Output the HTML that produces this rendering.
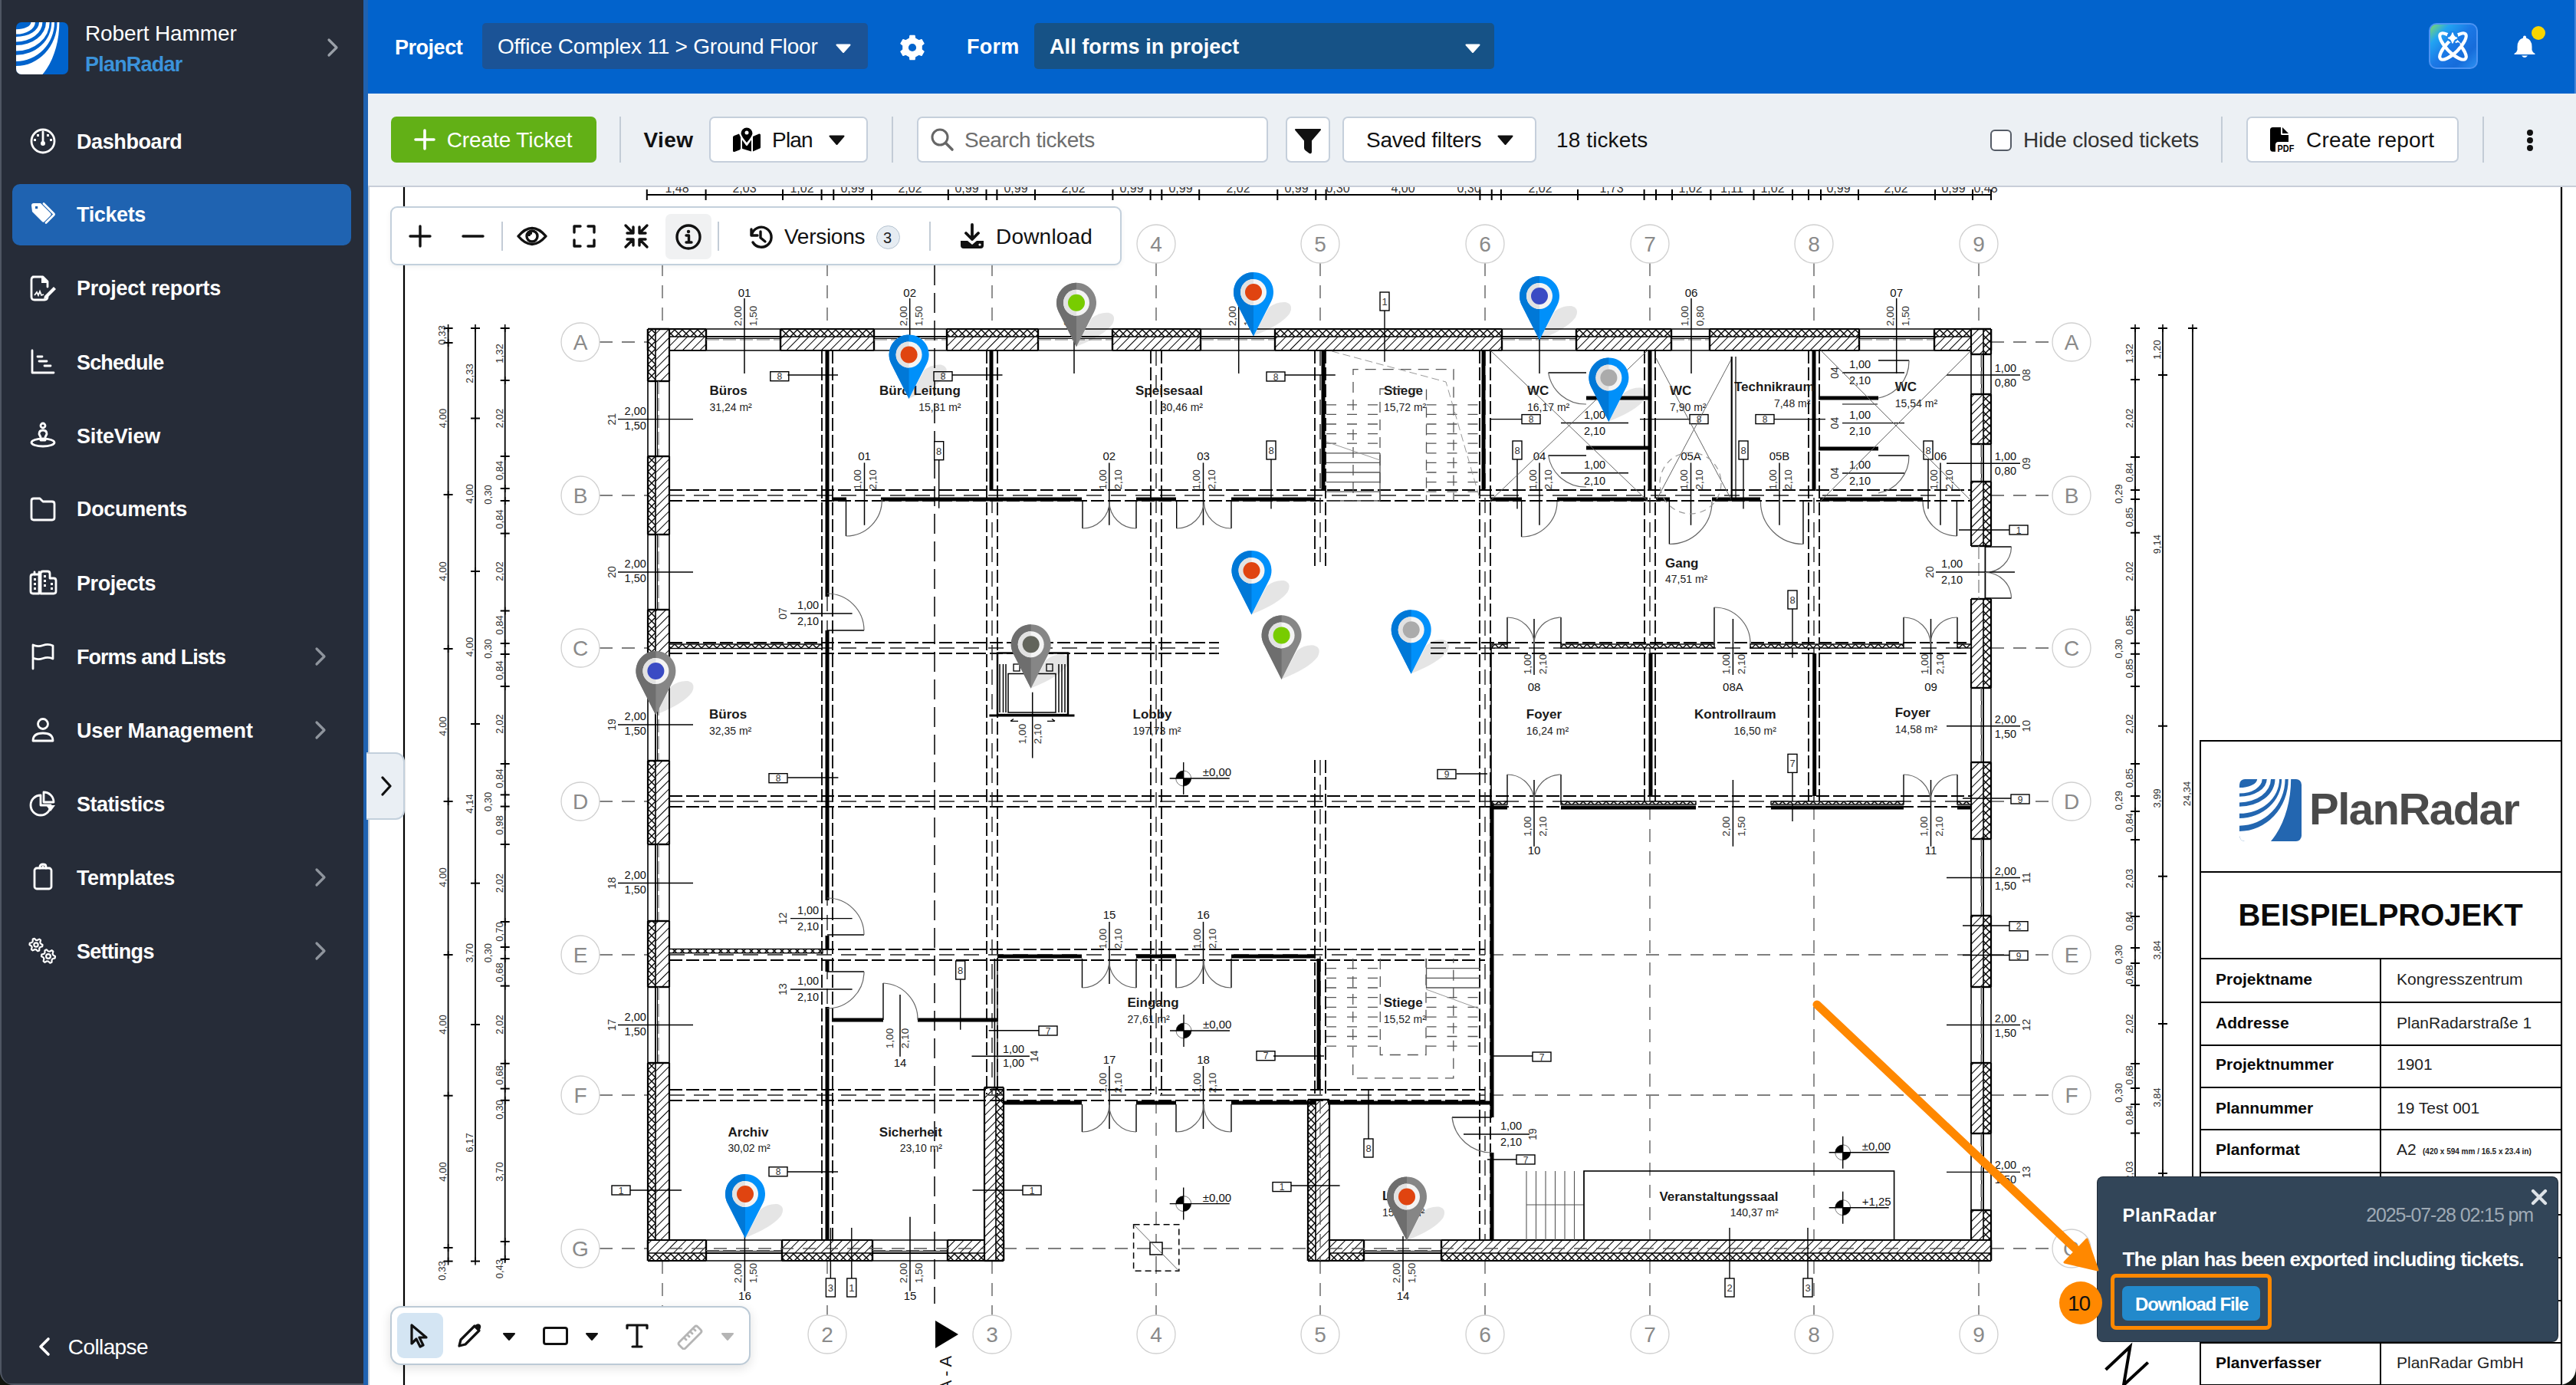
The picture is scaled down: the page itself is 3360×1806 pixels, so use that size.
<!DOCTYPE html>
<html><head><meta charset="utf-8"><style>
html,body{margin:0;padding:0;}
body{width:3360px;height:1806px;position:relative;overflow:hidden;background:#1a1d16;font-family:"Liberation Sans",sans-serif;}
.t{position:absolute;line-height:1;white-space:nowrap;}
#sb{position:absolute;left:0;top:0;width:474px;height:1806px;background:#262C38;}
svg text{font-family:"Liberation Sans",sans-serif;}
</style></head><body>
<svg style="position:absolute;left:0;top:0" width="3360" height="1806" viewBox="0 0 3360 1806">
<clipPath id="pc"><rect x="482" y="244" width="2878" height="1562"/></clipPath>
<g clip-path="url(#pc)">
<defs>
<pattern id="dh" width="8" height="8" patternUnits="userSpaceOnUse" patternTransform="rotate(45)"><rect width="8" height="8" fill="#fff"/><line x1="0" y1="0" x2="0" y2="8" stroke="#000" stroke-width="2.0"/></pattern>
<pattern id="xh" width="10" height="10" patternUnits="userSpaceOnUse"><rect width="10" height="10" fill="#fff"/><path d="M0 0 L10 10 M10 0 L0 10" stroke="#000" stroke-width="1.4"/></pattern>
</defs>
<rect x="482" y="244" width="2878" height="1562" fill="#fff"/>
<line x1="527.0" y1="244.0" x2="527.0" y2="1806.0" stroke="#000" stroke-width="2.2"/>
<line x1="3341.0" y1="244.0" x2="3341.0" y2="1806.0" stroke="#000" stroke-width="2.2"/>
<line x1="864.0" y1="343.0" x2="864.0" y2="429.0" stroke="#555" stroke-width="1.3" stroke-dasharray="17 12"/>
<line x1="864.0" y1="1644.0" x2="864.0" y2="1715.0" stroke="#555" stroke-width="1.3" stroke-dasharray="17 12"/>
<line x1="1079.0" y1="343.0" x2="1079.0" y2="429.0" stroke="#555" stroke-width="1.3" stroke-dasharray="17 12"/>
<line x1="1079.0" y1="1644.0" x2="1079.0" y2="1715.0" stroke="#555" stroke-width="1.3" stroke-dasharray="17 12"/>
<line x1="1294.0" y1="343.0" x2="1294.0" y2="429.0" stroke="#555" stroke-width="1.3" stroke-dasharray="17 12"/>
<line x1="1294.0" y1="1644.0" x2="1294.0" y2="1715.0" stroke="#555" stroke-width="1.3" stroke-dasharray="17 12"/>
<line x1="1508.0" y1="343.0" x2="1508.0" y2="429.0" stroke="#555" stroke-width="1.3" stroke-dasharray="17 12"/>
<line x1="1508.0" y1="1644.0" x2="1508.0" y2="1715.0" stroke="#555" stroke-width="1.3" stroke-dasharray="17 12"/>
<line x1="1722.0" y1="343.0" x2="1722.0" y2="429.0" stroke="#555" stroke-width="1.3" stroke-dasharray="17 12"/>
<line x1="1722.0" y1="1644.0" x2="1722.0" y2="1715.0" stroke="#555" stroke-width="1.3" stroke-dasharray="17 12"/>
<line x1="1937.0" y1="343.0" x2="1937.0" y2="429.0" stroke="#555" stroke-width="1.3" stroke-dasharray="17 12"/>
<line x1="1937.0" y1="1644.0" x2="1937.0" y2="1715.0" stroke="#555" stroke-width="1.3" stroke-dasharray="17 12"/>
<line x1="2152.0" y1="343.0" x2="2152.0" y2="429.0" stroke="#555" stroke-width="1.3" stroke-dasharray="17 12"/>
<line x1="2152.0" y1="1644.0" x2="2152.0" y2="1715.0" stroke="#555" stroke-width="1.3" stroke-dasharray="17 12"/>
<line x1="2366.0" y1="343.0" x2="2366.0" y2="429.0" stroke="#555" stroke-width="1.3" stroke-dasharray="17 12"/>
<line x1="2366.0" y1="1644.0" x2="2366.0" y2="1715.0" stroke="#555" stroke-width="1.3" stroke-dasharray="17 12"/>
<line x1="2581.0" y1="343.0" x2="2581.0" y2="429.0" stroke="#555" stroke-width="1.3" stroke-dasharray="17 12"/>
<line x1="2581.0" y1="1644.0" x2="2581.0" y2="1715.0" stroke="#555" stroke-width="1.3" stroke-dasharray="17 12"/>
<line x1="782.0" y1="446.0" x2="845.0" y2="446.0" stroke="#555" stroke-width="1.3" stroke-dasharray="17 12"/>
<line x1="2597.0" y1="446.0" x2="2677.0" y2="446.0" stroke="#555" stroke-width="1.3" stroke-dasharray="17 12"/>
<line x1="782.0" y1="646.0" x2="845.0" y2="646.0" stroke="#555" stroke-width="1.3" stroke-dasharray="17 12"/>
<line x1="2597.0" y1="646.0" x2="2677.0" y2="646.0" stroke="#555" stroke-width="1.3" stroke-dasharray="17 12"/>
<line x1="782.0" y1="845.0" x2="845.0" y2="845.0" stroke="#555" stroke-width="1.3" stroke-dasharray="17 12"/>
<line x1="2597.0" y1="845.0" x2="2677.0" y2="845.0" stroke="#555" stroke-width="1.3" stroke-dasharray="17 12"/>
<line x1="782.0" y1="1045.0" x2="845.0" y2="1045.0" stroke="#555" stroke-width="1.3" stroke-dasharray="17 12"/>
<line x1="2597.0" y1="1045.0" x2="2677.0" y2="1045.0" stroke="#555" stroke-width="1.3" stroke-dasharray="17 12"/>
<line x1="782.0" y1="1245.0" x2="845.0" y2="1245.0" stroke="#555" stroke-width="1.3" stroke-dasharray="17 12"/>
<line x1="2597.0" y1="1245.0" x2="2677.0" y2="1245.0" stroke="#555" stroke-width="1.3" stroke-dasharray="17 12"/>
<line x1="782.0" y1="1428.0" x2="845.0" y2="1428.0" stroke="#555" stroke-width="1.3" stroke-dasharray="17 12"/>
<line x1="2597.0" y1="1428.0" x2="2677.0" y2="1428.0" stroke="#555" stroke-width="1.3" stroke-dasharray="17 12"/>
<line x1="782.0" y1="1628.0" x2="845.0" y2="1628.0" stroke="#555" stroke-width="1.3" stroke-dasharray="17 12"/>
<line x1="2597.0" y1="1628.0" x2="2677.0" y2="1628.0" stroke="#555" stroke-width="1.3" stroke-dasharray="17 12"/>
<circle cx="1079" cy="1740" r="25" fill="#fff" stroke="#d0d0d0" stroke-width="1.3"/>
<text x="1079.0" y="1750.0" font-size="28" font-weight="400" text-anchor="middle" fill="#8a8a8a">2</text>
<circle cx="1294" cy="1740" r="25" fill="#fff" stroke="#d0d0d0" stroke-width="1.3"/>
<text x="1294.0" y="1750.0" font-size="28" font-weight="400" text-anchor="middle" fill="#8a8a8a">3</text>
<circle cx="1508" cy="318" r="25" fill="#fff" stroke="#d0d0d0" stroke-width="1.3"/>
<text x="1508.0" y="328.0" font-size="28" font-weight="400" text-anchor="middle" fill="#8a8a8a">4</text>
<circle cx="1508" cy="1740" r="25" fill="#fff" stroke="#d0d0d0" stroke-width="1.3"/>
<text x="1508.0" y="1750.0" font-size="28" font-weight="400" text-anchor="middle" fill="#8a8a8a">4</text>
<circle cx="1722" cy="318" r="25" fill="#fff" stroke="#d0d0d0" stroke-width="1.3"/>
<text x="1722.0" y="328.0" font-size="28" font-weight="400" text-anchor="middle" fill="#8a8a8a">5</text>
<circle cx="1722" cy="1740" r="25" fill="#fff" stroke="#d0d0d0" stroke-width="1.3"/>
<text x="1722.0" y="1750.0" font-size="28" font-weight="400" text-anchor="middle" fill="#8a8a8a">5</text>
<circle cx="1937" cy="318" r="25" fill="#fff" stroke="#d0d0d0" stroke-width="1.3"/>
<text x="1937.0" y="328.0" font-size="28" font-weight="400" text-anchor="middle" fill="#8a8a8a">6</text>
<circle cx="1937" cy="1740" r="25" fill="#fff" stroke="#d0d0d0" stroke-width="1.3"/>
<text x="1937.0" y="1750.0" font-size="28" font-weight="400" text-anchor="middle" fill="#8a8a8a">6</text>
<circle cx="2152" cy="318" r="25" fill="#fff" stroke="#d0d0d0" stroke-width="1.3"/>
<text x="2152.0" y="328.0" font-size="28" font-weight="400" text-anchor="middle" fill="#8a8a8a">7</text>
<circle cx="2152" cy="1740" r="25" fill="#fff" stroke="#d0d0d0" stroke-width="1.3"/>
<text x="2152.0" y="1750.0" font-size="28" font-weight="400" text-anchor="middle" fill="#8a8a8a">7</text>
<circle cx="2366" cy="318" r="25" fill="#fff" stroke="#d0d0d0" stroke-width="1.3"/>
<text x="2366.0" y="328.0" font-size="28" font-weight="400" text-anchor="middle" fill="#8a8a8a">8</text>
<circle cx="2366" cy="1740" r="25" fill="#fff" stroke="#d0d0d0" stroke-width="1.3"/>
<text x="2366.0" y="1750.0" font-size="28" font-weight="400" text-anchor="middle" fill="#8a8a8a">8</text>
<circle cx="2581" cy="318" r="25" fill="#fff" stroke="#d0d0d0" stroke-width="1.3"/>
<text x="2581.0" y="328.0" font-size="28" font-weight="400" text-anchor="middle" fill="#8a8a8a">9</text>
<circle cx="2581" cy="1740" r="25" fill="#fff" stroke="#d0d0d0" stroke-width="1.3"/>
<text x="2581.0" y="1750.0" font-size="28" font-weight="400" text-anchor="middle" fill="#8a8a8a">9</text>
<circle cx="757" cy="446" r="25" fill="#fff" stroke="#d0d0d0" stroke-width="1.3"/>
<text x="757.0" y="456.0" font-size="28" font-weight="400" text-anchor="middle" fill="#8a8a8a">A</text>
<circle cx="2702" cy="446" r="25" fill="#fff" stroke="#d0d0d0" stroke-width="1.3"/>
<text x="2702.0" y="456.0" font-size="28" font-weight="400" text-anchor="middle" fill="#8a8a8a">A</text>
<circle cx="757" cy="646" r="25" fill="#fff" stroke="#d0d0d0" stroke-width="1.3"/>
<text x="757.0" y="656.0" font-size="28" font-weight="400" text-anchor="middle" fill="#8a8a8a">B</text>
<circle cx="2702" cy="646" r="25" fill="#fff" stroke="#d0d0d0" stroke-width="1.3"/>
<text x="2702.0" y="656.0" font-size="28" font-weight="400" text-anchor="middle" fill="#8a8a8a">B</text>
<circle cx="757" cy="845" r="25" fill="#fff" stroke="#d0d0d0" stroke-width="1.3"/>
<text x="757.0" y="855.0" font-size="28" font-weight="400" text-anchor="middle" fill="#8a8a8a">C</text>
<circle cx="2702" cy="845" r="25" fill="#fff" stroke="#d0d0d0" stroke-width="1.3"/>
<text x="2702.0" y="855.0" font-size="28" font-weight="400" text-anchor="middle" fill="#8a8a8a">C</text>
<circle cx="757" cy="1045" r="25" fill="#fff" stroke="#d0d0d0" stroke-width="1.3"/>
<text x="757.0" y="1055.0" font-size="28" font-weight="400" text-anchor="middle" fill="#8a8a8a">D</text>
<circle cx="2702" cy="1045" r="25" fill="#fff" stroke="#d0d0d0" stroke-width="1.3"/>
<text x="2702.0" y="1055.0" font-size="28" font-weight="400" text-anchor="middle" fill="#8a8a8a">D</text>
<circle cx="757" cy="1245" r="25" fill="#fff" stroke="#d0d0d0" stroke-width="1.3"/>
<text x="757.0" y="1255.0" font-size="28" font-weight="400" text-anchor="middle" fill="#8a8a8a">E</text>
<circle cx="2702" cy="1245" r="25" fill="#fff" stroke="#d0d0d0" stroke-width="1.3"/>
<text x="2702.0" y="1255.0" font-size="28" font-weight="400" text-anchor="middle" fill="#8a8a8a">E</text>
<circle cx="757" cy="1428" r="25" fill="#fff" stroke="#d0d0d0" stroke-width="1.3"/>
<text x="757.0" y="1438.0" font-size="28" font-weight="400" text-anchor="middle" fill="#8a8a8a">F</text>
<circle cx="2702" cy="1428" r="25" fill="#fff" stroke="#d0d0d0" stroke-width="1.3"/>
<text x="2702.0" y="1438.0" font-size="28" font-weight="400" text-anchor="middle" fill="#8a8a8a">F</text>
<circle cx="757" cy="1628" r="25" fill="#fff" stroke="#d0d0d0" stroke-width="1.3"/>
<text x="757.0" y="1638.0" font-size="28" font-weight="400" text-anchor="middle" fill="#8a8a8a">G</text>
<circle cx="2702" cy="1628" r="25" fill="#fff" stroke="#d0d0d0" stroke-width="1.3"/>
<text x="2702.0" y="1638.0" font-size="28" font-weight="400" text-anchor="middle" fill="#8a8a8a">G</text>
<rect x="845.0" y="429.0" width="76.0" height="10.0" fill="url(#xh)" stroke="none" stroke-width="0"/>
<rect x="845.0" y="439.0" width="76.0" height="18.0" fill="url(#dh)" stroke="none" stroke-width="0"/>
<line x1="845.0" y1="429.0" x2="921.0" y2="429.0" stroke="#000" stroke-width="2.2"/>
<line x1="845.0" y1="457.0" x2="921.0" y2="457.0" stroke="#000" stroke-width="2.2"/>
<line x1="845.0" y1="439.0" x2="921.0" y2="439.0" stroke="#000" stroke-width="1.6"/>
<line x1="845.0" y1="429.0" x2="845.0" y2="457.0" stroke="#000" stroke-width="2.4"/>
<line x1="921.0" y1="429.0" x2="921.0" y2="457.0" stroke="#000" stroke-width="2.4"/>
<line x1="921.0" y1="429.0" x2="1018.0" y2="429.0" stroke="#000" stroke-width="1.6"/>
<line x1="921.0" y1="439.0" x2="1018.0" y2="439.0" stroke="#000" stroke-width="2.0"/>
<line x1="921.0" y1="441.5" x2="1018.0" y2="441.5" stroke="#000" stroke-width="1.0"/>
<line x1="921.0" y1="457.0" x2="1018.0" y2="457.0" stroke="#000" stroke-width="1.6"/>
<line x1="921.0" y1="443.0" x2="1018.0" y2="443.0" stroke="#777" stroke-width="1.2" stroke-dasharray="17 5"/>
<rect x="1018.0" y="429.0" width="122.0" height="10.0" fill="url(#xh)" stroke="none" stroke-width="0"/>
<rect x="1018.0" y="439.0" width="122.0" height="18.0" fill="url(#dh)" stroke="none" stroke-width="0"/>
<line x1="1018.0" y1="429.0" x2="1140.0" y2="429.0" stroke="#000" stroke-width="2.2"/>
<line x1="1018.0" y1="457.0" x2="1140.0" y2="457.0" stroke="#000" stroke-width="2.2"/>
<line x1="1018.0" y1="439.0" x2="1140.0" y2="439.0" stroke="#000" stroke-width="1.6"/>
<line x1="1018.0" y1="429.0" x2="1018.0" y2="457.0" stroke="#000" stroke-width="2.4"/>
<line x1="1140.0" y1="429.0" x2="1140.0" y2="457.0" stroke="#000" stroke-width="2.4"/>
<line x1="1140.0" y1="429.0" x2="1235.0" y2="429.0" stroke="#000" stroke-width="1.6"/>
<line x1="1140.0" y1="439.0" x2="1235.0" y2="439.0" stroke="#000" stroke-width="2.0"/>
<line x1="1140.0" y1="441.5" x2="1235.0" y2="441.5" stroke="#000" stroke-width="1.0"/>
<line x1="1140.0" y1="457.0" x2="1235.0" y2="457.0" stroke="#000" stroke-width="1.6"/>
<line x1="1140.0" y1="443.0" x2="1235.0" y2="443.0" stroke="#777" stroke-width="1.2" stroke-dasharray="17 5"/>
<rect x="1235.0" y="429.0" width="119.0" height="10.0" fill="url(#xh)" stroke="none" stroke-width="0"/>
<rect x="1235.0" y="439.0" width="119.0" height="18.0" fill="url(#dh)" stroke="none" stroke-width="0"/>
<line x1="1235.0" y1="429.0" x2="1354.0" y2="429.0" stroke="#000" stroke-width="2.2"/>
<line x1="1235.0" y1="457.0" x2="1354.0" y2="457.0" stroke="#000" stroke-width="2.2"/>
<line x1="1235.0" y1="439.0" x2="1354.0" y2="439.0" stroke="#000" stroke-width="1.6"/>
<line x1="1235.0" y1="429.0" x2="1235.0" y2="457.0" stroke="#000" stroke-width="2.4"/>
<line x1="1354.0" y1="429.0" x2="1354.0" y2="457.0" stroke="#000" stroke-width="2.4"/>
<line x1="1354.0" y1="429.0" x2="1451.0" y2="429.0" stroke="#000" stroke-width="1.6"/>
<line x1="1354.0" y1="439.0" x2="1451.0" y2="439.0" stroke="#000" stroke-width="2.0"/>
<line x1="1354.0" y1="441.5" x2="1451.0" y2="441.5" stroke="#000" stroke-width="1.0"/>
<line x1="1354.0" y1="457.0" x2="1451.0" y2="457.0" stroke="#000" stroke-width="1.6"/>
<line x1="1354.0" y1="443.0" x2="1451.0" y2="443.0" stroke="#777" stroke-width="1.2" stroke-dasharray="17 5"/>
<rect x="1451.0" y="429.0" width="115.0" height="10.0" fill="url(#xh)" stroke="none" stroke-width="0"/>
<rect x="1451.0" y="439.0" width="115.0" height="18.0" fill="url(#dh)" stroke="none" stroke-width="0"/>
<line x1="1451.0" y1="429.0" x2="1566.0" y2="429.0" stroke="#000" stroke-width="2.2"/>
<line x1="1451.0" y1="457.0" x2="1566.0" y2="457.0" stroke="#000" stroke-width="2.2"/>
<line x1="1451.0" y1="439.0" x2="1566.0" y2="439.0" stroke="#000" stroke-width="1.6"/>
<line x1="1451.0" y1="429.0" x2="1451.0" y2="457.0" stroke="#000" stroke-width="2.4"/>
<line x1="1566.0" y1="429.0" x2="1566.0" y2="457.0" stroke="#000" stroke-width="2.4"/>
<line x1="1566.0" y1="429.0" x2="1663.0" y2="429.0" stroke="#000" stroke-width="1.6"/>
<line x1="1566.0" y1="439.0" x2="1663.0" y2="439.0" stroke="#000" stroke-width="2.0"/>
<line x1="1566.0" y1="441.5" x2="1663.0" y2="441.5" stroke="#000" stroke-width="1.0"/>
<line x1="1566.0" y1="457.0" x2="1663.0" y2="457.0" stroke="#000" stroke-width="1.6"/>
<line x1="1566.0" y1="443.0" x2="1663.0" y2="443.0" stroke="#777" stroke-width="1.2" stroke-dasharray="17 5"/>
<rect x="1663.0" y="429.0" width="296.0" height="10.0" fill="url(#xh)" stroke="none" stroke-width="0"/>
<rect x="1663.0" y="439.0" width="296.0" height="18.0" fill="url(#dh)" stroke="none" stroke-width="0"/>
<line x1="1663.0" y1="429.0" x2="1959.0" y2="429.0" stroke="#000" stroke-width="2.2"/>
<line x1="1663.0" y1="457.0" x2="1959.0" y2="457.0" stroke="#000" stroke-width="2.2"/>
<line x1="1663.0" y1="439.0" x2="1959.0" y2="439.0" stroke="#000" stroke-width="1.6"/>
<line x1="1663.0" y1="429.0" x2="1663.0" y2="457.0" stroke="#000" stroke-width="2.4"/>
<line x1="1959.0" y1="429.0" x2="1959.0" y2="457.0" stroke="#000" stroke-width="2.4"/>
<line x1="1959.0" y1="429.0" x2="2056.0" y2="429.0" stroke="#000" stroke-width="1.6"/>
<line x1="1959.0" y1="439.0" x2="2056.0" y2="439.0" stroke="#000" stroke-width="2.0"/>
<line x1="1959.0" y1="441.5" x2="2056.0" y2="441.5" stroke="#000" stroke-width="1.0"/>
<line x1="1959.0" y1="457.0" x2="2056.0" y2="457.0" stroke="#000" stroke-width="1.6"/>
<line x1="1959.0" y1="443.0" x2="2056.0" y2="443.0" stroke="#777" stroke-width="1.2" stroke-dasharray="17 5"/>
<rect x="2056.0" y="429.0" width="124.0" height="10.0" fill="url(#xh)" stroke="none" stroke-width="0"/>
<rect x="2056.0" y="439.0" width="124.0" height="18.0" fill="url(#dh)" stroke="none" stroke-width="0"/>
<line x1="2056.0" y1="429.0" x2="2180.0" y2="429.0" stroke="#000" stroke-width="2.2"/>
<line x1="2056.0" y1="457.0" x2="2180.0" y2="457.0" stroke="#000" stroke-width="2.2"/>
<line x1="2056.0" y1="439.0" x2="2180.0" y2="439.0" stroke="#000" stroke-width="1.6"/>
<line x1="2056.0" y1="429.0" x2="2056.0" y2="457.0" stroke="#000" stroke-width="2.4"/>
<line x1="2180.0" y1="429.0" x2="2180.0" y2="457.0" stroke="#000" stroke-width="2.4"/>
<line x1="2180.0" y1="429.0" x2="2230.0" y2="429.0" stroke="#000" stroke-width="1.6"/>
<line x1="2180.0" y1="439.0" x2="2230.0" y2="439.0" stroke="#000" stroke-width="2.0"/>
<line x1="2180.0" y1="441.5" x2="2230.0" y2="441.5" stroke="#000" stroke-width="1.0"/>
<line x1="2180.0" y1="457.0" x2="2230.0" y2="457.0" stroke="#000" stroke-width="1.6"/>
<line x1="2180.0" y1="443.0" x2="2230.0" y2="443.0" stroke="#777" stroke-width="1.2" stroke-dasharray="17 5"/>
<rect x="2230.0" y="429.0" width="195.0" height="10.0" fill="url(#xh)" stroke="none" stroke-width="0"/>
<rect x="2230.0" y="439.0" width="195.0" height="18.0" fill="url(#dh)" stroke="none" stroke-width="0"/>
<line x1="2230.0" y1="429.0" x2="2425.0" y2="429.0" stroke="#000" stroke-width="2.2"/>
<line x1="2230.0" y1="457.0" x2="2425.0" y2="457.0" stroke="#000" stroke-width="2.2"/>
<line x1="2230.0" y1="439.0" x2="2425.0" y2="439.0" stroke="#000" stroke-width="1.6"/>
<line x1="2230.0" y1="429.0" x2="2230.0" y2="457.0" stroke="#000" stroke-width="2.4"/>
<line x1="2425.0" y1="429.0" x2="2425.0" y2="457.0" stroke="#000" stroke-width="2.4"/>
<line x1="2425.0" y1="429.0" x2="2523.0" y2="429.0" stroke="#000" stroke-width="1.6"/>
<line x1="2425.0" y1="439.0" x2="2523.0" y2="439.0" stroke="#000" stroke-width="2.0"/>
<line x1="2425.0" y1="441.5" x2="2523.0" y2="441.5" stroke="#000" stroke-width="1.0"/>
<line x1="2425.0" y1="457.0" x2="2523.0" y2="457.0" stroke="#000" stroke-width="1.6"/>
<line x1="2425.0" y1="443.0" x2="2523.0" y2="443.0" stroke="#777" stroke-width="1.2" stroke-dasharray="17 5"/>
<rect x="2523.0" y="429.0" width="74.0" height="10.0" fill="url(#xh)" stroke="none" stroke-width="0"/>
<rect x="2523.0" y="439.0" width="74.0" height="18.0" fill="url(#dh)" stroke="none" stroke-width="0"/>
<line x1="2523.0" y1="429.0" x2="2597.0" y2="429.0" stroke="#000" stroke-width="2.2"/>
<line x1="2523.0" y1="457.0" x2="2597.0" y2="457.0" stroke="#000" stroke-width="2.2"/>
<line x1="2523.0" y1="439.0" x2="2597.0" y2="439.0" stroke="#000" stroke-width="1.6"/>
<line x1="2523.0" y1="429.0" x2="2523.0" y2="457.0" stroke="#000" stroke-width="2.4"/>
<line x1="2597.0" y1="429.0" x2="2597.0" y2="457.0" stroke="#000" stroke-width="2.4"/>
<rect x="845.0" y="429.0" width="10.0" height="68.0" fill="url(#xh)" stroke="none" stroke-width="0"/>
<rect x="855.0" y="429.0" width="18.0" height="68.0" fill="url(#dh)" stroke="none" stroke-width="0"/>
<line x1="845.0" y1="429.0" x2="845.0" y2="497.0" stroke="#000" stroke-width="2.2"/>
<line x1="873.0" y1="429.0" x2="873.0" y2="497.0" stroke="#000" stroke-width="2.2"/>
<line x1="855.0" y1="429.0" x2="855.0" y2="497.0" stroke="#000" stroke-width="1.6"/>
<line x1="845.0" y1="429.0" x2="873.0" y2="429.0" stroke="#000" stroke-width="2.4"/>
<line x1="845.0" y1="497.0" x2="873.0" y2="497.0" stroke="#000" stroke-width="2.4"/>
<line x1="845.0" y1="497.0" x2="845.0" y2="595.0" stroke="#000" stroke-width="1.6"/>
<line x1="855.0" y1="497.0" x2="855.0" y2="595.0" stroke="#000" stroke-width="2.0"/>
<line x1="857.5" y1="497.0" x2="857.5" y2="595.0" stroke="#000" stroke-width="1.0"/>
<line x1="873.0" y1="497.0" x2="873.0" y2="595.0" stroke="#000" stroke-width="1.6"/>
<line x1="859.0" y1="497.0" x2="859.0" y2="595.0" stroke="#777" stroke-width="1.2" stroke-dasharray="17 5"/>
<rect x="845.0" y="595.0" width="10.0" height="102.0" fill="url(#xh)" stroke="none" stroke-width="0"/>
<rect x="855.0" y="595.0" width="18.0" height="102.0" fill="url(#dh)" stroke="none" stroke-width="0"/>
<line x1="845.0" y1="595.0" x2="845.0" y2="697.0" stroke="#000" stroke-width="2.2"/>
<line x1="873.0" y1="595.0" x2="873.0" y2="697.0" stroke="#000" stroke-width="2.2"/>
<line x1="855.0" y1="595.0" x2="855.0" y2="697.0" stroke="#000" stroke-width="1.6"/>
<line x1="845.0" y1="595.0" x2="873.0" y2="595.0" stroke="#000" stroke-width="2.4"/>
<line x1="845.0" y1="697.0" x2="873.0" y2="697.0" stroke="#000" stroke-width="2.4"/>
<line x1="845.0" y1="697.0" x2="845.0" y2="795.0" stroke="#000" stroke-width="1.6"/>
<line x1="855.0" y1="697.0" x2="855.0" y2="795.0" stroke="#000" stroke-width="2.0"/>
<line x1="857.5" y1="697.0" x2="857.5" y2="795.0" stroke="#000" stroke-width="1.0"/>
<line x1="873.0" y1="697.0" x2="873.0" y2="795.0" stroke="#000" stroke-width="1.6"/>
<line x1="859.0" y1="697.0" x2="859.0" y2="795.0" stroke="#777" stroke-width="1.2" stroke-dasharray="17 5"/>
<rect x="845.0" y="795.0" width="10.0" height="99.0" fill="url(#xh)" stroke="none" stroke-width="0"/>
<rect x="855.0" y="795.0" width="18.0" height="99.0" fill="url(#dh)" stroke="none" stroke-width="0"/>
<line x1="845.0" y1="795.0" x2="845.0" y2="894.0" stroke="#000" stroke-width="2.2"/>
<line x1="873.0" y1="795.0" x2="873.0" y2="894.0" stroke="#000" stroke-width="2.2"/>
<line x1="855.0" y1="795.0" x2="855.0" y2="894.0" stroke="#000" stroke-width="1.6"/>
<line x1="845.0" y1="795.0" x2="873.0" y2="795.0" stroke="#000" stroke-width="2.4"/>
<line x1="845.0" y1="894.0" x2="873.0" y2="894.0" stroke="#000" stroke-width="2.4"/>
<line x1="845.0" y1="894.0" x2="845.0" y2="992.0" stroke="#000" stroke-width="1.6"/>
<line x1="855.0" y1="894.0" x2="855.0" y2="992.0" stroke="#000" stroke-width="2.0"/>
<line x1="857.5" y1="894.0" x2="857.5" y2="992.0" stroke="#000" stroke-width="1.0"/>
<line x1="873.0" y1="894.0" x2="873.0" y2="992.0" stroke="#000" stroke-width="1.6"/>
<line x1="859.0" y1="894.0" x2="859.0" y2="992.0" stroke="#777" stroke-width="1.2" stroke-dasharray="17 5"/>
<rect x="845.0" y="992.0" width="10.0" height="109.0" fill="url(#xh)" stroke="none" stroke-width="0"/>
<rect x="855.0" y="992.0" width="18.0" height="109.0" fill="url(#dh)" stroke="none" stroke-width="0"/>
<line x1="845.0" y1="992.0" x2="845.0" y2="1101.0" stroke="#000" stroke-width="2.2"/>
<line x1="873.0" y1="992.0" x2="873.0" y2="1101.0" stroke="#000" stroke-width="2.2"/>
<line x1="855.0" y1="992.0" x2="855.0" y2="1101.0" stroke="#000" stroke-width="1.6"/>
<line x1="845.0" y1="992.0" x2="873.0" y2="992.0" stroke="#000" stroke-width="2.4"/>
<line x1="845.0" y1="1101.0" x2="873.0" y2="1101.0" stroke="#000" stroke-width="2.4"/>
<line x1="845.0" y1="1101.0" x2="845.0" y2="1201.0" stroke="#000" stroke-width="1.6"/>
<line x1="855.0" y1="1101.0" x2="855.0" y2="1201.0" stroke="#000" stroke-width="2.0"/>
<line x1="857.5" y1="1101.0" x2="857.5" y2="1201.0" stroke="#000" stroke-width="1.0"/>
<line x1="873.0" y1="1101.0" x2="873.0" y2="1201.0" stroke="#000" stroke-width="1.6"/>
<line x1="859.0" y1="1101.0" x2="859.0" y2="1201.0" stroke="#777" stroke-width="1.2" stroke-dasharray="17 5"/>
<rect x="845.0" y="1201.0" width="10.0" height="86.0" fill="url(#xh)" stroke="none" stroke-width="0"/>
<rect x="855.0" y="1201.0" width="18.0" height="86.0" fill="url(#dh)" stroke="none" stroke-width="0"/>
<line x1="845.0" y1="1201.0" x2="845.0" y2="1287.0" stroke="#000" stroke-width="2.2"/>
<line x1="873.0" y1="1201.0" x2="873.0" y2="1287.0" stroke="#000" stroke-width="2.2"/>
<line x1="855.0" y1="1201.0" x2="855.0" y2="1287.0" stroke="#000" stroke-width="1.6"/>
<line x1="845.0" y1="1201.0" x2="873.0" y2="1201.0" stroke="#000" stroke-width="2.4"/>
<line x1="845.0" y1="1287.0" x2="873.0" y2="1287.0" stroke="#000" stroke-width="2.4"/>
<line x1="845.0" y1="1287.0" x2="845.0" y2="1386.0" stroke="#000" stroke-width="1.6"/>
<line x1="855.0" y1="1287.0" x2="855.0" y2="1386.0" stroke="#000" stroke-width="2.0"/>
<line x1="857.5" y1="1287.0" x2="857.5" y2="1386.0" stroke="#000" stroke-width="1.0"/>
<line x1="873.0" y1="1287.0" x2="873.0" y2="1386.0" stroke="#000" stroke-width="1.6"/>
<line x1="859.0" y1="1287.0" x2="859.0" y2="1386.0" stroke="#777" stroke-width="1.2" stroke-dasharray="17 5"/>
<rect x="845.0" y="1386.0" width="10.0" height="258.0" fill="url(#xh)" stroke="none" stroke-width="0"/>
<rect x="855.0" y="1386.0" width="18.0" height="258.0" fill="url(#dh)" stroke="none" stroke-width="0"/>
<line x1="845.0" y1="1386.0" x2="845.0" y2="1644.0" stroke="#000" stroke-width="2.2"/>
<line x1="873.0" y1="1386.0" x2="873.0" y2="1644.0" stroke="#000" stroke-width="2.2"/>
<line x1="855.0" y1="1386.0" x2="855.0" y2="1644.0" stroke="#000" stroke-width="1.6"/>
<line x1="845.0" y1="1386.0" x2="873.0" y2="1386.0" stroke="#000" stroke-width="2.4"/>
<line x1="845.0" y1="1644.0" x2="873.0" y2="1644.0" stroke="#000" stroke-width="2.4"/>
<rect x="2587.0" y="429.0" width="10.0" height="33.0" fill="url(#xh)" stroke="none" stroke-width="0"/>
<rect x="2571.0" y="429.0" width="16.0" height="33.0" fill="url(#dh)" stroke="none" stroke-width="0"/>
<line x1="2597.0" y1="429.0" x2="2597.0" y2="462.0" stroke="#000" stroke-width="2.2"/>
<line x1="2571.0" y1="429.0" x2="2571.0" y2="462.0" stroke="#000" stroke-width="2.2"/>
<line x1="2587.0" y1="429.0" x2="2587.0" y2="462.0" stroke="#000" stroke-width="1.6"/>
<line x1="2571.0" y1="429.0" x2="2597.0" y2="429.0" stroke="#000" stroke-width="2.4"/>
<line x1="2571.0" y1="462.0" x2="2597.0" y2="462.0" stroke="#000" stroke-width="2.4"/>
<line x1="2597.0" y1="462.0" x2="2597.0" y2="514.0" stroke="#000" stroke-width="1.6"/>
<line x1="2587.0" y1="462.0" x2="2587.0" y2="514.0" stroke="#000" stroke-width="2.0"/>
<line x1="2584.5" y1="462.0" x2="2584.5" y2="514.0" stroke="#000" stroke-width="1.0"/>
<line x1="2571.0" y1="462.0" x2="2571.0" y2="514.0" stroke="#000" stroke-width="1.6"/>
<line x1="2584.0" y1="462.0" x2="2584.0" y2="514.0" stroke="#777" stroke-width="1.2" stroke-dasharray="17 5"/>
<rect x="2587.0" y="514.0" width="10.0" height="65.0" fill="url(#xh)" stroke="none" stroke-width="0"/>
<rect x="2571.0" y="514.0" width="16.0" height="65.0" fill="url(#dh)" stroke="none" stroke-width="0"/>
<line x1="2597.0" y1="514.0" x2="2597.0" y2="579.0" stroke="#000" stroke-width="2.2"/>
<line x1="2571.0" y1="514.0" x2="2571.0" y2="579.0" stroke="#000" stroke-width="2.2"/>
<line x1="2587.0" y1="514.0" x2="2587.0" y2="579.0" stroke="#000" stroke-width="1.6"/>
<line x1="2571.0" y1="514.0" x2="2597.0" y2="514.0" stroke="#000" stroke-width="2.4"/>
<line x1="2571.0" y1="579.0" x2="2597.0" y2="579.0" stroke="#000" stroke-width="2.4"/>
<line x1="2597.0" y1="579.0" x2="2597.0" y2="628.0" stroke="#000" stroke-width="1.6"/>
<line x1="2587.0" y1="579.0" x2="2587.0" y2="628.0" stroke="#000" stroke-width="2.0"/>
<line x1="2584.5" y1="579.0" x2="2584.5" y2="628.0" stroke="#000" stroke-width="1.0"/>
<line x1="2571.0" y1="579.0" x2="2571.0" y2="628.0" stroke="#000" stroke-width="1.6"/>
<line x1="2584.0" y1="579.0" x2="2584.0" y2="628.0" stroke="#777" stroke-width="1.2" stroke-dasharray="17 5"/>
<rect x="2587.0" y="628.0" width="10.0" height="84.0" fill="url(#xh)" stroke="none" stroke-width="0"/>
<rect x="2571.0" y="628.0" width="16.0" height="84.0" fill="url(#dh)" stroke="none" stroke-width="0"/>
<line x1="2597.0" y1="628.0" x2="2597.0" y2="712.0" stroke="#000" stroke-width="2.2"/>
<line x1="2571.0" y1="628.0" x2="2571.0" y2="712.0" stroke="#000" stroke-width="2.2"/>
<line x1="2587.0" y1="628.0" x2="2587.0" y2="712.0" stroke="#000" stroke-width="1.6"/>
<line x1="2571.0" y1="628.0" x2="2597.0" y2="628.0" stroke="#000" stroke-width="2.4"/>
<line x1="2571.0" y1="712.0" x2="2597.0" y2="712.0" stroke="#000" stroke-width="2.4"/>
<rect x="2587.0" y="781.0" width="10.0" height="116.0" fill="url(#xh)" stroke="none" stroke-width="0"/>
<rect x="2571.0" y="781.0" width="16.0" height="116.0" fill="url(#dh)" stroke="none" stroke-width="0"/>
<line x1="2597.0" y1="781.0" x2="2597.0" y2="897.0" stroke="#000" stroke-width="2.2"/>
<line x1="2571.0" y1="781.0" x2="2571.0" y2="897.0" stroke="#000" stroke-width="2.2"/>
<line x1="2587.0" y1="781.0" x2="2587.0" y2="897.0" stroke="#000" stroke-width="1.6"/>
<line x1="2571.0" y1="781.0" x2="2597.0" y2="781.0" stroke="#000" stroke-width="2.4"/>
<line x1="2571.0" y1="897.0" x2="2597.0" y2="897.0" stroke="#000" stroke-width="2.4"/>
<line x1="2597.0" y1="897.0" x2="2597.0" y2="994.0" stroke="#000" stroke-width="1.6"/>
<line x1="2587.0" y1="897.0" x2="2587.0" y2="994.0" stroke="#000" stroke-width="2.0"/>
<line x1="2584.5" y1="897.0" x2="2584.5" y2="994.0" stroke="#000" stroke-width="1.0"/>
<line x1="2571.0" y1="897.0" x2="2571.0" y2="994.0" stroke="#000" stroke-width="1.6"/>
<line x1="2584.0" y1="897.0" x2="2584.0" y2="994.0" stroke="#777" stroke-width="1.2" stroke-dasharray="17 5"/>
<rect x="2587.0" y="994.0" width="10.0" height="100.0" fill="url(#xh)" stroke="none" stroke-width="0"/>
<rect x="2571.0" y="994.0" width="16.0" height="100.0" fill="url(#dh)" stroke="none" stroke-width="0"/>
<line x1="2597.0" y1="994.0" x2="2597.0" y2="1094.0" stroke="#000" stroke-width="2.2"/>
<line x1="2571.0" y1="994.0" x2="2571.0" y2="1094.0" stroke="#000" stroke-width="2.2"/>
<line x1="2587.0" y1="994.0" x2="2587.0" y2="1094.0" stroke="#000" stroke-width="1.6"/>
<line x1="2571.0" y1="994.0" x2="2597.0" y2="994.0" stroke="#000" stroke-width="2.4"/>
<line x1="2571.0" y1="1094.0" x2="2597.0" y2="1094.0" stroke="#000" stroke-width="2.4"/>
<line x1="2597.0" y1="1094.0" x2="2597.0" y2="1194.0" stroke="#000" stroke-width="1.6"/>
<line x1="2587.0" y1="1094.0" x2="2587.0" y2="1194.0" stroke="#000" stroke-width="2.0"/>
<line x1="2584.5" y1="1094.0" x2="2584.5" y2="1194.0" stroke="#000" stroke-width="1.0"/>
<line x1="2571.0" y1="1094.0" x2="2571.0" y2="1194.0" stroke="#000" stroke-width="1.6"/>
<line x1="2584.0" y1="1094.0" x2="2584.0" y2="1194.0" stroke="#777" stroke-width="1.2" stroke-dasharray="17 5"/>
<rect x="2587.0" y="1194.0" width="10.0" height="93.0" fill="url(#xh)" stroke="none" stroke-width="0"/>
<rect x="2571.0" y="1194.0" width="16.0" height="93.0" fill="url(#dh)" stroke="none" stroke-width="0"/>
<line x1="2597.0" y1="1194.0" x2="2597.0" y2="1287.0" stroke="#000" stroke-width="2.2"/>
<line x1="2571.0" y1="1194.0" x2="2571.0" y2="1287.0" stroke="#000" stroke-width="2.2"/>
<line x1="2587.0" y1="1194.0" x2="2587.0" y2="1287.0" stroke="#000" stroke-width="1.6"/>
<line x1="2571.0" y1="1194.0" x2="2597.0" y2="1194.0" stroke="#000" stroke-width="2.4"/>
<line x1="2571.0" y1="1287.0" x2="2597.0" y2="1287.0" stroke="#000" stroke-width="2.4"/>
<line x1="2597.0" y1="1287.0" x2="2597.0" y2="1386.0" stroke="#000" stroke-width="1.6"/>
<line x1="2587.0" y1="1287.0" x2="2587.0" y2="1386.0" stroke="#000" stroke-width="2.0"/>
<line x1="2584.5" y1="1287.0" x2="2584.5" y2="1386.0" stroke="#000" stroke-width="1.0"/>
<line x1="2571.0" y1="1287.0" x2="2571.0" y2="1386.0" stroke="#000" stroke-width="1.6"/>
<line x1="2584.0" y1="1287.0" x2="2584.0" y2="1386.0" stroke="#777" stroke-width="1.2" stroke-dasharray="17 5"/>
<rect x="2587.0" y="1386.0" width="10.0" height="92.0" fill="url(#xh)" stroke="none" stroke-width="0"/>
<rect x="2571.0" y="1386.0" width="16.0" height="92.0" fill="url(#dh)" stroke="none" stroke-width="0"/>
<line x1="2597.0" y1="1386.0" x2="2597.0" y2="1478.0" stroke="#000" stroke-width="2.2"/>
<line x1="2571.0" y1="1386.0" x2="2571.0" y2="1478.0" stroke="#000" stroke-width="2.2"/>
<line x1="2587.0" y1="1386.0" x2="2587.0" y2="1478.0" stroke="#000" stroke-width="1.6"/>
<line x1="2571.0" y1="1386.0" x2="2597.0" y2="1386.0" stroke="#000" stroke-width="2.4"/>
<line x1="2571.0" y1="1478.0" x2="2597.0" y2="1478.0" stroke="#000" stroke-width="2.4"/>
<line x1="2597.0" y1="1478.0" x2="2597.0" y2="1578.0" stroke="#000" stroke-width="1.6"/>
<line x1="2587.0" y1="1478.0" x2="2587.0" y2="1578.0" stroke="#000" stroke-width="2.0"/>
<line x1="2584.5" y1="1478.0" x2="2584.5" y2="1578.0" stroke="#000" stroke-width="1.0"/>
<line x1="2571.0" y1="1478.0" x2="2571.0" y2="1578.0" stroke="#000" stroke-width="1.6"/>
<line x1="2584.0" y1="1478.0" x2="2584.0" y2="1578.0" stroke="#777" stroke-width="1.2" stroke-dasharray="17 5"/>
<rect x="2587.0" y="1578.0" width="10.0" height="66.0" fill="url(#xh)" stroke="none" stroke-width="0"/>
<rect x="2571.0" y="1578.0" width="16.0" height="66.0" fill="url(#dh)" stroke="none" stroke-width="0"/>
<line x1="2597.0" y1="1578.0" x2="2597.0" y2="1644.0" stroke="#000" stroke-width="2.2"/>
<line x1="2571.0" y1="1578.0" x2="2571.0" y2="1644.0" stroke="#000" stroke-width="2.2"/>
<line x1="2587.0" y1="1578.0" x2="2587.0" y2="1644.0" stroke="#000" stroke-width="1.6"/>
<line x1="2571.0" y1="1578.0" x2="2597.0" y2="1578.0" stroke="#000" stroke-width="2.4"/>
<line x1="2571.0" y1="1644.0" x2="2597.0" y2="1644.0" stroke="#000" stroke-width="2.4"/>
<line x1="2581.0" y1="712.0" x2="2581.0" y2="781.0" stroke="#777" stroke-width="1.2" stroke-dasharray="17 5"/>
<rect x="845.0" y="1634.0" width="76.0" height="10.0" fill="url(#xh)" stroke="none" stroke-width="0"/>
<rect x="845.0" y="1617.0" width="76.0" height="17.0" fill="url(#dh)" stroke="none" stroke-width="0"/>
<line x1="845.0" y1="1644.0" x2="921.0" y2="1644.0" stroke="#000" stroke-width="2.2"/>
<line x1="845.0" y1="1617.0" x2="921.0" y2="1617.0" stroke="#000" stroke-width="2.2"/>
<line x1="845.0" y1="1634.0" x2="921.0" y2="1634.0" stroke="#000" stroke-width="1.6"/>
<line x1="845.0" y1="1617.0" x2="845.0" y2="1644.0" stroke="#000" stroke-width="2.4"/>
<line x1="921.0" y1="1617.0" x2="921.0" y2="1644.0" stroke="#000" stroke-width="2.4"/>
<line x1="921.0" y1="1644.0" x2="1020.0" y2="1644.0" stroke="#000" stroke-width="1.6"/>
<line x1="921.0" y1="1634.0" x2="1020.0" y2="1634.0" stroke="#000" stroke-width="2.0"/>
<line x1="921.0" y1="1631.5" x2="1020.0" y2="1631.5" stroke="#000" stroke-width="1.0"/>
<line x1="921.0" y1="1617.0" x2="1020.0" y2="1617.0" stroke="#000" stroke-width="1.6"/>
<line x1="921.0" y1="1630.5" x2="1020.0" y2="1630.5" stroke="#777" stroke-width="1.2" stroke-dasharray="17 5"/>
<rect x="1020.0" y="1634.0" width="118.0" height="10.0" fill="url(#xh)" stroke="none" stroke-width="0"/>
<rect x="1020.0" y="1617.0" width="118.0" height="17.0" fill="url(#dh)" stroke="none" stroke-width="0"/>
<line x1="1020.0" y1="1644.0" x2="1138.0" y2="1644.0" stroke="#000" stroke-width="2.2"/>
<line x1="1020.0" y1="1617.0" x2="1138.0" y2="1617.0" stroke="#000" stroke-width="2.2"/>
<line x1="1020.0" y1="1634.0" x2="1138.0" y2="1634.0" stroke="#000" stroke-width="1.6"/>
<line x1="1020.0" y1="1617.0" x2="1020.0" y2="1644.0" stroke="#000" stroke-width="2.4"/>
<line x1="1138.0" y1="1617.0" x2="1138.0" y2="1644.0" stroke="#000" stroke-width="2.4"/>
<line x1="1138.0" y1="1644.0" x2="1236.0" y2="1644.0" stroke="#000" stroke-width="1.6"/>
<line x1="1138.0" y1="1634.0" x2="1236.0" y2="1634.0" stroke="#000" stroke-width="2.0"/>
<line x1="1138.0" y1="1631.5" x2="1236.0" y2="1631.5" stroke="#000" stroke-width="1.0"/>
<line x1="1138.0" y1="1617.0" x2="1236.0" y2="1617.0" stroke="#000" stroke-width="1.6"/>
<line x1="1138.0" y1="1630.5" x2="1236.0" y2="1630.5" stroke="#777" stroke-width="1.2" stroke-dasharray="17 5"/>
<rect x="1236.0" y="1634.0" width="73.0" height="10.0" fill="url(#xh)" stroke="none" stroke-width="0"/>
<rect x="1236.0" y="1617.0" width="73.0" height="17.0" fill="url(#dh)" stroke="none" stroke-width="0"/>
<line x1="1236.0" y1="1644.0" x2="1309.0" y2="1644.0" stroke="#000" stroke-width="2.2"/>
<line x1="1236.0" y1="1617.0" x2="1309.0" y2="1617.0" stroke="#000" stroke-width="2.2"/>
<line x1="1236.0" y1="1634.0" x2="1309.0" y2="1634.0" stroke="#000" stroke-width="1.6"/>
<line x1="1236.0" y1="1617.0" x2="1236.0" y2="1644.0" stroke="#000" stroke-width="2.4"/>
<line x1="1309.0" y1="1617.0" x2="1309.0" y2="1644.0" stroke="#000" stroke-width="2.4"/>
<rect x="1706.0" y="1634.0" width="73.0" height="10.0" fill="url(#xh)" stroke="none" stroke-width="0"/>
<rect x="1706.0" y="1617.0" width="73.0" height="17.0" fill="url(#dh)" stroke="none" stroke-width="0"/>
<line x1="1706.0" y1="1644.0" x2="1779.0" y2="1644.0" stroke="#000" stroke-width="2.2"/>
<line x1="1706.0" y1="1617.0" x2="1779.0" y2="1617.0" stroke="#000" stroke-width="2.2"/>
<line x1="1706.0" y1="1634.0" x2="1779.0" y2="1634.0" stroke="#000" stroke-width="1.6"/>
<line x1="1706.0" y1="1617.0" x2="1706.0" y2="1644.0" stroke="#000" stroke-width="2.4"/>
<line x1="1779.0" y1="1617.0" x2="1779.0" y2="1644.0" stroke="#000" stroke-width="2.4"/>
<line x1="1779.0" y1="1644.0" x2="1880.0" y2="1644.0" stroke="#000" stroke-width="1.6"/>
<line x1="1779.0" y1="1634.0" x2="1880.0" y2="1634.0" stroke="#000" stroke-width="2.0"/>
<line x1="1779.0" y1="1631.5" x2="1880.0" y2="1631.5" stroke="#000" stroke-width="1.0"/>
<line x1="1779.0" y1="1617.0" x2="1880.0" y2="1617.0" stroke="#000" stroke-width="1.6"/>
<line x1="1779.0" y1="1630.5" x2="1880.0" y2="1630.5" stroke="#777" stroke-width="1.2" stroke-dasharray="17 5"/>
<rect x="1880.0" y="1634.0" width="717.0" height="10.0" fill="url(#xh)" stroke="none" stroke-width="0"/>
<rect x="1880.0" y="1617.0" width="717.0" height="17.0" fill="url(#dh)" stroke="none" stroke-width="0"/>
<line x1="1880.0" y1="1644.0" x2="2597.0" y2="1644.0" stroke="#000" stroke-width="2.2"/>
<line x1="1880.0" y1="1617.0" x2="2597.0" y2="1617.0" stroke="#000" stroke-width="2.2"/>
<line x1="1880.0" y1="1634.0" x2="2597.0" y2="1634.0" stroke="#000" stroke-width="1.6"/>
<line x1="1880.0" y1="1617.0" x2="1880.0" y2="1644.0" stroke="#000" stroke-width="2.4"/>
<line x1="2597.0" y1="1617.0" x2="2597.0" y2="1644.0" stroke="#000" stroke-width="2.4"/>
<rect x="1299.0" y="1418.0" width="10.0" height="226.0" fill="url(#xh)" stroke="none" stroke-width="0"/>
<rect x="1284.0" y="1418.0" width="15.0" height="226.0" fill="url(#dh)" stroke="none" stroke-width="0"/>
<line x1="1309.0" y1="1418.0" x2="1309.0" y2="1644.0" stroke="#000" stroke-width="2.2"/>
<line x1="1284.0" y1="1418.0" x2="1284.0" y2="1644.0" stroke="#000" stroke-width="2.2"/>
<line x1="1299.0" y1="1418.0" x2="1299.0" y2="1644.0" stroke="#000" stroke-width="1.6"/>
<line x1="1284.0" y1="1418.0" x2="1309.0" y2="1418.0" stroke="#000" stroke-width="2.4"/>
<line x1="1284.0" y1="1644.0" x2="1309.0" y2="1644.0" stroke="#000" stroke-width="2.4"/>
<rect x="1706.0" y="1434.0" width="10.0" height="210.0" fill="url(#xh)" stroke="none" stroke-width="0"/>
<rect x="1716.0" y="1434.0" width="18.0" height="210.0" fill="url(#dh)" stroke="none" stroke-width="0"/>
<line x1="1706.0" y1="1434.0" x2="1706.0" y2="1644.0" stroke="#000" stroke-width="2.2"/>
<line x1="1734.0" y1="1434.0" x2="1734.0" y2="1644.0" stroke="#000" stroke-width="2.2"/>
<line x1="1716.0" y1="1434.0" x2="1716.0" y2="1644.0" stroke="#000" stroke-width="1.6"/>
<line x1="1706.0" y1="1434.0" x2="1734.0" y2="1434.0" stroke="#000" stroke-width="2.4"/>
<line x1="1706.0" y1="1644.0" x2="1734.0" y2="1644.0" stroke="#000" stroke-width="2.4"/>
<line x1="873.0" y1="639.0" x2="2571.0" y2="639.0" stroke="#000" stroke-width="1.8" stroke-dasharray="17 5"/>
<line x1="873.0" y1="653.0" x2="2571.0" y2="653.0" stroke="#000" stroke-width="1.8" stroke-dasharray="17 5"/>
<line x1="873.0" y1="646.0" x2="2571.0" y2="646.0" stroke="#222" stroke-width="1.4" stroke-dasharray="20 12"/>
<line x1="873.0" y1="838.0" x2="1590.0" y2="838.0" stroke="#000" stroke-width="1.8" stroke-dasharray="17 5"/>
<line x1="873.0" y1="852.0" x2="1590.0" y2="852.0" stroke="#000" stroke-width="1.8" stroke-dasharray="17 5"/>
<line x1="873.0" y1="845.0" x2="1590.0" y2="845.0" stroke="#222" stroke-width="1.4" stroke-dasharray="20 12"/>
<line x1="1866.0" y1="838.0" x2="2571.0" y2="838.0" stroke="#000" stroke-width="1.8" stroke-dasharray="17 5"/>
<line x1="1866.0" y1="852.0" x2="2571.0" y2="852.0" stroke="#000" stroke-width="1.8" stroke-dasharray="17 5"/>
<line x1="1866.0" y1="845.0" x2="2571.0" y2="845.0" stroke="#222" stroke-width="1.4" stroke-dasharray="20 12"/>
<line x1="873.0" y1="1038.0" x2="2571.0" y2="1038.0" stroke="#000" stroke-width="1.8" stroke-dasharray="17 5"/>
<line x1="873.0" y1="1052.0" x2="2571.0" y2="1052.0" stroke="#000" stroke-width="1.8" stroke-dasharray="17 5"/>
<line x1="873.0" y1="1045.0" x2="2571.0" y2="1045.0" stroke="#222" stroke-width="1.4" stroke-dasharray="20 12"/>
<line x1="873.0" y1="1238.0" x2="1937.0" y2="1238.0" stroke="#000" stroke-width="1.8" stroke-dasharray="17 5"/>
<line x1="873.0" y1="1252.0" x2="1937.0" y2="1252.0" stroke="#000" stroke-width="1.8" stroke-dasharray="17 5"/>
<line x1="873.0" y1="1245.0" x2="1937.0" y2="1245.0" stroke="#222" stroke-width="1.4" stroke-dasharray="20 12"/>
<line x1="873.0" y1="1421.0" x2="1937.0" y2="1421.0" stroke="#000" stroke-width="1.8" stroke-dasharray="17 5"/>
<line x1="873.0" y1="1435.0" x2="1937.0" y2="1435.0" stroke="#000" stroke-width="1.8" stroke-dasharray="17 5"/>
<line x1="873.0" y1="1428.0" x2="1937.0" y2="1428.0" stroke="#222" stroke-width="1.4" stroke-dasharray="20 12"/>
<line x1="1072.0" y1="457.0" x2="1072.0" y2="1617.0" stroke="#000" stroke-width="1.8" stroke-dasharray="17 5"/>
<line x1="1086.0" y1="457.0" x2="1086.0" y2="1617.0" stroke="#000" stroke-width="1.8" stroke-dasharray="17 5"/>
<line x1="1079.0" y1="457.0" x2="1079.0" y2="1617.0" stroke="#222" stroke-width="1.4" stroke-dasharray="20 12"/>
<line x1="1287.0" y1="457.0" x2="1287.0" y2="1427.0" stroke="#000" stroke-width="1.8" stroke-dasharray="17 5"/>
<line x1="1301.0" y1="457.0" x2="1301.0" y2="1427.0" stroke="#000" stroke-width="1.8" stroke-dasharray="17 5"/>
<line x1="1294.0" y1="457.0" x2="1294.0" y2="1427.0" stroke="#222" stroke-width="1.4" stroke-dasharray="20 12"/>
<line x1="1501.0" y1="457.0" x2="1501.0" y2="1427.0" stroke="#000" stroke-width="1.8" stroke-dasharray="17 5"/>
<line x1="1515.0" y1="457.0" x2="1515.0" y2="1427.0" stroke="#000" stroke-width="1.8" stroke-dasharray="17 5"/>
<line x1="1508.0" y1="457.0" x2="1508.0" y2="1427.0" stroke="#222" stroke-width="1.4" stroke-dasharray="20 12"/>
<line x1="1715.0" y1="457.0" x2="1715.0" y2="741.0" stroke="#000" stroke-width="1.8" stroke-dasharray="17 5"/>
<line x1="1729.0" y1="457.0" x2="1729.0" y2="741.0" stroke="#000" stroke-width="1.8" stroke-dasharray="17 5"/>
<line x1="1722.0" y1="457.0" x2="1722.0" y2="741.0" stroke="#222" stroke-width="1.4" stroke-dasharray="20 12"/>
<line x1="1715.0" y1="991.0" x2="1715.0" y2="1427.0" stroke="#000" stroke-width="1.8" stroke-dasharray="17 5"/>
<line x1="1729.0" y1="991.0" x2="1729.0" y2="1427.0" stroke="#000" stroke-width="1.8" stroke-dasharray="17 5"/>
<line x1="1722.0" y1="991.0" x2="1722.0" y2="1427.0" stroke="#222" stroke-width="1.4" stroke-dasharray="20 12"/>
<line x1="1930.0" y1="457.0" x2="1930.0" y2="1617.0" stroke="#000" stroke-width="1.8" stroke-dasharray="17 5"/>
<line x1="1944.0" y1="457.0" x2="1944.0" y2="1617.0" stroke="#000" stroke-width="1.8" stroke-dasharray="17 5"/>
<line x1="1937.0" y1="457.0" x2="1937.0" y2="1617.0" stroke="#222" stroke-width="1.4" stroke-dasharray="20 12"/>
<line x1="2145.0" y1="457.0" x2="2145.0" y2="1045.0" stroke="#000" stroke-width="1.8" stroke-dasharray="17 5"/>
<line x1="2159.0" y1="457.0" x2="2159.0" y2="1045.0" stroke="#000" stroke-width="1.8" stroke-dasharray="17 5"/>
<line x1="2152.0" y1="457.0" x2="2152.0" y2="1045.0" stroke="#222" stroke-width="1.4" stroke-dasharray="20 12"/>
<line x1="2359.0" y1="457.0" x2="2359.0" y2="1045.0" stroke="#000" stroke-width="1.8" stroke-dasharray="17 5"/>
<line x1="2373.0" y1="457.0" x2="2373.0" y2="1045.0" stroke="#000" stroke-width="1.8" stroke-dasharray="17 5"/>
<line x1="2366.0" y1="457.0" x2="2366.0" y2="1045.0" stroke="#222" stroke-width="1.4" stroke-dasharray="20 12"/>
<line x1="2152.0" y1="1052.0" x2="2152.0" y2="1617.0" stroke="#555" stroke-width="1.3" stroke-dasharray="17 12"/>
<line x1="2366.0" y1="1052.0" x2="2366.0" y2="1617.0" stroke="#555" stroke-width="1.3" stroke-dasharray="17 12"/>
<line x1="1508.0" y1="1435.0" x2="1508.0" y2="1644.0" stroke="#555" stroke-width="1.3" stroke-dasharray="17 12"/>
<line x1="1722.0" y1="1435.0" x2="1722.0" y2="1644.0" stroke="#555" stroke-width="1.3" stroke-dasharray="17 12"/>
<line x1="1944.0" y1="1245.0" x2="2571.0" y2="1245.0" stroke="#555" stroke-width="1.3" stroke-dasharray="17 12"/>
<line x1="1944.0" y1="1428.0" x2="2571.0" y2="1428.0" stroke="#555" stroke-width="1.3" stroke-dasharray="17 12"/>
<line x1="873.0" y1="1628.0" x2="1284.0" y2="1628.0" stroke="#555" stroke-width="1.3" stroke-dasharray="17 12"/>
<line x1="1309.0" y1="1628.0" x2="1706.0" y2="1628.0" stroke="#555" stroke-width="1.3" stroke-dasharray="17 12"/>
<line x1="1734.0" y1="1628.0" x2="2571.0" y2="1628.0" stroke="#555" stroke-width="1.3" stroke-dasharray="17 12"/>
<line x1="1219.0" y1="346.0" x2="1219.0" y2="1700.0" stroke="#000" stroke-width="1.5" stroke-dasharray="26 10"/>
<path d="M1220 1722 L1250 1740 L1220 1758 Z" fill="#000"/>
<text x="1241.0" y="1791.0" font-size="22" font-weight="400" text-anchor="middle" fill="#111" transform="rotate(-90 1241.0 1791.0)">A - A</text>
<line x1="1079.0" y1="457.0" x2="1079.0" y2="778.0" stroke="#000" stroke-width="5"/>
<line x1="1079.0" y1="822.0" x2="1079.0" y2="1174.0" stroke="#000" stroke-width="5"/>
<line x1="1079.0" y1="1220.0" x2="1079.0" y2="1238.0" stroke="#000" stroke-width="5"/>
<line x1="1079.0" y1="1252.0" x2="1079.0" y2="1267.0" stroke="#000" stroke-width="5"/>
<line x1="1079.0" y1="1313.0" x2="1079.0" y2="1617.0" stroke="#000" stroke-width="5"/>
<line x1="1293.0" y1="457.0" x2="1293.0" y2="640.0" stroke="#000" stroke-width="5"/>
<line x1="1726.0" y1="457.0" x2="1726.0" y2="640.0" stroke="#000" stroke-width="5"/>
<line x1="1935.0" y1="457.0" x2="1935.0" y2="640.0" stroke="#000" stroke-width="5"/>
<line x1="2152.0" y1="457.0" x2="2152.0" y2="640.0" stroke="#000" stroke-width="5"/>
<line x1="2366.0" y1="457.0" x2="2366.0" y2="640.0" stroke="#000" stroke-width="5"/>
<line x1="2153.0" y1="852.0" x2="2153.0" y2="1038.0" stroke="#000" stroke-width="5"/>
<line x1="2366.7" y1="852.0" x2="2366.7" y2="1038.0" stroke="#000" stroke-width="5"/>
<line x1="1946.0" y1="1045.0" x2="1946.0" y2="1457.0" stroke="#000" stroke-width="5"/>
<line x1="1946.0" y1="1503.0" x2="1946.0" y2="1617.0" stroke="#000" stroke-width="5"/>
<line x1="1720.0" y1="1250.0" x2="1720.0" y2="1420.0" stroke="#000" stroke-width="5"/>
<line x1="1085.0" y1="651.0" x2="1104.0" y2="651.0" stroke="#000" stroke-width="5"/>
<line x1="1149.0" y1="651.0" x2="1411.0" y2="651.0" stroke="#000" stroke-width="5"/>
<line x1="1482.0" y1="651.0" x2="1534.0" y2="651.0" stroke="#000" stroke-width="5"/>
<line x1="1606.0" y1="651.0" x2="1716.0" y2="651.0" stroke="#000" stroke-width="5"/>
<line x1="1944.0" y1="651.0" x2="1985.0" y2="651.0" stroke="#000" stroke-width="5"/>
<line x1="2031.0" y1="651.0" x2="2149.0" y2="651.0" stroke="#000" stroke-width="5"/>
<line x1="2160.0" y1="651.0" x2="2178.0" y2="651.0" stroke="#000" stroke-width="5"/>
<line x1="2233.0" y1="651.0" x2="2296.0" y2="651.0" stroke="#000" stroke-width="5"/>
<line x1="2374.0" y1="651.0" x2="2508.0" y2="651.0" stroke="#000" stroke-width="5"/>
<line x1="1945.0" y1="1053.0" x2="1966.0" y2="1053.0" stroke="#000" stroke-width="5"/>
<line x1="2036.0" y1="1053.0" x2="2212.0" y2="1053.0" stroke="#000" stroke-width="5"/>
<line x1="2310.0" y1="1053.0" x2="2483.0" y2="1053.0" stroke="#000" stroke-width="5"/>
<line x1="2553.0" y1="1053.0" x2="2571.0" y2="1053.0" stroke="#000" stroke-width="5"/>
<line x1="1301.0" y1="1247.0" x2="1411.0" y2="1247.0" stroke="#000" stroke-width="5"/>
<line x1="1482.0" y1="1247.0" x2="1534.0" y2="1247.0" stroke="#000" stroke-width="5"/>
<line x1="1606.0" y1="1247.0" x2="1716.0" y2="1247.0" stroke="#000" stroke-width="5"/>
<line x1="1309.0" y1="1438.0" x2="1411.0" y2="1438.0" stroke="#000" stroke-width="5"/>
<line x1="1482.0" y1="1438.0" x2="1534.0" y2="1438.0" stroke="#000" stroke-width="5"/>
<line x1="1606.0" y1="1438.0" x2="1716.0" y2="1438.0" stroke="#000" stroke-width="5"/>
<line x1="1732.0" y1="1438.0" x2="1946.0" y2="1438.0" stroke="#000" stroke-width="5"/>
<line x1="1085.0" y1="1330.0" x2="1152.0" y2="1330.0" stroke="#000" stroke-width="5"/>
<line x1="1197.0" y1="1330.0" x2="1300.0" y2="1330.0" stroke="#000" stroke-width="5"/>
<line x1="2069.0" y1="519.0" x2="2150.0" y2="519.0" stroke="#000" stroke-width="5"/>
<line x1="2069.0" y1="584.0" x2="2150.0" y2="584.0" stroke="#000" stroke-width="5"/>
<line x1="2372.0" y1="519.0" x2="2450.0" y2="519.0" stroke="#000" stroke-width="5"/>
<line x1="2372.0" y1="585.0" x2="2450.0" y2="585.0" stroke="#000" stroke-width="5"/>
<line x1="584.6" y1="428.0" x2="584.6" y2="1645.0" stroke="#000" stroke-width="1.8"/>
<line x1="578.6" y1="428.0" x2="590.6" y2="428.0" stroke="#000" stroke-width="2.0"/>
<line x1="584.6" y1="423.0" x2="584.6" y2="433.0" stroke="#000" stroke-width="1.6"/>
<line x1="578.6" y1="447.0" x2="590.6" y2="447.0" stroke="#000" stroke-width="2.0"/>
<line x1="584.6" y1="442.0" x2="584.6" y2="452.0" stroke="#000" stroke-width="1.6"/>
<line x1="578.6" y1="645.0" x2="590.6" y2="645.0" stroke="#000" stroke-width="2.0"/>
<line x1="584.6" y1="640.0" x2="584.6" y2="650.0" stroke="#000" stroke-width="1.6"/>
<line x1="578.6" y1="846.0" x2="590.6" y2="846.0" stroke="#000" stroke-width="2.0"/>
<line x1="584.6" y1="841.0" x2="584.6" y2="851.0" stroke="#000" stroke-width="1.6"/>
<line x1="578.6" y1="1045.0" x2="590.6" y2="1045.0" stroke="#000" stroke-width="2.0"/>
<line x1="584.6" y1="1040.0" x2="584.6" y2="1050.0" stroke="#000" stroke-width="1.6"/>
<line x1="578.6" y1="1245.0" x2="590.6" y2="1245.0" stroke="#000" stroke-width="2.0"/>
<line x1="584.6" y1="1240.0" x2="584.6" y2="1250.0" stroke="#000" stroke-width="1.6"/>
<line x1="578.6" y1="1428.7" x2="590.6" y2="1428.7" stroke="#000" stroke-width="2.0"/>
<line x1="584.6" y1="1423.7" x2="584.6" y2="1433.7" stroke="#000" stroke-width="1.6"/>
<line x1="578.6" y1="1627.0" x2="590.6" y2="1627.0" stroke="#000" stroke-width="2.0"/>
<line x1="584.6" y1="1622.0" x2="584.6" y2="1632.0" stroke="#000" stroke-width="1.6"/>
<line x1="578.6" y1="1644.6" x2="590.6" y2="1644.6" stroke="#000" stroke-width="2.0"/>
<line x1="584.6" y1="1639.6" x2="584.6" y2="1649.6" stroke="#000" stroke-width="1.6"/>
<text x="581.0" y="437.0" font-size="13" font-weight="400" text-anchor="middle" fill="#333" transform="rotate(-90 581.0 437.0)">0,33</text>
<text x="581.6" y="545.5" font-size="13" font-weight="400" text-anchor="middle" fill="#333" transform="rotate(-90 581.6 545.5)">4,00</text>
<text x="581.6" y="745.0" font-size="13" font-weight="400" text-anchor="middle" fill="#333" transform="rotate(-90 581.6 745.0)">4,00</text>
<text x="581.6" y="947.0" font-size="13" font-weight="400" text-anchor="middle" fill="#333" transform="rotate(-90 581.6 947.0)">4,00</text>
<text x="581.6" y="1144.0" font-size="13" font-weight="400" text-anchor="middle" fill="#333" transform="rotate(-90 581.6 1144.0)">4,00</text>
<text x="581.6" y="1336.0" font-size="13" font-weight="400" text-anchor="middle" fill="#333" transform="rotate(-90 581.6 1336.0)">4,00</text>
<text x="581.6" y="1528.0" font-size="13" font-weight="400" text-anchor="middle" fill="#333" transform="rotate(-90 581.6 1528.0)">4,00</text>
<text x="581.0" y="1657.0" font-size="13" font-weight="400" text-anchor="middle" fill="#333" transform="rotate(-90 581.0 1657.0)">0,33</text>
<line x1="620.0" y1="428.0" x2="620.0" y2="1645.0" stroke="#000" stroke-width="1.8"/>
<line x1="614.0" y1="428.0" x2="626.0" y2="428.0" stroke="#000" stroke-width="2.0"/>
<line x1="620.0" y1="423.0" x2="620.0" y2="433.0" stroke="#000" stroke-width="1.6"/>
<line x1="614.0" y1="545.5" x2="626.0" y2="545.5" stroke="#000" stroke-width="2.0"/>
<line x1="620.0" y1="540.5" x2="620.0" y2="550.5" stroke="#000" stroke-width="1.6"/>
<line x1="614.0" y1="745.0" x2="626.0" y2="745.0" stroke="#000" stroke-width="2.0"/>
<line x1="620.0" y1="740.0" x2="620.0" y2="750.0" stroke="#000" stroke-width="1.6"/>
<line x1="614.0" y1="944.0" x2="626.0" y2="944.0" stroke="#000" stroke-width="2.0"/>
<line x1="620.0" y1="939.0" x2="620.0" y2="949.0" stroke="#000" stroke-width="1.6"/>
<line x1="614.0" y1="1151.7" x2="626.0" y2="1151.7" stroke="#000" stroke-width="2.0"/>
<line x1="620.0" y1="1146.7" x2="620.0" y2="1156.7" stroke="#000" stroke-width="1.6"/>
<line x1="614.0" y1="1336.0" x2="626.0" y2="1336.0" stroke="#000" stroke-width="2.0"/>
<line x1="620.0" y1="1331.0" x2="620.0" y2="1341.0" stroke="#000" stroke-width="1.6"/>
<line x1="614.0" y1="1644.6" x2="626.0" y2="1644.6" stroke="#000" stroke-width="2.0"/>
<line x1="620.0" y1="1639.6" x2="620.0" y2="1649.6" stroke="#000" stroke-width="1.6"/>
<text x="617.0" y="487.0" font-size="13" font-weight="400" text-anchor="middle" fill="#333" transform="rotate(-90 617.0 487.0)">2,33</text>
<text x="617.0" y="644.0" font-size="13" font-weight="400" text-anchor="middle" fill="#333" transform="rotate(-90 617.0 644.0)">4,00</text>
<text x="617.0" y="843.5" font-size="13" font-weight="400" text-anchor="middle" fill="#333" transform="rotate(-90 617.0 843.5)">4,00</text>
<text x="617.0" y="1048.0" font-size="13" font-weight="400" text-anchor="middle" fill="#333" transform="rotate(-90 617.0 1048.0)">4,14</text>
<text x="617.0" y="1242.7" font-size="13" font-weight="400" text-anchor="middle" fill="#333" transform="rotate(-90 617.0 1242.7)">3,70</text>
<text x="617.0" y="1490.0" font-size="13" font-weight="400" text-anchor="middle" fill="#333" transform="rotate(-90 617.0 1490.0)">6,17</text>
<line x1="658.7" y1="428.0" x2="658.7" y2="1645.0" stroke="#000" stroke-width="1.8"/>
<line x1="652.7" y1="428.0" x2="664.7" y2="428.0" stroke="#000" stroke-width="2.0"/>
<line x1="658.7" y1="423.0" x2="658.7" y2="433.0" stroke="#000" stroke-width="1.6"/>
<line x1="652.7" y1="496.0" x2="664.7" y2="496.0" stroke="#000" stroke-width="2.0"/>
<line x1="658.7" y1="491.0" x2="658.7" y2="501.0" stroke="#000" stroke-width="1.6"/>
<line x1="652.7" y1="595.0" x2="664.7" y2="595.0" stroke="#000" stroke-width="2.0"/>
<line x1="658.7" y1="590.0" x2="658.7" y2="600.0" stroke="#000" stroke-width="1.6"/>
<line x1="652.7" y1="637.0" x2="664.7" y2="637.0" stroke="#000" stroke-width="2.0"/>
<line x1="658.7" y1="632.0" x2="658.7" y2="642.0" stroke="#000" stroke-width="1.6"/>
<line x1="652.7" y1="653.0" x2="664.7" y2="653.0" stroke="#000" stroke-width="2.0"/>
<line x1="658.7" y1="648.0" x2="658.7" y2="658.0" stroke="#000" stroke-width="1.6"/>
<line x1="652.7" y1="695.6" x2="664.7" y2="695.6" stroke="#000" stroke-width="2.0"/>
<line x1="658.7" y1="690.6" x2="658.7" y2="700.6" stroke="#000" stroke-width="1.6"/>
<line x1="652.7" y1="796.5" x2="664.7" y2="796.5" stroke="#000" stroke-width="2.0"/>
<line x1="658.7" y1="791.5" x2="658.7" y2="801.5" stroke="#000" stroke-width="1.6"/>
<line x1="652.7" y1="839.0" x2="664.7" y2="839.0" stroke="#000" stroke-width="2.0"/>
<line x1="658.7" y1="834.0" x2="658.7" y2="844.0" stroke="#000" stroke-width="1.6"/>
<line x1="652.7" y1="853.0" x2="664.7" y2="853.0" stroke="#000" stroke-width="2.0"/>
<line x1="658.7" y1="848.0" x2="658.7" y2="858.0" stroke="#000" stroke-width="1.6"/>
<line x1="652.7" y1="895.0" x2="664.7" y2="895.0" stroke="#000" stroke-width="2.0"/>
<line x1="658.7" y1="890.0" x2="658.7" y2="900.0" stroke="#000" stroke-width="1.6"/>
<line x1="652.7" y1="996.0" x2="664.7" y2="996.0" stroke="#000" stroke-width="2.0"/>
<line x1="658.7" y1="991.0" x2="658.7" y2="1001.0" stroke="#000" stroke-width="1.6"/>
<line x1="652.7" y1="1036.4" x2="664.7" y2="1036.4" stroke="#000" stroke-width="2.0"/>
<line x1="658.7" y1="1031.4" x2="658.7" y2="1041.4" stroke="#000" stroke-width="1.6"/>
<line x1="652.7" y1="1051.6" x2="664.7" y2="1051.6" stroke="#000" stroke-width="2.0"/>
<line x1="658.7" y1="1046.6" x2="658.7" y2="1056.6" stroke="#000" stroke-width="1.6"/>
<line x1="652.7" y1="1101.0" x2="664.7" y2="1101.0" stroke="#000" stroke-width="2.0"/>
<line x1="658.7" y1="1096.0" x2="658.7" y2="1106.0" stroke="#000" stroke-width="1.6"/>
<line x1="652.7" y1="1202.0" x2="664.7" y2="1202.0" stroke="#000" stroke-width="2.0"/>
<line x1="658.7" y1="1197.0" x2="658.7" y2="1207.0" stroke="#000" stroke-width="1.6"/>
<line x1="652.7" y1="1235.0" x2="664.7" y2="1235.0" stroke="#000" stroke-width="2.0"/>
<line x1="658.7" y1="1230.0" x2="658.7" y2="1240.0" stroke="#000" stroke-width="1.6"/>
<line x1="652.7" y1="1250.0" x2="664.7" y2="1250.0" stroke="#000" stroke-width="2.0"/>
<line x1="658.7" y1="1245.0" x2="658.7" y2="1255.0" stroke="#000" stroke-width="1.6"/>
<line x1="652.7" y1="1285.6" x2="664.7" y2="1285.6" stroke="#000" stroke-width="2.0"/>
<line x1="658.7" y1="1280.6" x2="658.7" y2="1290.6" stroke="#000" stroke-width="1.6"/>
<line x1="652.7" y1="1386.8" x2="664.7" y2="1386.8" stroke="#000" stroke-width="2.0"/>
<line x1="658.7" y1="1381.8" x2="658.7" y2="1391.8" stroke="#000" stroke-width="1.6"/>
<line x1="652.7" y1="1419.6" x2="664.7" y2="1419.6" stroke="#000" stroke-width="2.0"/>
<line x1="658.7" y1="1414.6" x2="658.7" y2="1424.6" stroke="#000" stroke-width="1.6"/>
<line x1="652.7" y1="1434.8" x2="664.7" y2="1434.8" stroke="#000" stroke-width="2.0"/>
<line x1="658.7" y1="1429.8" x2="658.7" y2="1439.8" stroke="#000" stroke-width="1.6"/>
<line x1="652.7" y1="1619.0" x2="664.7" y2="1619.0" stroke="#000" stroke-width="2.0"/>
<line x1="658.7" y1="1614.0" x2="658.7" y2="1624.0" stroke="#000" stroke-width="1.6"/>
<line x1="652.7" y1="1642.0" x2="664.7" y2="1642.0" stroke="#000" stroke-width="2.0"/>
<line x1="658.7" y1="1637.0" x2="658.7" y2="1647.0" stroke="#000" stroke-width="1.6"/>
<text x="655.7" y="461.0" font-size="13" font-weight="400" text-anchor="middle" fill="#333" transform="rotate(-90 655.7 461.0)">1,32</text>
<text x="655.7" y="545.5" font-size="13" font-weight="400" text-anchor="middle" fill="#333" transform="rotate(-90 655.7 545.5)">2,02</text>
<text x="655.7" y="613.5" font-size="13" font-weight="400" text-anchor="middle" fill="#333" transform="rotate(-90 655.7 613.5)">0,84</text>
<text x="641.0" y="645.0" font-size="13" font-weight="400" text-anchor="middle" fill="#333" transform="rotate(-90 641.0 645.0)">0,30</text>
<text x="655.7" y="677.0" font-size="13" font-weight="400" text-anchor="middle" fill="#333" transform="rotate(-90 655.7 677.0)">0,84</text>
<text x="655.7" y="745.0" font-size="13" font-weight="400" text-anchor="middle" fill="#333" transform="rotate(-90 655.7 745.0)">2,02</text>
<text x="655.7" y="815.0" font-size="13" font-weight="400" text-anchor="middle" fill="#333" transform="rotate(-90 655.7 815.0)">0,84</text>
<text x="641.0" y="846.0" font-size="13" font-weight="400" text-anchor="middle" fill="#333" transform="rotate(-90 641.0 846.0)">0,30</text>
<text x="655.7" y="874.0" font-size="13" font-weight="400" text-anchor="middle" fill="#333" transform="rotate(-90 655.7 874.0)">0,84</text>
<text x="655.7" y="944.0" font-size="13" font-weight="400" text-anchor="middle" fill="#333" transform="rotate(-90 655.7 944.0)">2,02</text>
<text x="655.7" y="1015.0" font-size="13" font-weight="400" text-anchor="middle" fill="#333" transform="rotate(-90 655.7 1015.0)">0,84</text>
<text x="641.0" y="1045.5" font-size="13" font-weight="400" text-anchor="middle" fill="#333" transform="rotate(-90 641.0 1045.5)">0,30</text>
<text x="655.7" y="1076.0" font-size="13" font-weight="400" text-anchor="middle" fill="#333" transform="rotate(-90 655.7 1076.0)">0,98</text>
<text x="655.7" y="1151.7" font-size="13" font-weight="400" text-anchor="middle" fill="#333" transform="rotate(-90 655.7 1151.7)">2,02</text>
<text x="655.7" y="1215.0" font-size="13" font-weight="400" text-anchor="middle" fill="#333" transform="rotate(-90 655.7 1215.0)">0,70</text>
<text x="641.0" y="1242.7" font-size="13" font-weight="400" text-anchor="middle" fill="#333" transform="rotate(-90 641.0 1242.7)">0,30</text>
<text x="655.7" y="1268.0" font-size="13" font-weight="400" text-anchor="middle" fill="#333" transform="rotate(-90 655.7 1268.0)">0,68</text>
<text x="655.7" y="1336.0" font-size="13" font-weight="400" text-anchor="middle" fill="#333" transform="rotate(-90 655.7 1336.0)">2,02</text>
<text x="655.7" y="1402.0" font-size="13" font-weight="400" text-anchor="middle" fill="#333" transform="rotate(-90 655.7 1402.0)">0,68</text>
<text x="655.7" y="1447.0" font-size="13" font-weight="400" text-anchor="middle" fill="#333" transform="rotate(-90 655.7 1447.0)">0,30</text>
<text x="655.7" y="1528.0" font-size="13" font-weight="400" text-anchor="middle" fill="#333" transform="rotate(-90 655.7 1528.0)">3,70</text>
<text x="655.7" y="1654.6" font-size="13" font-weight="400" text-anchor="middle" fill="#333" transform="rotate(-90 655.7 1654.6)">0,43</text>
<line x1="2785.0" y1="428.0" x2="2785.0" y2="1650.0" stroke="#000" stroke-width="1.8"/>
<line x1="2779.0" y1="428.0" x2="2791.0" y2="428.0" stroke="#000" stroke-width="2.0"/>
<line x1="2785.0" y1="423.0" x2="2785.0" y2="433.0" stroke="#000" stroke-width="1.6"/>
<line x1="2779.0" y1="495.0" x2="2791.0" y2="495.0" stroke="#000" stroke-width="2.0"/>
<line x1="2785.0" y1="490.0" x2="2785.0" y2="500.0" stroke="#000" stroke-width="1.6"/>
<line x1="2779.0" y1="596.0" x2="2791.0" y2="596.0" stroke="#000" stroke-width="2.0"/>
<line x1="2785.0" y1="591.0" x2="2785.0" y2="601.0" stroke="#000" stroke-width="1.6"/>
<line x1="2779.0" y1="639.0" x2="2791.0" y2="639.0" stroke="#000" stroke-width="2.0"/>
<line x1="2785.0" y1="634.0" x2="2785.0" y2="644.0" stroke="#000" stroke-width="1.6"/>
<line x1="2779.0" y1="651.0" x2="2791.0" y2="651.0" stroke="#000" stroke-width="2.0"/>
<line x1="2785.0" y1="646.0" x2="2785.0" y2="656.0" stroke="#000" stroke-width="1.6"/>
<line x1="2779.0" y1="694.7" x2="2791.0" y2="694.7" stroke="#000" stroke-width="2.0"/>
<line x1="2785.0" y1="689.7" x2="2785.0" y2="699.7" stroke="#000" stroke-width="1.6"/>
<line x1="2779.0" y1="795.6" x2="2791.0" y2="795.6" stroke="#000" stroke-width="2.0"/>
<line x1="2785.0" y1="790.6" x2="2785.0" y2="800.6" stroke="#000" stroke-width="1.6"/>
<line x1="2779.0" y1="838.8" x2="2791.0" y2="838.8" stroke="#000" stroke-width="2.0"/>
<line x1="2785.0" y1="833.8" x2="2785.0" y2="843.8" stroke="#000" stroke-width="1.6"/>
<line x1="2779.0" y1="852.8" x2="2791.0" y2="852.8" stroke="#000" stroke-width="2.0"/>
<line x1="2785.0" y1="847.8" x2="2785.0" y2="857.8" stroke="#000" stroke-width="1.6"/>
<line x1="2779.0" y1="895.0" x2="2791.0" y2="895.0" stroke="#000" stroke-width="2.0"/>
<line x1="2785.0" y1="890.0" x2="2785.0" y2="900.0" stroke="#000" stroke-width="1.6"/>
<line x1="2779.0" y1="996.0" x2="2791.0" y2="996.0" stroke="#000" stroke-width="2.0"/>
<line x1="2785.0" y1="991.0" x2="2785.0" y2="1001.0" stroke="#000" stroke-width="1.6"/>
<line x1="2779.0" y1="1038.0" x2="2791.0" y2="1038.0" stroke="#000" stroke-width="2.0"/>
<line x1="2785.0" y1="1033.0" x2="2785.0" y2="1043.0" stroke="#000" stroke-width="1.6"/>
<line x1="2779.0" y1="1058.0" x2="2791.0" y2="1058.0" stroke="#000" stroke-width="2.0"/>
<line x1="2785.0" y1="1053.0" x2="2785.0" y2="1063.0" stroke="#000" stroke-width="1.6"/>
<line x1="2779.0" y1="1095.0" x2="2791.0" y2="1095.0" stroke="#000" stroke-width="2.0"/>
<line x1="2785.0" y1="1090.0" x2="2785.0" y2="1100.0" stroke="#000" stroke-width="1.6"/>
<line x1="2779.0" y1="1195.0" x2="2791.0" y2="1195.0" stroke="#000" stroke-width="2.0"/>
<line x1="2785.0" y1="1190.0" x2="2785.0" y2="1200.0" stroke="#000" stroke-width="1.6"/>
<line x1="2779.0" y1="1236.0" x2="2791.0" y2="1236.0" stroke="#000" stroke-width="2.0"/>
<line x1="2785.0" y1="1231.0" x2="2785.0" y2="1241.0" stroke="#000" stroke-width="1.6"/>
<line x1="2779.0" y1="1256.0" x2="2791.0" y2="1256.0" stroke="#000" stroke-width="2.0"/>
<line x1="2785.0" y1="1251.0" x2="2785.0" y2="1261.0" stroke="#000" stroke-width="1.6"/>
<line x1="2779.0" y1="1285.0" x2="2791.0" y2="1285.0" stroke="#000" stroke-width="2.0"/>
<line x1="2785.0" y1="1280.0" x2="2785.0" y2="1290.0" stroke="#000" stroke-width="1.6"/>
<line x1="2779.0" y1="1387.0" x2="2791.0" y2="1387.0" stroke="#000" stroke-width="2.0"/>
<line x1="2785.0" y1="1382.0" x2="2785.0" y2="1392.0" stroke="#000" stroke-width="1.6"/>
<line x1="2779.0" y1="1419.0" x2="2791.0" y2="1419.0" stroke="#000" stroke-width="2.0"/>
<line x1="2785.0" y1="1414.0" x2="2785.0" y2="1424.0" stroke="#000" stroke-width="1.6"/>
<line x1="2779.0" y1="1440.0" x2="2791.0" y2="1440.0" stroke="#000" stroke-width="2.0"/>
<line x1="2785.0" y1="1435.0" x2="2785.0" y2="1445.0" stroke="#000" stroke-width="1.6"/>
<line x1="2779.0" y1="1477.6" x2="2791.0" y2="1477.6" stroke="#000" stroke-width="2.0"/>
<line x1="2785.0" y1="1472.6" x2="2785.0" y2="1482.6" stroke="#000" stroke-width="1.6"/>
<line x1="2779.0" y1="1578.0" x2="2791.0" y2="1578.0" stroke="#000" stroke-width="2.0"/>
<line x1="2785.0" y1="1573.0" x2="2785.0" y2="1583.0" stroke="#000" stroke-width="1.6"/>
<line x1="2779.0" y1="1619.0" x2="2791.0" y2="1619.0" stroke="#000" stroke-width="2.0"/>
<line x1="2785.0" y1="1614.0" x2="2785.0" y2="1624.0" stroke="#000" stroke-width="1.6"/>
<line x1="2779.0" y1="1642.0" x2="2791.0" y2="1642.0" stroke="#000" stroke-width="2.0"/>
<line x1="2785.0" y1="1637.0" x2="2785.0" y2="1647.0" stroke="#000" stroke-width="1.6"/>
<text x="2782.0" y="461.0" font-size="13" font-weight="400" text-anchor="middle" fill="#333" transform="rotate(-90 2782.0 461.0)">1,32</text>
<text x="2782.0" y="545.5" font-size="13" font-weight="400" text-anchor="middle" fill="#333" transform="rotate(-90 2782.0 545.5)">2,02</text>
<text x="2782.0" y="616.0" font-size="13" font-weight="400" text-anchor="middle" fill="#333" transform="rotate(-90 2782.0 616.0)">0,84</text>
<text x="2768.0" y="644.0" font-size="13" font-weight="400" text-anchor="middle" fill="#333" transform="rotate(-90 2768.0 644.0)">0,29</text>
<text x="2782.0" y="674.5" font-size="13" font-weight="400" text-anchor="middle" fill="#333" transform="rotate(-90 2782.0 674.5)">0,85</text>
<text x="2782.0" y="745.0" font-size="13" font-weight="400" text-anchor="middle" fill="#333" transform="rotate(-90 2782.0 745.0)">2,02</text>
<text x="2782.0" y="815.0" font-size="13" font-weight="400" text-anchor="middle" fill="#333" transform="rotate(-90 2782.0 815.0)">0,85</text>
<text x="2768.0" y="845.8" font-size="13" font-weight="400" text-anchor="middle" fill="#333" transform="rotate(-90 2768.0 845.8)">0,30</text>
<text x="2782.0" y="871.6" font-size="13" font-weight="400" text-anchor="middle" fill="#333" transform="rotate(-90 2782.0 871.6)">0,85</text>
<text x="2782.0" y="944.0" font-size="13" font-weight="400" text-anchor="middle" fill="#333" transform="rotate(-90 2782.0 944.0)">2,02</text>
<text x="2782.0" y="1014.7" font-size="13" font-weight="400" text-anchor="middle" fill="#333" transform="rotate(-90 2782.0 1014.7)">0,85</text>
<text x="2768.0" y="1043.7" font-size="13" font-weight="400" text-anchor="middle" fill="#333" transform="rotate(-90 2768.0 1043.7)">0,29</text>
<text x="2782.0" y="1072.8" font-size="13" font-weight="400" text-anchor="middle" fill="#333" transform="rotate(-90 2782.0 1072.8)">0,84</text>
<text x="2782.0" y="1145.6" font-size="13" font-weight="400" text-anchor="middle" fill="#333" transform="rotate(-90 2782.0 1145.6)">2,03</text>
<text x="2782.0" y="1201.0" font-size="13" font-weight="400" text-anchor="middle" fill="#333" transform="rotate(-90 2782.0 1201.0)">0,84</text>
<text x="2768.0" y="1244.6" font-size="13" font-weight="400" text-anchor="middle" fill="#333" transform="rotate(-90 2768.0 1244.6)">0,30</text>
<text x="2782.0" y="1270.8" font-size="13" font-weight="400" text-anchor="middle" fill="#333" transform="rotate(-90 2782.0 1270.8)">0,68</text>
<text x="2782.0" y="1335.0" font-size="13" font-weight="400" text-anchor="middle" fill="#333" transform="rotate(-90 2782.0 1335.0)">2,02</text>
<text x="2782.0" y="1401.9" font-size="13" font-weight="400" text-anchor="middle" fill="#333" transform="rotate(-90 2782.0 1401.9)">0,68</text>
<text x="2768.0" y="1425.0" font-size="13" font-weight="400" text-anchor="middle" fill="#333" transform="rotate(-90 2768.0 1425.0)">0,30</text>
<text x="2782.0" y="1454.0" font-size="13" font-weight="400" text-anchor="middle" fill="#333" transform="rotate(-90 2782.0 1454.0)">0,84</text>
<text x="2782.0" y="1527.0" font-size="13" font-weight="400" text-anchor="middle" fill="#333" transform="rotate(-90 2782.0 1527.0)">2,03</text>
<line x1="2821.0" y1="428.0" x2="2821.0" y2="1650.0" stroke="#000" stroke-width="1.8"/>
<line x1="2815.0" y1="428.0" x2="2827.0" y2="428.0" stroke="#000" stroke-width="2.0"/>
<line x1="2821.0" y1="423.0" x2="2821.0" y2="433.0" stroke="#000" stroke-width="1.6"/>
<line x1="2815.0" y1="489.0" x2="2827.0" y2="489.0" stroke="#000" stroke-width="2.0"/>
<line x1="2821.0" y1="484.0" x2="2821.0" y2="494.0" stroke="#000" stroke-width="1.6"/>
<line x1="2815.0" y1="946.7" x2="2827.0" y2="946.7" stroke="#000" stroke-width="2.0"/>
<line x1="2821.0" y1="941.7" x2="2821.0" y2="951.7" stroke="#000" stroke-width="1.6"/>
<line x1="2815.0" y1="1142.7" x2="2827.0" y2="1142.7" stroke="#000" stroke-width="2.0"/>
<line x1="2821.0" y1="1137.7" x2="2821.0" y2="1147.7" stroke="#000" stroke-width="1.6"/>
<line x1="2815.0" y1="1335.0" x2="2827.0" y2="1335.0" stroke="#000" stroke-width="2.0"/>
<line x1="2821.0" y1="1330.0" x2="2821.0" y2="1340.0" stroke="#000" stroke-width="1.6"/>
<line x1="2815.0" y1="1530.0" x2="2827.0" y2="1530.0" stroke="#000" stroke-width="2.0"/>
<line x1="2821.0" y1="1525.0" x2="2821.0" y2="1535.0" stroke="#000" stroke-width="1.6"/>
<text x="2818.0" y="456.0" font-size="13" font-weight="400" text-anchor="middle" fill="#333" transform="rotate(-90 2818.0 456.0)">1,20</text>
<text x="2818.0" y="709.7" font-size="13" font-weight="400" text-anchor="middle" fill="#333" transform="rotate(-90 2818.0 709.7)">9,14</text>
<text x="2818.0" y="1040.8" font-size="13" font-weight="400" text-anchor="middle" fill="#333" transform="rotate(-90 2818.0 1040.8)">3,99</text>
<text x="2818.0" y="1238.8" font-size="13" font-weight="400" text-anchor="middle" fill="#333" transform="rotate(-90 2818.0 1238.8)">3,84</text>
<text x="2818.0" y="1431.0" font-size="13" font-weight="400" text-anchor="middle" fill="#333" transform="rotate(-90 2818.0 1431.0)">3,84</text>
<line x1="2860.0" y1="428.0" x2="2860.0" y2="1650.0" stroke="#000" stroke-width="1.8"/>
<line x1="2854.0" y1="428.0" x2="2866.0" y2="428.0" stroke="#000" stroke-width="2.0"/>
<line x1="2860.0" y1="423.0" x2="2860.0" y2="433.0" stroke="#000" stroke-width="1.6"/>
<text x="2857.0" y="1035.0" font-size="13" font-weight="400" text-anchor="middle" fill="#333" transform="rotate(-90 2857.0 1035.0)">24,34</text>
<line x1="843.8" y1="254.0" x2="2597.0" y2="254.0" stroke="#000" stroke-width="1.8"/>
<line x1="843.8" y1="247.0" x2="843.8" y2="261.0" stroke="#000" stroke-width="2.0"/>
<line x1="920.6" y1="247.0" x2="920.6" y2="261.0" stroke="#000" stroke-width="2.0"/>
<line x1="1021.0" y1="247.0" x2="1021.0" y2="261.0" stroke="#000" stroke-width="2.0"/>
<line x1="1071.6" y1="247.0" x2="1071.6" y2="261.0" stroke="#000" stroke-width="2.0"/>
<line x1="1087.3" y1="247.0" x2="1087.3" y2="261.0" stroke="#000" stroke-width="2.0"/>
<line x1="1137.0" y1="247.0" x2="1137.0" y2="261.0" stroke="#000" stroke-width="2.0"/>
<line x1="1236.8" y1="247.0" x2="1236.8" y2="261.0" stroke="#000" stroke-width="2.0"/>
<line x1="1286.5" y1="247.0" x2="1286.5" y2="261.0" stroke="#000" stroke-width="2.0"/>
<line x1="1300.4" y1="247.0" x2="1300.4" y2="261.0" stroke="#000" stroke-width="2.0"/>
<line x1="1350.0" y1="247.0" x2="1350.0" y2="261.0" stroke="#000" stroke-width="2.0"/>
<line x1="1451.4" y1="247.0" x2="1451.4" y2="261.0" stroke="#000" stroke-width="2.0"/>
<line x1="1500.6" y1="247.0" x2="1500.6" y2="261.0" stroke="#000" stroke-width="2.0"/>
<line x1="1515.3" y1="247.0" x2="1515.3" y2="261.0" stroke="#000" stroke-width="2.0"/>
<line x1="1564.2" y1="247.0" x2="1564.2" y2="261.0" stroke="#000" stroke-width="2.0"/>
<line x1="1666.3" y1="247.0" x2="1666.3" y2="261.0" stroke="#000" stroke-width="2.0"/>
<line x1="1716.2" y1="247.0" x2="1716.2" y2="261.0" stroke="#000" stroke-width="2.0"/>
<line x1="1729.6" y1="247.0" x2="1729.6" y2="261.0" stroke="#000" stroke-width="2.0"/>
<line x1="1930.4" y1="247.0" x2="1930.4" y2="261.0" stroke="#000" stroke-width="2.0"/>
<line x1="1945.7" y1="247.0" x2="1945.7" y2="261.0" stroke="#000" stroke-width="2.0"/>
<line x1="1957.9" y1="247.0" x2="1957.9" y2="261.0" stroke="#000" stroke-width="2.0"/>
<line x1="2058.0" y1="247.0" x2="2058.0" y2="261.0" stroke="#000" stroke-width="2.0"/>
<line x1="2144.6" y1="247.0" x2="2144.6" y2="261.0" stroke="#000" stroke-width="2.0"/>
<line x1="2160.0" y1="247.0" x2="2160.0" y2="261.0" stroke="#000" stroke-width="2.0"/>
<line x1="2181.0" y1="247.0" x2="2181.0" y2="261.0" stroke="#000" stroke-width="2.0"/>
<line x1="2231.4" y1="247.0" x2="2231.4" y2="261.0" stroke="#000" stroke-width="2.0"/>
<line x1="2287.5" y1="247.0" x2="2287.5" y2="261.0" stroke="#000" stroke-width="2.0"/>
<line x1="2338.0" y1="247.0" x2="2338.0" y2="261.0" stroke="#000" stroke-width="2.0"/>
<line x1="2359.0" y1="247.0" x2="2359.0" y2="261.0" stroke="#000" stroke-width="2.0"/>
<line x1="2375.0" y1="247.0" x2="2375.0" y2="261.0" stroke="#000" stroke-width="2.0"/>
<line x1="2424.0" y1="247.0" x2="2424.0" y2="261.0" stroke="#000" stroke-width="2.0"/>
<line x1="2524.0" y1="247.0" x2="2524.0" y2="261.0" stroke="#000" stroke-width="2.0"/>
<line x1="2573.0" y1="247.0" x2="2573.0" y2="261.0" stroke="#000" stroke-width="2.0"/>
<line x1="2597.0" y1="247.0" x2="2597.0" y2="261.0" stroke="#000" stroke-width="2.0"/>
<text x="883.0" y="251.0" font-size="16" font-weight="400" text-anchor="middle" fill="#333">1,48</text>
<text x="971.0" y="251.0" font-size="16" font-weight="400" text-anchor="middle" fill="#333">2,03</text>
<text x="1046.0" y="251.0" font-size="16" font-weight="400" text-anchor="middle" fill="#333">1,02</text>
<text x="1112.0" y="251.0" font-size="16" font-weight="400" text-anchor="middle" fill="#333">0,99</text>
<text x="1187.0" y="251.0" font-size="16" font-weight="400" text-anchor="middle" fill="#333">2,02</text>
<text x="1261.0" y="251.0" font-size="16" font-weight="400" text-anchor="middle" fill="#333">0,99</text>
<text x="1325.0" y="251.0" font-size="16" font-weight="400" text-anchor="middle" fill="#333">0,99</text>
<text x="1400.0" y="251.0" font-size="16" font-weight="400" text-anchor="middle" fill="#333">2,02</text>
<text x="1476.0" y="251.0" font-size="16" font-weight="400" text-anchor="middle" fill="#333">0,99</text>
<text x="1540.0" y="251.0" font-size="16" font-weight="400" text-anchor="middle" fill="#333">0,99</text>
<text x="1615.0" y="251.0" font-size="16" font-weight="400" text-anchor="middle" fill="#333">2,02</text>
<text x="1691.0" y="251.0" font-size="16" font-weight="400" text-anchor="middle" fill="#333">0,99</text>
<text x="1745.0" y="251.0" font-size="16" font-weight="400" text-anchor="middle" fill="#333">0,30</text>
<text x="1830.0" y="251.0" font-size="16" font-weight="400" text-anchor="middle" fill="#333">4,00</text>
<text x="1916.0" y="251.0" font-size="16" font-weight="400" text-anchor="middle" fill="#333">0,30</text>
<text x="2009.0" y="251.0" font-size="16" font-weight="400" text-anchor="middle" fill="#333">2,02</text>
<text x="2102.0" y="251.0" font-size="16" font-weight="400" text-anchor="middle" fill="#333">1,73</text>
<text x="2205.0" y="251.0" font-size="16" font-weight="400" text-anchor="middle" fill="#333">1,02</text>
<text x="2259.0" y="251.0" font-size="16" font-weight="400" text-anchor="middle" fill="#333">1,11</text>
<text x="2312.0" y="251.0" font-size="16" font-weight="400" text-anchor="middle" fill="#333">1,02</text>
<text x="2398.0" y="251.0" font-size="16" font-weight="400" text-anchor="middle" fill="#333">0,99</text>
<text x="2473.0" y="251.0" font-size="16" font-weight="400" text-anchor="middle" fill="#333">2,02</text>
<text x="2548.0" y="251.0" font-size="16" font-weight="400" text-anchor="middle" fill="#333">0,99</text>
<text x="2590.0" y="251.0" font-size="16" font-weight="400" text-anchor="middle" fill="#333">0,48</text>
<text x="971.0" y="387.0" font-size="15" font-weight="400" text-anchor="middle" fill="#111">01</text>
<line x1="971.0" y1="389.0" x2="971.0" y2="487.0" stroke="#000" stroke-width="1.5"/>
<text x="967.0" y="412.0" font-size="13.5" font-weight="400" text-anchor="middle" fill="#333" transform="rotate(-90 967.0 412.0)">2,00</text>
<text x="987.0" y="412.0" font-size="13.5" font-weight="400" text-anchor="middle" fill="#333" transform="rotate(-90 987.0 412.0)">1,50</text>
<text x="1186.7" y="387.0" font-size="15" font-weight="400" text-anchor="middle" fill="#111">02</text>
<line x1="1186.7" y1="389.0" x2="1186.7" y2="487.0" stroke="#000" stroke-width="1.5"/>
<text x="1182.7" y="412.0" font-size="13.5" font-weight="400" text-anchor="middle" fill="#333" transform="rotate(-90 1182.7 412.0)">2,00</text>
<text x="1202.7" y="412.0" font-size="13.5" font-weight="400" text-anchor="middle" fill="#333" transform="rotate(-90 1202.7 412.0)">1,50</text>
<text x="1401.0" y="387.0" font-size="15" font-weight="400" text-anchor="middle" fill="#111"></text>
<line x1="1401.0" y1="389.0" x2="1401.0" y2="487.0" stroke="#000" stroke-width="1.5"/>
<text x="1397.0" y="412.0" font-size="13.5" font-weight="400" text-anchor="middle" fill="#333" transform="rotate(-90 1397.0 412.0)">2,00</text>
<text x="1417.0" y="412.0" font-size="13.5" font-weight="400" text-anchor="middle" fill="#333" transform="rotate(-90 1417.0 412.0)">1,50</text>
<text x="1615.7" y="387.0" font-size="15" font-weight="400" text-anchor="middle" fill="#111"></text>
<line x1="1615.7" y1="389.0" x2="1615.7" y2="487.0" stroke="#000" stroke-width="1.5"/>
<text x="1611.7" y="412.0" font-size="13.5" font-weight="400" text-anchor="middle" fill="#333" transform="rotate(-90 1611.7 412.0)">2,00</text>
<text x="1631.7" y="412.0" font-size="13.5" font-weight="400" text-anchor="middle" fill="#333" transform="rotate(-90 1631.7 412.0)">1,50</text>
<text x="2206.0" y="387.0" font-size="15" font-weight="400" text-anchor="middle" fill="#111">06</text>
<line x1="2206.0" y1="389.0" x2="2206.0" y2="487.0" stroke="#000" stroke-width="1.5"/>
<text x="2202.0" y="412.0" font-size="13.5" font-weight="400" text-anchor="middle" fill="#333" transform="rotate(-90 2202.0 412.0)">1,00</text>
<text x="2222.0" y="412.0" font-size="13.5" font-weight="400" text-anchor="middle" fill="#333" transform="rotate(-90 2222.0 412.0)">0,80</text>
<text x="2473.7" y="387.0" font-size="15" font-weight="400" text-anchor="middle" fill="#111">07</text>
<line x1="2473.7" y1="389.0" x2="2473.7" y2="487.0" stroke="#000" stroke-width="1.5"/>
<text x="2469.7" y="412.0" font-size="13.5" font-weight="400" text-anchor="middle" fill="#333" transform="rotate(-90 2469.7 412.0)">2,00</text>
<text x="2489.7" y="412.0" font-size="13.5" font-weight="400" text-anchor="middle" fill="#333" transform="rotate(-90 2489.7 412.0)">1,50</text>
<line x1="2008.0" y1="389.0" x2="2008.0" y2="487.0" stroke="#000" stroke-width="1.5"/>
<rect x="1800.0" y="381.0" width="12.0" height="24.0" fill="#fff" stroke="#000" stroke-width="1.4"/>
<text x="1806.0" y="398.0" font-size="13" font-weight="400" text-anchor="middle" fill="#333">1</text>
<line x1="1806.0" y1="405.0" x2="1806.0" y2="471.7" stroke="#000" stroke-width="1.4"/>
<text x="803.0" y="546.6" font-size="14" font-weight="400" text-anchor="middle" fill="#333" transform="rotate(-90 803.0 546.6)">21</text>
<text x="814.6" y="540.6" font-size="14.5" font-weight="400" text-anchor="start" fill="#111">2,00</text>
<text x="814.6" y="560.0" font-size="14.5" font-weight="400" text-anchor="start" fill="#111">1,50</text>
<line x1="806.0" y1="546.6" x2="904.0" y2="546.6" stroke="#000" stroke-width="1.4"/>
<text x="803.0" y="746.0" font-size="14" font-weight="400" text-anchor="middle" fill="#333" transform="rotate(-90 803.0 746.0)">20</text>
<text x="814.6" y="740.0" font-size="14.5" font-weight="400" text-anchor="start" fill="#111">2,00</text>
<text x="814.6" y="759.4" font-size="14.5" font-weight="400" text-anchor="start" fill="#111">1,50</text>
<line x1="806.0" y1="746.0" x2="904.0" y2="746.0" stroke="#000" stroke-width="1.4"/>
<text x="803.0" y="945.0" font-size="14" font-weight="400" text-anchor="middle" fill="#333" transform="rotate(-90 803.0 945.0)">19</text>
<text x="814.6" y="939.0" font-size="14.5" font-weight="400" text-anchor="start" fill="#111">2,00</text>
<text x="814.6" y="958.4" font-size="14.5" font-weight="400" text-anchor="start" fill="#111">1,50</text>
<line x1="806.0" y1="945.0" x2="904.0" y2="945.0" stroke="#000" stroke-width="1.4"/>
<text x="803.0" y="1151.5" font-size="14" font-weight="400" text-anchor="middle" fill="#333" transform="rotate(-90 803.0 1151.5)">18</text>
<text x="814.6" y="1145.5" font-size="14.5" font-weight="400" text-anchor="start" fill="#111">2,00</text>
<text x="814.6" y="1164.9" font-size="14.5" font-weight="400" text-anchor="start" fill="#111">1,50</text>
<line x1="806.0" y1="1151.5" x2="904.0" y2="1151.5" stroke="#000" stroke-width="1.4"/>
<text x="803.0" y="1336.5" font-size="14" font-weight="400" text-anchor="middle" fill="#333" transform="rotate(-90 803.0 1336.5)">17</text>
<text x="814.6" y="1330.5" font-size="14.5" font-weight="400" text-anchor="start" fill="#111">2,00</text>
<text x="814.6" y="1349.9" font-size="14.5" font-weight="400" text-anchor="start" fill="#111">1,50</text>
<line x1="806.0" y1="1336.5" x2="904.0" y2="1336.5" stroke="#000" stroke-width="1.4"/>
<rect x="798.0" y="1546.0" width="24.0" height="12.0" fill="#fff" stroke="#000" stroke-width="1.4"/>
<text x="810.0" y="1556.5" font-size="12" font-weight="400" text-anchor="middle" fill="#333">1</text>
<line x1="822.0" y1="1552.0" x2="889.0" y2="1552.0" stroke="#000" stroke-width="1.4"/>
<text x="2601.8" y="485.0" font-size="14.5" font-weight="400" text-anchor="start" fill="#111">1,00</text>
<text x="2601.8" y="504.0" font-size="14.5" font-weight="400" text-anchor="start" fill="#111">0,80</text>
<line x1="2539.0" y1="489.0" x2="2635.0" y2="489.0" stroke="#000" stroke-width="1.4"/>
<text x="2648.0" y="489.0" font-size="14" font-weight="400" text-anchor="middle" fill="#333" transform="rotate(-90 2648.0 489.0)">08</text>
<text x="2601.8" y="600.3" font-size="14.5" font-weight="400" text-anchor="start" fill="#111">1,00</text>
<text x="2601.8" y="619.3" font-size="14.5" font-weight="400" text-anchor="start" fill="#111">0,80</text>
<line x1="2539.0" y1="604.3" x2="2635.0" y2="604.3" stroke="#000" stroke-width="1.4"/>
<text x="2648.0" y="604.3" font-size="14" font-weight="400" text-anchor="middle" fill="#333" transform="rotate(-90 2648.0 604.3)">09</text>
<text x="2601.8" y="942.7" font-size="14.5" font-weight="400" text-anchor="start" fill="#111">2,00</text>
<text x="2601.8" y="961.7" font-size="14.5" font-weight="400" text-anchor="start" fill="#111">1,50</text>
<line x1="2539.0" y1="946.7" x2="2635.0" y2="946.7" stroke="#000" stroke-width="1.4"/>
<text x="2648.0" y="946.7" font-size="14" font-weight="400" text-anchor="middle" fill="#333" transform="rotate(-90 2648.0 946.7)">10</text>
<text x="2601.8" y="1140.5" font-size="14.5" font-weight="400" text-anchor="start" fill="#111">2,00</text>
<text x="2601.8" y="1159.5" font-size="14.5" font-weight="400" text-anchor="start" fill="#111">1,50</text>
<line x1="2539.0" y1="1144.5" x2="2635.0" y2="1144.5" stroke="#000" stroke-width="1.4"/>
<text x="2648.0" y="1144.5" font-size="14" font-weight="400" text-anchor="middle" fill="#333" transform="rotate(-90 2648.0 1144.5)">11</text>
<text x="2601.8" y="1332.5" font-size="14.5" font-weight="400" text-anchor="start" fill="#111">2,00</text>
<text x="2601.8" y="1351.5" font-size="14.5" font-weight="400" text-anchor="start" fill="#111">1,50</text>
<line x1="2539.0" y1="1336.5" x2="2635.0" y2="1336.5" stroke="#000" stroke-width="1.4"/>
<text x="2648.0" y="1336.5" font-size="14" font-weight="400" text-anchor="middle" fill="#333" transform="rotate(-90 2648.0 1336.5)">12</text>
<text x="2601.8" y="1524.4" font-size="14.5" font-weight="400" text-anchor="start" fill="#111">2,00</text>
<text x="2601.8" y="1543.4" font-size="14.5" font-weight="400" text-anchor="start" fill="#111">1,50</text>
<line x1="2539.0" y1="1528.4" x2="2635.0" y2="1528.4" stroke="#000" stroke-width="1.4"/>
<text x="2648.0" y="1528.4" font-size="14" font-weight="400" text-anchor="middle" fill="#333" transform="rotate(-90 2648.0 1528.4)">13</text>
<rect x="2621.0" y="685.0" width="24.0" height="12.0" fill="#fff" stroke="#000" stroke-width="1.4"/>
<text x="2633.0" y="695.5" font-size="12" font-weight="400" text-anchor="middle" fill="#333">1</text>
<line x1="2555.0" y1="691.0" x2="2621.0" y2="691.0" stroke="#000" stroke-width="1.4"/>
<rect x="2623.0" y="1036.0" width="24.0" height="12.0" fill="#fff" stroke="#000" stroke-width="1.4"/>
<text x="2635.0" y="1046.5" font-size="12" font-weight="400" text-anchor="middle" fill="#333">9</text>
<line x1="2560.0" y1="1041.0" x2="2623.0" y2="1041.0" stroke="#000" stroke-width="1.4"/>
<rect x="2621.0" y="1201.7" width="24.0" height="12.0" fill="#fff" stroke="#000" stroke-width="1.4"/>
<text x="2633.0" y="1212.2" font-size="12" font-weight="400" text-anchor="middle" fill="#333">2</text>
<line x1="2560.0" y1="1207.0" x2="2621.0" y2="1207.0" stroke="#000" stroke-width="1.4"/>
<rect x="2621.0" y="1240.0" width="24.0" height="12.0" fill="#fff" stroke="#000" stroke-width="1.4"/>
<text x="2633.0" y="1250.5" font-size="12" font-weight="400" text-anchor="middle" fill="#333">9</text>
<line x1="2560.0" y1="1245.5" x2="2621.0" y2="1245.5" stroke="#000" stroke-width="1.4"/>
<line x1="2525.0" y1="746.0" x2="2595.0" y2="746.0" stroke="#000" stroke-width="1.4"/>
<text x="2546.0" y="740.0" font-size="14.5" font-weight="400" text-anchor="middle" fill="#111">1,00</text>
<text x="2546.0" y="760.6" font-size="14.5" font-weight="400" text-anchor="middle" fill="#111">2,10</text>
<text x="2522.0" y="746.0" font-size="14" font-weight="400" text-anchor="middle" fill="#333" transform="rotate(-90 2522.0 746.0)">20</text>
<line x1="2589.4" y1="712.0" x2="2589.4" y2="781.0" stroke="#000" stroke-width="1.8"/>
<line x1="2589.4" y1="713.0" x2="2623.5" y2="713.0" stroke="#000" stroke-width="1.4"/>
<line x1="2589.4" y1="780.0" x2="2623.5" y2="780.0" stroke="#000" stroke-width="1.4"/>
<path d="M2623.5 713.0 A 34 34 0 0 1 2589.4 746.5" fill="none" stroke="#666" stroke-width="1.2"/>
<path d="M2589.4 746.5 A 34 34 0 0 1 2623.5 780.0" fill="none" stroke="#666" stroke-width="1.2"/>
<line x1="2595.0" y1="746.0" x2="2628.0" y2="746.0" stroke="#000" stroke-width="1.4"/>
<text x="971.4" y="1694.6" font-size="15" font-weight="400" text-anchor="middle" fill="#111">16</text>
<line x1="971.4" y1="1612.0" x2="971.4" y2="1683.6" stroke="#000" stroke-width="1.5"/>
<text x="967.4" y="1660.0" font-size="13.5" font-weight="400" text-anchor="middle" fill="#333" transform="rotate(-90 967.4 1660.0)">2,00</text>
<text x="987.4" y="1660.0" font-size="13.5" font-weight="400" text-anchor="middle" fill="#333" transform="rotate(-90 987.4 1660.0)">1,50</text>
<text x="1187.0" y="1694.6" font-size="15" font-weight="400" text-anchor="middle" fill="#111">15</text>
<line x1="1187.0" y1="1586.8" x2="1187.0" y2="1683.6" stroke="#000" stroke-width="1.5"/>
<text x="1183.0" y="1660.0" font-size="13.5" font-weight="400" text-anchor="middle" fill="#333" transform="rotate(-90 1183.0 1660.0)">2,00</text>
<text x="1203.0" y="1660.0" font-size="13.5" font-weight="400" text-anchor="middle" fill="#333" transform="rotate(-90 1203.0 1660.0)">1,50</text>
<text x="1830.0" y="1694.6" font-size="15" font-weight="400" text-anchor="middle" fill="#111">14</text>
<line x1="1830.0" y1="1612.0" x2="1830.0" y2="1683.6" stroke="#000" stroke-width="1.5"/>
<text x="1826.0" y="1660.0" font-size="13.5" font-weight="400" text-anchor="middle" fill="#333" transform="rotate(-90 1826.0 1660.0)">2,00</text>
<text x="1846.0" y="1660.0" font-size="13.5" font-weight="400" text-anchor="middle" fill="#333" transform="rotate(-90 1846.0 1660.0)">1,50</text>
<rect x="1077.4" y="1667.0" width="12.0" height="24.0" fill="#fff" stroke="#000" stroke-width="1.4"/>
<text x="1083.4" y="1684.0" font-size="13" font-weight="400" text-anchor="middle" fill="#333">3</text>
<line x1="1083.4" y1="1601.0" x2="1083.4" y2="1667.0" stroke="#000" stroke-width="1.4"/>
<rect x="1104.8" y="1667.0" width="12.0" height="24.0" fill="#fff" stroke="#000" stroke-width="1.4"/>
<text x="1110.8" y="1684.0" font-size="13" font-weight="400" text-anchor="middle" fill="#333">1</text>
<line x1="1110.8" y1="1601.0" x2="1110.8" y2="1667.0" stroke="#000" stroke-width="1.4"/>
<rect x="2250.0" y="1667.0" width="12.0" height="24.0" fill="#fff" stroke="#000" stroke-width="1.4"/>
<text x="2256.0" y="1684.0" font-size="13" font-weight="400" text-anchor="middle" fill="#333">2</text>
<line x1="2256.0" y1="1601.0" x2="2256.0" y2="1667.0" stroke="#000" stroke-width="1.4"/>
<rect x="2352.0" y="1667.0" width="12.0" height="24.0" fill="#fff" stroke="#000" stroke-width="1.4"/>
<text x="2358.0" y="1684.0" font-size="13" font-weight="400" text-anchor="middle" fill="#333">3</text>
<line x1="2358.0" y1="1601.0" x2="2358.0" y2="1667.0" stroke="#000" stroke-width="1.4"/>
<text x="925.5" y="515.4" font-size="17" font-weight="700" text-anchor="start" fill="#1a1a1a">Büros</text>
<text x="925.5" y="536.0" font-size="14" font-weight="400" text-anchor="start" fill="#222">31,24 m²</text>
<text x="1147.0" y="515.4" font-size="17" font-weight="700" text-anchor="start" fill="#1a1a1a">Büro Leitung</text>
<text x="1253.5" y="536.0" font-size="14" font-weight="400" text-anchor="end" fill="#222">15,31 m²</text>
<text x="1481.0" y="515.4" font-size="17" font-weight="700" text-anchor="start" fill="#1a1a1a">Speisesaal</text>
<text x="1569.0" y="536.0" font-size="14" font-weight="400" text-anchor="end" fill="#222">30,46 m²</text>
<text x="1805.0" y="515.4" font-size="17" font-weight="700" text-anchor="start" fill="#1a1a1a">Stiege</text>
<text x="1805.0" y="536.0" font-size="14" font-weight="400" text-anchor="start" fill="#222">15,72 m²</text>
<text x="1992.0" y="515.4" font-size="17" font-weight="700" text-anchor="start" fill="#1a1a1a">WC</text>
<text x="1992.0" y="536.0" font-size="14" font-weight="400" text-anchor="start" fill="#222">16,17 m²</text>
<text x="2178.0" y="515.4" font-size="17" font-weight="700" text-anchor="start" fill="#1a1a1a">WC</text>
<text x="2178.0" y="536.0" font-size="14" font-weight="400" text-anchor="start" fill="#222">7,90 m²</text>
<text x="2262.0" y="510.0" font-size="17" font-weight="700" text-anchor="start" fill="#1a1a1a">Technikraum</text>
<text x="2361.4" y="530.6" font-size="14" font-weight="400" text-anchor="end" fill="#222">7,48 m²</text>
<text x="2471.8" y="510.0" font-size="17" font-weight="700" text-anchor="start" fill="#1a1a1a">WC</text>
<text x="2471.8" y="530.6" font-size="14" font-weight="400" text-anchor="start" fill="#222">15,54 m²</text>
<text x="2172.0" y="739.8" font-size="17" font-weight="700" text-anchor="start" fill="#1a1a1a">Gang</text>
<text x="2172.0" y="760.4" font-size="14" font-weight="400" text-anchor="start" fill="#222">47,51 m²</text>
<text x="925.0" y="937.0" font-size="17" font-weight="700" text-anchor="start" fill="#1a1a1a">Büros</text>
<text x="925.0" y="957.6" font-size="14" font-weight="400" text-anchor="start" fill="#222">32,35 m²</text>
<text x="1477.5" y="937.0" font-size="17" font-weight="700" text-anchor="start" fill="#1a1a1a">Lobby</text>
<text x="1477.5" y="957.6" font-size="14" font-weight="400" text-anchor="start" fill="#222">197,73 m²</text>
<text x="1990.8" y="937.4" font-size="17" font-weight="700" text-anchor="start" fill="#1a1a1a">Foyer</text>
<text x="1990.8" y="958.0" font-size="14" font-weight="400" text-anchor="start" fill="#222">16,24 m²</text>
<text x="2210.0" y="937.4" font-size="17" font-weight="700" text-anchor="start" fill="#1a1a1a">Kontrollraum</text>
<text x="2316.8" y="958.0" font-size="14" font-weight="400" text-anchor="end" fill="#222">16,50 m²</text>
<text x="2471.7" y="935.0" font-size="17" font-weight="700" text-anchor="start" fill="#1a1a1a">Foyer</text>
<text x="2471.7" y="955.6" font-size="14" font-weight="400" text-anchor="start" fill="#222">14,58 m²</text>
<text x="1470.5" y="1313.0" font-size="17" font-weight="700" text-anchor="start" fill="#1a1a1a">Eingang</text>
<text x="1470.5" y="1333.6" font-size="14" font-weight="400" text-anchor="start" fill="#222">27,61 m²</text>
<text x="1804.7" y="1313.0" font-size="17" font-weight="700" text-anchor="start" fill="#1a1a1a">Stiege</text>
<text x="1804.7" y="1333.6" font-size="14" font-weight="400" text-anchor="start" fill="#222">15,52 m²</text>
<text x="949.5" y="1481.6" font-size="17" font-weight="700" text-anchor="start" fill="#1a1a1a">Archiv</text>
<text x="949.5" y="1502.2" font-size="14" font-weight="400" text-anchor="start" fill="#222">30,02 m²</text>
<text x="1146.8" y="1481.6" font-size="17" font-weight="700" text-anchor="start" fill="#1a1a1a">Sicherheit</text>
<text x="1229.0" y="1502.2" font-size="14" font-weight="400" text-anchor="end" fill="#222">23,10 m²</text>
<text x="1803.0" y="1565.0" font-size="17" font-weight="700" text-anchor="start" fill="#1a1a1a">Lager</text>
<text x="1803.0" y="1585.6" font-size="14" font-weight="400" text-anchor="start" fill="#222">15,40 m²</text>
<text x="2164.4" y="1565.6" font-size="17" font-weight="700" text-anchor="start" fill="#1a1a1a">Veranstaltungssaal</text>
<text x="2319.7" y="1586.2" font-size="14" font-weight="400" text-anchor="end" fill="#222">140,37 m²</text>
<rect x="1004.8" y="484.7" width="24.0" height="12.0" fill="#fff" stroke="#000" stroke-width="1.4"/>
<text x="1016.8" y="495.2" font-size="12" font-weight="400" text-anchor="middle" fill="#333">8</text>
<line x1="1027.4" y1="489.0" x2="1093.0" y2="489.0" stroke="#000" stroke-width="1.4"/>
<rect x="1218.0" y="484.7" width="24.0" height="12.0" fill="#fff" stroke="#000" stroke-width="1.4"/>
<text x="1230.0" y="495.2" font-size="12" font-weight="400" text-anchor="middle" fill="#333">8</text>
<line x1="1242.0" y1="489.0" x2="1307.5" y2="489.0" stroke="#000" stroke-width="1.4"/>
<rect x="1218.7" y="575.7" width="12.0" height="24.0" fill="#fff" stroke="#000" stroke-width="1.4"/>
<text x="1224.7" y="592.7" font-size="13" font-weight="400" text-anchor="middle" fill="#333">8</text>
<line x1="1224.7" y1="599.7" x2="1224.7" y2="662.7" stroke="#000" stroke-width="1.4"/>
<rect x="1652.0" y="485.0" width="24.0" height="12.0" fill="#fff" stroke="#000" stroke-width="1.4"/>
<text x="1664.0" y="495.5" font-size="12" font-weight="400" text-anchor="middle" fill="#333">8</text>
<line x1="1676.0" y1="489.0" x2="1741.8" y2="489.0" stroke="#000" stroke-width="1.4"/>
<rect x="1652.0" y="575.0" width="12.0" height="24.0" fill="#fff" stroke="#000" stroke-width="1.4"/>
<text x="1658.0" y="592.0" font-size="13" font-weight="400" text-anchor="middle" fill="#333">8</text>
<line x1="1658.0" y1="599.0" x2="1658.0" y2="663.5" stroke="#000" stroke-width="1.4"/>
<rect x="1973.0" y="575.0" width="12.0" height="24.0" fill="#fff" stroke="#000" stroke-width="1.4"/>
<text x="1979.0" y="592.0" font-size="13" font-weight="400" text-anchor="middle" fill="#333">8</text>
<line x1="1979.0" y1="599.0" x2="1979.0" y2="663.5" stroke="#000" stroke-width="1.4"/>
<rect x="1985.0" y="540.6" width="24.0" height="12.0" fill="#fff" stroke="#000" stroke-width="1.4"/>
<text x="1997.0" y="551.1" font-size="12" font-weight="400" text-anchor="middle" fill="#333">8</text>
<line x1="1944.0" y1="546.6" x2="1985.0" y2="546.6" stroke="#000" stroke-width="1.4"/>
<rect x="2204.0" y="540.6" width="24.0" height="12.0" fill="#fff" stroke="#000" stroke-width="1.4"/>
<text x="2216.0" y="551.1" font-size="12" font-weight="400" text-anchor="middle" fill="#333">8</text>
<line x1="2139.0" y1="546.6" x2="2204.0" y2="546.6" stroke="#000" stroke-width="1.4"/>
<rect x="2290.0" y="540.6" width="24.0" height="12.0" fill="#fff" stroke="#000" stroke-width="1.4"/>
<text x="2302.0" y="551.1" font-size="12" font-weight="400" text-anchor="middle" fill="#333">8</text>
<line x1="2314.0" y1="546.6" x2="2381.0" y2="546.6" stroke="#000" stroke-width="1.4"/>
<rect x="2268.0" y="575.0" width="12.0" height="24.0" fill="#fff" stroke="#000" stroke-width="1.4"/>
<text x="2274.0" y="592.0" font-size="13" font-weight="400" text-anchor="middle" fill="#333">8</text>
<line x1="2274.0" y1="599.0" x2="2274.0" y2="663.5" stroke="#000" stroke-width="1.4"/>
<rect x="2509.0" y="575.0" width="12.0" height="24.0" fill="#fff" stroke="#000" stroke-width="1.4"/>
<text x="2515.0" y="592.0" font-size="13" font-weight="400" text-anchor="middle" fill="#333">8</text>
<line x1="2515.0" y1="599.0" x2="2515.0" y2="663.5" stroke="#000" stroke-width="1.4"/>
<rect x="1003.0" y="1008.7" width="24.0" height="12.0" fill="#fff" stroke="#000" stroke-width="1.4"/>
<text x="1015.0" y="1019.2" font-size="12" font-weight="400" text-anchor="middle" fill="#333">8</text>
<line x1="1027.6" y1="1014.0" x2="1093.4" y2="1014.0" stroke="#000" stroke-width="1.4"/>
<rect x="1875.0" y="1003.5" width="24.0" height="12.0" fill="#fff" stroke="#000" stroke-width="1.4"/>
<text x="1887.0" y="1014.0" font-size="12" font-weight="400" text-anchor="middle" fill="#333">9</text>
<line x1="1899.8" y1="1009.0" x2="1940.0" y2="1009.0" stroke="#000" stroke-width="1.4"/>
<rect x="2332.0" y="770.0" width="12.0" height="24.0" fill="#fff" stroke="#000" stroke-width="1.4"/>
<text x="2338.0" y="787.0" font-size="13" font-weight="400" text-anchor="middle" fill="#333">8</text>
<line x1="2338.0" y1="794.0" x2="2338.0" y2="857.7" stroke="#000" stroke-width="1.4"/>
<rect x="2332.0" y="983.4" width="12.0" height="24.0" fill="#fff" stroke="#000" stroke-width="1.4"/>
<text x="2338.0" y="1000.4" font-size="13" font-weight="400" text-anchor="middle" fill="#333">7</text>
<line x1="2338.0" y1="1007.4" x2="2338.0" y2="1071.0" stroke="#000" stroke-width="1.4"/>
<rect x="1246.7" y="1253.0" width="12.0" height="24.0" fill="#fff" stroke="#000" stroke-width="1.4"/>
<text x="1252.7" y="1270.0" font-size="13" font-weight="400" text-anchor="middle" fill="#333">8</text>
<line x1="1252.7" y1="1277.0" x2="1252.7" y2="1342.8" stroke="#000" stroke-width="1.4"/>
<rect x="1355.0" y="1338.0" width="24.0" height="12.0" fill="#fff" stroke="#000" stroke-width="1.4"/>
<text x="1367.0" y="1348.5" font-size="12" font-weight="400" text-anchor="middle" fill="#333">7</text>
<line x1="1289.6" y1="1343.7" x2="1355.0" y2="1343.7" stroke="#000" stroke-width="1.4"/>
<rect x="1639.0" y="1370.7" width="24.0" height="12.0" fill="#fff" stroke="#000" stroke-width="1.4"/>
<text x="1651.0" y="1381.2" font-size="12" font-weight="400" text-anchor="middle" fill="#333">7</text>
<line x1="1661.0" y1="1377.0" x2="1727.0" y2="1377.0" stroke="#000" stroke-width="1.4"/>
<rect x="1779.0" y="1485.0" width="12.0" height="24.0" fill="#fff" stroke="#000" stroke-width="1.4"/>
<text x="1785.0" y="1502.0" font-size="13" font-weight="400" text-anchor="middle" fill="#333">8</text>
<line x1="1785.0" y1="1420.0" x2="1785.0" y2="1485.0" stroke="#000" stroke-width="1.4"/>
<rect x="1660.0" y="1541.6" width="24.0" height="12.0" fill="#fff" stroke="#000" stroke-width="1.4"/>
<text x="1672.0" y="1552.1" font-size="12" font-weight="400" text-anchor="middle" fill="#333">1</text>
<line x1="1684.0" y1="1546.0" x2="1747.6" y2="1546.0" stroke="#000" stroke-width="1.4"/>
<rect x="1003.0" y="1521.8" width="24.0" height="12.0" fill="#fff" stroke="#000" stroke-width="1.4"/>
<text x="1015.0" y="1532.3" font-size="12" font-weight="400" text-anchor="middle" fill="#333">8</text>
<line x1="1027.0" y1="1528.0" x2="1093.0" y2="1528.0" stroke="#000" stroke-width="1.4"/>
<rect x="1334.0" y="1546.0" width="24.0" height="12.0" fill="#fff" stroke="#000" stroke-width="1.4"/>
<text x="1346.0" y="1556.5" font-size="12" font-weight="400" text-anchor="middle" fill="#333">1</text>
<line x1="1268.5" y1="1552.0" x2="1334.0" y2="1552.0" stroke="#000" stroke-width="1.4"/>
<rect x="1999.0" y="1372.0" width="24.0" height="12.0" fill="#fff" stroke="#000" stroke-width="1.4"/>
<text x="2011.0" y="1382.5" font-size="12" font-weight="400" text-anchor="middle" fill="#333">7</text>
<line x1="1946.0" y1="1377.0" x2="1999.0" y2="1377.0" stroke="#000" stroke-width="1.4"/>
<rect x="1978.0" y="1506.0" width="24.0" height="12.0" fill="#fff" stroke="#000" stroke-width="1.4"/>
<text x="1990.0" y="1516.5" font-size="12" font-weight="400" text-anchor="middle" fill="#333">7</text>
<line x1="1940.0" y1="1512.0" x2="1978.0" y2="1512.0" stroke="#000" stroke-width="1.4"/>
<text x="1127.5" y="600.4" font-size="15" font-weight="400" text-anchor="middle" fill="#111">01</text>
<line x1="1127.5" y1="603.4" x2="1127.5" y2="684.8" stroke="#000" stroke-width="1.5"/>
<text x="1123.5" y="625.4" font-size="13.5" font-weight="400" text-anchor="middle" fill="#333" transform="rotate(-90 1123.5 625.4)">1,00</text>
<text x="1143.5" y="625.4" font-size="13.5" font-weight="400" text-anchor="middle" fill="#333" transform="rotate(-90 1143.5 625.4)">2,10</text>
<text x="1446.8" y="600.4" font-size="15" font-weight="400" text-anchor="middle" fill="#111">02</text>
<line x1="1446.8" y1="603.4" x2="1446.8" y2="684.8" stroke="#000" stroke-width="1.5"/>
<text x="1442.8" y="625.4" font-size="13.5" font-weight="400" text-anchor="middle" fill="#333" transform="rotate(-90 1442.8 625.4)">1,00</text>
<text x="1462.8" y="625.4" font-size="13.5" font-weight="400" text-anchor="middle" fill="#333" transform="rotate(-90 1462.8 625.4)">2,10</text>
<text x="1569.5" y="600.4" font-size="15" font-weight="400" text-anchor="middle" fill="#111">03</text>
<line x1="1569.5" y1="603.4" x2="1569.5" y2="684.8" stroke="#000" stroke-width="1.5"/>
<text x="1565.5" y="625.4" font-size="13.5" font-weight="400" text-anchor="middle" fill="#333" transform="rotate(-90 1565.5 625.4)">1,00</text>
<text x="1585.5" y="625.4" font-size="13.5" font-weight="400" text-anchor="middle" fill="#333" transform="rotate(-90 1585.5 625.4)">2,10</text>
<text x="2008.0" y="600.4" font-size="15" font-weight="400" text-anchor="middle" fill="#111">04</text>
<line x1="2008.0" y1="603.4" x2="2008.0" y2="684.8" stroke="#000" stroke-width="1.5"/>
<text x="2004.0" y="625.4" font-size="13.5" font-weight="400" text-anchor="middle" fill="#333" transform="rotate(-90 2004.0 625.4)">1,00</text>
<text x="2024.0" y="625.4" font-size="13.5" font-weight="400" text-anchor="middle" fill="#333" transform="rotate(-90 2024.0 625.4)">2,10</text>
<text x="2205.5" y="600.4" font-size="15" font-weight="400" text-anchor="middle" fill="#111">05A</text>
<line x1="2205.5" y1="603.4" x2="2205.5" y2="684.8" stroke="#000" stroke-width="1.5"/>
<text x="2201.5" y="625.4" font-size="13.5" font-weight="400" text-anchor="middle" fill="#333" transform="rotate(-90 2201.5 625.4)">1,00</text>
<text x="2221.5" y="625.4" font-size="13.5" font-weight="400" text-anchor="middle" fill="#333" transform="rotate(-90 2221.5 625.4)">2,10</text>
<text x="2321.0" y="600.4" font-size="15" font-weight="400" text-anchor="middle" fill="#111">05B</text>
<line x1="2321.0" y1="603.4" x2="2321.0" y2="684.8" stroke="#000" stroke-width="1.5"/>
<text x="2317.0" y="625.4" font-size="13.5" font-weight="400" text-anchor="middle" fill="#333" transform="rotate(-90 2317.0 625.4)">1,00</text>
<text x="2337.0" y="625.4" font-size="13.5" font-weight="400" text-anchor="middle" fill="#333" transform="rotate(-90 2337.0 625.4)">2,10</text>
<text x="2531.0" y="600.4" font-size="15" font-weight="400" text-anchor="middle" fill="#111">06</text>
<line x1="2531.0" y1="603.4" x2="2531.0" y2="684.8" stroke="#000" stroke-width="1.5"/>
<text x="2527.0" y="625.4" font-size="13.5" font-weight="400" text-anchor="middle" fill="#333" transform="rotate(-90 2527.0 625.4)">1,00</text>
<text x="2547.0" y="625.4" font-size="13.5" font-weight="400" text-anchor="middle" fill="#333" transform="rotate(-90 2547.0 625.4)">2,10</text>
<text x="2001.0" y="901.0" font-size="15" font-weight="400" text-anchor="middle" fill="#111">08</text>
<line x1="2001.0" y1="807.0" x2="2001.0" y2="880.0" stroke="#000" stroke-width="1.5"/>
<text x="1997.0" y="866.0" font-size="13.5" font-weight="400" text-anchor="middle" fill="#333" transform="rotate(-90 1997.0 866.0)">1,00</text>
<text x="2017.0" y="866.0" font-size="13.5" font-weight="400" text-anchor="middle" fill="#333" transform="rotate(-90 2017.0 866.0)">2,10</text>
<text x="2260.4" y="901.0" font-size="15" font-weight="400" text-anchor="middle" fill="#111">08A</text>
<line x1="2260.4" y1="807.0" x2="2260.4" y2="880.0" stroke="#000" stroke-width="1.5"/>
<text x="2256.4" y="866.0" font-size="13.5" font-weight="400" text-anchor="middle" fill="#333" transform="rotate(-90 2256.4 866.0)">1,00</text>
<text x="2276.4" y="866.0" font-size="13.5" font-weight="400" text-anchor="middle" fill="#333" transform="rotate(-90 2276.4 866.0)">2,10</text>
<text x="2518.5" y="901.0" font-size="15" font-weight="400" text-anchor="middle" fill="#111">09</text>
<line x1="2518.5" y1="807.0" x2="2518.5" y2="880.0" stroke="#000" stroke-width="1.5"/>
<text x="2514.5" y="866.0" font-size="13.5" font-weight="400" text-anchor="middle" fill="#333" transform="rotate(-90 2514.5 866.0)">1,00</text>
<text x="2534.5" y="866.0" font-size="13.5" font-weight="400" text-anchor="middle" fill="#333" transform="rotate(-90 2534.5 866.0)">2,10</text>
<text x="2001.0" y="1114.0" font-size="15" font-weight="400" text-anchor="middle" fill="#111">10</text>
<line x1="2001.0" y1="1017.0" x2="2001.0" y2="1103.7" stroke="#000" stroke-width="1.5"/>
<text x="1997.0" y="1077.7" font-size="13.5" font-weight="400" text-anchor="middle" fill="#333" transform="rotate(-90 1997.0 1077.7)">1,00</text>
<text x="2017.0" y="1077.7" font-size="13.5" font-weight="400" text-anchor="middle" fill="#333" transform="rotate(-90 2017.0 1077.7)">2,10</text>
<text x="2260.4" y="1114.0" font-size="15" font-weight="400" text-anchor="middle" fill="#111"></text>
<line x1="2260.4" y1="1017.0" x2="2260.4" y2="1103.7" stroke="#000" stroke-width="1.5"/>
<text x="2256.4" y="1077.7" font-size="13.5" font-weight="400" text-anchor="middle" fill="#333" transform="rotate(-90 2256.4 1077.7)">2,00</text>
<text x="2276.4" y="1077.7" font-size="13.5" font-weight="400" text-anchor="middle" fill="#333" transform="rotate(-90 2276.4 1077.7)">1,50</text>
<text x="2518.5" y="1114.0" font-size="15" font-weight="400" text-anchor="middle" fill="#111">11</text>
<line x1="2518.5" y1="1017.0" x2="2518.5" y2="1103.7" stroke="#000" stroke-width="1.5"/>
<text x="2514.5" y="1077.7" font-size="13.5" font-weight="400" text-anchor="middle" fill="#333" transform="rotate(-90 2514.5 1077.7)">1,00</text>
<text x="2534.5" y="1077.7" font-size="13.5" font-weight="400" text-anchor="middle" fill="#333" transform="rotate(-90 2534.5 1077.7)">2,10</text>
<text x="1447.0" y="1198.0" font-size="15" font-weight="400" text-anchor="middle" fill="#111">15</text>
<line x1="1447.0" y1="1202.0" x2="1447.0" y2="1283.0" stroke="#000" stroke-width="1.5"/>
<text x="1443.0" y="1224.0" font-size="13.5" font-weight="400" text-anchor="middle" fill="#333" transform="rotate(-90 1443.0 1224.0)">1,00</text>
<text x="1463.0" y="1224.0" font-size="13.5" font-weight="400" text-anchor="middle" fill="#333" transform="rotate(-90 1463.0 1224.0)">2,10</text>
<text x="1569.5" y="1198.0" font-size="15" font-weight="400" text-anchor="middle" fill="#111">16</text>
<line x1="1569.5" y1="1202.0" x2="1569.5" y2="1283.0" stroke="#000" stroke-width="1.5"/>
<text x="1565.5" y="1224.0" font-size="13.5" font-weight="400" text-anchor="middle" fill="#333" transform="rotate(-90 1565.5 1224.0)">1,00</text>
<text x="1585.5" y="1224.0" font-size="13.5" font-weight="400" text-anchor="middle" fill="#333" transform="rotate(-90 1585.5 1224.0)">2,10</text>
<text x="1447.0" y="1387.0" font-size="15" font-weight="400" text-anchor="middle" fill="#111">17</text>
<line x1="1447.0" y1="1390.0" x2="1447.0" y2="1472.0" stroke="#000" stroke-width="1.5"/>
<text x="1443.0" y="1412.0" font-size="13.5" font-weight="400" text-anchor="middle" fill="#333" transform="rotate(-90 1443.0 1412.0)">1,00</text>
<text x="1463.0" y="1412.0" font-size="13.5" font-weight="400" text-anchor="middle" fill="#333" transform="rotate(-90 1463.0 1412.0)">2,10</text>
<text x="1569.5" y="1387.0" font-size="15" font-weight="400" text-anchor="middle" fill="#111">18</text>
<line x1="1569.5" y1="1390.0" x2="1569.5" y2="1472.0" stroke="#000" stroke-width="1.5"/>
<text x="1565.5" y="1412.0" font-size="13.5" font-weight="400" text-anchor="middle" fill="#333" transform="rotate(-90 1565.5 1412.0)">1,00</text>
<text x="1585.5" y="1412.0" font-size="13.5" font-weight="400" text-anchor="middle" fill="#333" transform="rotate(-90 1585.5 1412.0)">2,10</text>
<line x1="1346.7" y1="902.7" x2="1346.7" y2="988.5" stroke="#000" stroke-width="1.5"/>
<text x="1338.0" y="957.0" font-size="13.5" font-weight="400" text-anchor="middle" fill="#333" transform="rotate(-90 1338.0 957.0)">1,00</text>
<text x="1358.0" y="957.0" font-size="13.5" font-weight="400" text-anchor="middle" fill="#333" transform="rotate(-90 1358.0 957.0)">2,10</text>
<line x1="1174.0" y1="1297.0" x2="1174.0" y2="1377.8" stroke="#000" stroke-width="1.5"/>
<text x="1165.0" y="1354.0" font-size="13.5" font-weight="400" text-anchor="middle" fill="#333" transform="rotate(-90 1165.0 1354.0)">1,00</text>
<text x="1185.0" y="1354.0" font-size="13.5" font-weight="400" text-anchor="middle" fill="#333" transform="rotate(-90 1185.0 1354.0)">2,10</text>
<text x="1174.0" y="1390.8" font-size="15" font-weight="400" text-anchor="middle" fill="#111">14</text>
<line x1="1267.5" y1="1377.3" x2="1342.9" y2="1377.3" stroke="#000" stroke-width="1.4"/>
<text x="1322.0" y="1372.6" font-size="14.5" font-weight="400" text-anchor="middle" fill="#111">1,00</text>
<text x="1322.0" y="1391.0" font-size="14.5" font-weight="400" text-anchor="middle" fill="#111">1,00</text>
<text x="1354.0" y="1377.3" font-size="14" font-weight="400" text-anchor="middle" fill="#333" transform="rotate(-90 1354.0 1377.3)">14</text>
<line x1="1031.0" y1="800.0" x2="1111.6" y2="800.0" stroke="#000" stroke-width="1.4"/>
<text x="1054.0" y="794.0" font-size="14.5" font-weight="400" text-anchor="middle" fill="#111">1,00</text>
<text x="1054.0" y="815.0" font-size="14.5" font-weight="400" text-anchor="middle" fill="#111">2,10</text>
<text x="1026.0" y="800.0" font-size="14" font-weight="400" text-anchor="middle" fill="#333" transform="rotate(-90 1026.0 800.0)">07</text>
<line x1="1031.0" y1="1197.6" x2="1111.6" y2="1197.6" stroke="#000" stroke-width="1.4"/>
<text x="1054.0" y="1191.6" font-size="14.5" font-weight="400" text-anchor="middle" fill="#111">1,00</text>
<text x="1054.0" y="1212.6" font-size="14.5" font-weight="400" text-anchor="middle" fill="#111">2,10</text>
<text x="1026.0" y="1197.6" font-size="14" font-weight="400" text-anchor="middle" fill="#333" transform="rotate(-90 1026.0 1197.6)">12</text>
<line x1="1031.0" y1="1290.0" x2="1111.6" y2="1290.0" stroke="#000" stroke-width="1.4"/>
<text x="1054.0" y="1284.0" font-size="14.5" font-weight="400" text-anchor="middle" fill="#111">1,00</text>
<text x="1054.0" y="1305.0" font-size="14.5" font-weight="400" text-anchor="middle" fill="#111">2,10</text>
<text x="1026.0" y="1290.0" font-size="14" font-weight="400" text-anchor="middle" fill="#333" transform="rotate(-90 1026.0 1290.0)">13</text>
<line x1="2036.0" y1="551.5" x2="2124.0" y2="551.5" stroke="#000" stroke-width="1.4"/>
<text x="2080.0" y="545.5" font-size="14.5" font-weight="400" text-anchor="middle" fill="#111">1,00</text>
<text x="2080.0" y="566.5" font-size="14.5" font-weight="400" text-anchor="middle" fill="#111">2,10</text>
<line x1="2036.0" y1="616.8" x2="2124.0" y2="616.8" stroke="#000" stroke-width="1.4"/>
<text x="2080.0" y="610.8" font-size="14.5" font-weight="400" text-anchor="middle" fill="#111">1,00</text>
<text x="2080.0" y="631.8" font-size="14.5" font-weight="400" text-anchor="middle" fill="#111">2,10</text>
<line x1="2403.0" y1="486.0" x2="2484.0" y2="486.0" stroke="#000" stroke-width="1.4"/>
<text x="2426.0" y="480.0" font-size="14.5" font-weight="400" text-anchor="middle" fill="#111">1,00</text>
<text x="2426.0" y="501.0" font-size="14.5" font-weight="400" text-anchor="middle" fill="#111">2,10</text>
<text x="2398.0" y="486.0" font-size="14" font-weight="400" text-anchor="middle" fill="#333" transform="rotate(-90 2398.0 486.0)">04</text>
<line x1="2403.0" y1="551.6" x2="2484.0" y2="551.6" stroke="#000" stroke-width="1.4"/>
<text x="2426.0" y="545.6" font-size="14.5" font-weight="400" text-anchor="middle" fill="#111">1,00</text>
<text x="2426.0" y="566.6" font-size="14.5" font-weight="400" text-anchor="middle" fill="#111">2,10</text>
<text x="2398.0" y="551.6" font-size="14" font-weight="400" text-anchor="middle" fill="#333" transform="rotate(-90 2398.0 551.6)">04</text>
<line x1="2403.0" y1="617.0" x2="2484.0" y2="617.0" stroke="#000" stroke-width="1.4"/>
<text x="2426.0" y="611.0" font-size="14.5" font-weight="400" text-anchor="middle" fill="#111">1,00</text>
<text x="2426.0" y="632.0" font-size="14.5" font-weight="400" text-anchor="middle" fill="#111">2,10</text>
<text x="2398.0" y="617.0" font-size="14" font-weight="400" text-anchor="middle" fill="#333" transform="rotate(-90 2398.0 617.0)">04</text>
<line x1="1909.0" y1="1479.0" x2="1995.0" y2="1479.0" stroke="#000" stroke-width="1.4"/>
<text x="1971.0" y="1473.0" font-size="14.5" font-weight="400" text-anchor="middle" fill="#111">1,00</text>
<text x="1971.0" y="1494.0" font-size="14.5" font-weight="400" text-anchor="middle" fill="#111">2,10</text>
<text x="2004.0" y="1479.0" font-size="14" font-weight="400" text-anchor="middle" fill="#333" transform="rotate(-90 2004.0 1479.0)">19</text>
<line x1="1103.5" y1="651.0" x2="1103.5" y2="699.0" stroke="#000" stroke-width="1.4"/>
<path d="M1103.5 699.0 A 47 47 0 0 0 1150.3 651.0" fill="none" stroke="#666" stroke-width="1.2"/>
<line x1="1412.0" y1="654.0" x2="1412.0" y2="689.0" stroke="#000" stroke-width="1.4"/>
<line x1="1482.0" y1="654.0" x2="1482.0" y2="689.0" stroke="#000" stroke-width="1.4"/>
<path d="M1412.0 689.0 A 35.0 35.0 0 0 0 1447.0 654.0" fill="none" stroke="#666" stroke-width="1.2"/>
<path d="M1482.0 689.0 A 35.0 35.0 0 0 1 1447.0 654.0" fill="none" stroke="#666" stroke-width="1.2"/>
<line x1="1534.7" y1="654.0" x2="1534.7" y2="689.0" stroke="#000" stroke-width="1.4"/>
<line x1="1606.0" y1="654.0" x2="1606.0" y2="689.0" stroke="#000" stroke-width="1.4"/>
<path d="M1534.7 689.0 A 35.649999999999864 35.649999999999864 0 0 0 1570.3 654.0" fill="none" stroke="#666" stroke-width="1.2"/>
<path d="M1606.0 689.0 A 35.649999999999864 35.649999999999864 0 0 1 1570.3 654.0" fill="none" stroke="#666" stroke-width="1.2"/>
<line x1="1984.6" y1="654.0" x2="1984.6" y2="700.0" stroke="#000" stroke-width="1.4"/>
<path d="M1984.6 700.0 A 46 46 0 0 0 2031.0 654.0" fill="none" stroke="#666" stroke-width="1.2"/>
<line x1="2177.4" y1="654.0" x2="2177.4" y2="709.5" stroke="#000" stroke-width="1.4"/>
<path d="M2177.4 709.5 A 55.6 55.6 0 0 0 2233.0 654.0" fill="none" stroke="#666" stroke-width="1.2"/>
<line x1="2352.0" y1="654.0" x2="2352.0" y2="709.5" stroke="#000" stroke-width="1.4"/>
<path d="M2352.0 709.5 A 55.6 55.6 0 0 1 2296.4 654.0" fill="none" stroke="#666" stroke-width="1.2"/>
<line x1="2552.4" y1="654.0" x2="2552.4" y2="699.0" stroke="#000" stroke-width="1.4"/>
<path d="M2552.4 699.0 A 45 45 0 0 1 2508.0 654.0" fill="none" stroke="#666" stroke-width="1.2"/>
<line x1="1079.0" y1="822.0" x2="1127.0" y2="822.0" stroke="#000" stroke-width="1.4"/>
<path d="M1127.0 822.0 A 48 48 0 0 0 1079.0 774.0" fill="none" stroke="#666" stroke-width="1.2"/>
<line x1="1079.0" y1="1219.0" x2="1127.0" y2="1219.0" stroke="#000" stroke-width="1.4"/>
<path d="M1127.0 1219.0 A 48 48 0 0 0 1079.0 1171.0" fill="none" stroke="#666" stroke-width="1.2"/>
<line x1="1079.0" y1="1267.0" x2="1127.0" y2="1267.0" stroke="#000" stroke-width="1.4"/>
<path d="M1127.0 1267.0 A 48 48 0 0 1 1079.0 1315.0" fill="none" stroke="#666" stroke-width="1.2"/>
<line x1="1152.0" y1="1330.0" x2="1152.0" y2="1282.0" stroke="#000" stroke-width="1.4"/>
<path d="M1152.0 1282.0 A 47 47 0 0 1 1197.0 1330.0" fill="none" stroke="#666" stroke-width="1.2"/>
<line x1="1966.0" y1="840.0" x2="1966.0" y2="805.0" stroke="#000" stroke-width="1.4"/>
<line x1="2036.0" y1="840.0" x2="2036.0" y2="805.0" stroke="#000" stroke-width="1.4"/>
<path d="M1966.0 805.0 A 35.0 35.0 0 0 1 2001.0 840.0" fill="none" stroke="#666" stroke-width="1.2"/>
<path d="M2036.0 805.0 A 35.0 35.0 0 0 0 2001.0 840.0" fill="none" stroke="#666" stroke-width="1.2"/>
<line x1="2483.0" y1="840.0" x2="2483.0" y2="805.0" stroke="#000" stroke-width="1.4"/>
<line x1="2553.0" y1="840.0" x2="2553.0" y2="805.0" stroke="#000" stroke-width="1.4"/>
<path d="M2483.0 805.0 A 35.0 35.0 0 0 1 2518.0 840.0" fill="none" stroke="#666" stroke-width="1.2"/>
<path d="M2553.0 805.0 A 35.0 35.0 0 0 0 2518.0 840.0" fill="none" stroke="#666" stroke-width="1.2"/>
<line x1="2236.0" y1="840.0" x2="2236.0" y2="792.0" stroke="#000" stroke-width="1.4"/>
<path d="M2236.0 792.0 A 47 47 0 0 1 2283.0 840.0" fill="none" stroke="#666" stroke-width="1.2"/>
<line x1="1966.0" y1="1045.0" x2="1966.0" y2="1010.0" stroke="#000" stroke-width="1.4"/>
<line x1="2036.0" y1="1045.0" x2="2036.0" y2="1010.0" stroke="#000" stroke-width="1.4"/>
<path d="M1966.0 1010.0 A 35.0 35.0 0 0 1 2001.0 1045.0" fill="none" stroke="#666" stroke-width="1.2"/>
<path d="M2036.0 1010.0 A 35.0 35.0 0 0 0 2001.0 1045.0" fill="none" stroke="#666" stroke-width="1.2"/>
<line x1="2483.0" y1="1045.0" x2="2483.0" y2="1010.0" stroke="#000" stroke-width="1.4"/>
<line x1="2553.0" y1="1045.0" x2="2553.0" y2="1010.0" stroke="#000" stroke-width="1.4"/>
<path d="M2483.0 1010.0 A 35.0 35.0 0 0 1 2518.0 1045.0" fill="none" stroke="#666" stroke-width="1.2"/>
<path d="M2553.0 1010.0 A 35.0 35.0 0 0 0 2518.0 1045.0" fill="none" stroke="#666" stroke-width="1.2"/>
<line x1="1411.5" y1="1250.0" x2="1411.5" y2="1288.0" stroke="#000" stroke-width="1.4"/>
<line x1="1482.0" y1="1250.0" x2="1482.0" y2="1288.0" stroke="#000" stroke-width="1.4"/>
<path d="M1411.5 1288.0 A 35.25 35.25 0 0 0 1446.8 1252.8" fill="none" stroke="#666" stroke-width="1.2"/>
<path d="M1482.0 1288.0 A 35.25 35.25 0 0 1 1446.8 1252.8" fill="none" stroke="#666" stroke-width="1.2"/>
<line x1="1534.0" y1="1250.0" x2="1534.0" y2="1288.0" stroke="#000" stroke-width="1.4"/>
<line x1="1606.0" y1="1250.0" x2="1606.0" y2="1288.0" stroke="#000" stroke-width="1.4"/>
<path d="M1534.0 1288.0 A 36.0 36.0 0 0 0 1570.0 1252.0" fill="none" stroke="#666" stroke-width="1.2"/>
<path d="M1606.0 1288.0 A 36.0 36.0 0 0 1 1570.0 1252.0" fill="none" stroke="#666" stroke-width="1.2"/>
<line x1="1411.5" y1="1440.0" x2="1411.5" y2="1476.0" stroke="#000" stroke-width="1.4"/>
<line x1="1482.0" y1="1440.0" x2="1482.0" y2="1476.0" stroke="#000" stroke-width="1.4"/>
<path d="M1411.5 1476.0 A 35.25 35.25 0 0 0 1446.8 1440.8" fill="none" stroke="#666" stroke-width="1.2"/>
<path d="M1482.0 1476.0 A 35.25 35.25 0 0 1 1446.8 1440.8" fill="none" stroke="#666" stroke-width="1.2"/>
<line x1="1534.0" y1="1440.0" x2="1534.0" y2="1476.0" stroke="#000" stroke-width="1.4"/>
<line x1="1606.0" y1="1440.0" x2="1606.0" y2="1476.0" stroke="#000" stroke-width="1.4"/>
<path d="M1534.0 1476.0 A 36.0 36.0 0 0 0 1570.0 1440.0" fill="none" stroke="#666" stroke-width="1.2"/>
<path d="M1606.0 1476.0 A 36.0 36.0 0 0 1 1570.0 1440.0" fill="none" stroke="#666" stroke-width="1.2"/>
<line x1="1894.0" y1="1457.0" x2="1946.0" y2="1457.0" stroke="#000" stroke-width="1.4"/>
<path d="M1894.0 1457.0 A 52 52 0 0 0 1946.0 1503.0" fill="none" stroke="#666" stroke-width="1.2"/>
<line x1="2019.6" y1="486.0" x2="2069.0" y2="486.0" stroke="#000" stroke-width="1.4"/>
<path d="M2019.6 486.0 A 49 49 0 0 0 2069.0 527.0" fill="none" stroke="#666" stroke-width="1.2"/>
<line x1="2019.6" y1="594.0" x2="2069.0" y2="594.0" stroke="#000" stroke-width="1.4"/>
<path d="M2019.6 594.0 A 49 49 0 0 0 2069.0 635.0" fill="none" stroke="#666" stroke-width="1.2"/>
<line x1="2403.0" y1="527.0" x2="2449.0" y2="527.0" stroke="#000" stroke-width="1.2"/>
<line x1="2450.0" y1="470.0" x2="2490.0" y2="470.0" stroke="#000" stroke-width="1.4"/>
<path d="M2490.0 470.0 A 49 49 0 0 1 2450.0 519.0" fill="none" stroke="#666" stroke-width="1.2"/>
<line x1="2450.0" y1="594.0" x2="2490.0" y2="594.0" stroke="#000" stroke-width="1.4"/>
<path d="M2490.0 594.0 A 49 49 0 0 1 2450.0 643.0" fill="none" stroke="#666" stroke-width="1.2"/>
<line x1="1944.0" y1="457.0" x2="2149.0" y2="653.0" stroke="#666" stroke-width="1.0"/>
<line x1="2149.0" y1="457.0" x2="1944.0" y2="653.0" stroke="#666" stroke-width="1.0"/>
<line x1="2160.0" y1="467.0" x2="2259.0" y2="653.0" stroke="#666" stroke-width="1.0"/>
<line x1="2259.0" y1="467.0" x2="2160.0" y2="653.0" stroke="#666" stroke-width="1.0"/>
<line x1="2375.0" y1="457.0" x2="2571.0" y2="653.0" stroke="#666" stroke-width="1.0"/>
<line x1="2571.0" y1="457.0" x2="2375.0" y2="653.0" stroke="#666" stroke-width="1.0"/>
<circle cx="2205" cy="630" r="40" fill="none" stroke="#999" stroke-width="1.2" stroke-dasharray="8 6"/>
<line x1="1730.0" y1="527.8" x2="1800.0" y2="527.8" stroke="#555" stroke-width="1.3" stroke-dasharray="13 14"/>
<line x1="1860.5" y1="527.8" x2="1931.0" y2="527.8" stroke="#555" stroke-width="1.3" stroke-dasharray="13 14"/>
<line x1="1730.0" y1="540.4" x2="1800.0" y2="540.4" stroke="#555" stroke-width="1.3" stroke-dasharray="13 14"/>
<line x1="1860.5" y1="540.4" x2="1931.0" y2="540.4" stroke="#555" stroke-width="1.3" stroke-dasharray="13 14"/>
<line x1="1730.0" y1="553.0" x2="1800.0" y2="553.0" stroke="#555" stroke-width="1.3" stroke-dasharray="13 14"/>
<line x1="1860.5" y1="553.0" x2="1931.0" y2="553.0" stroke="#555" stroke-width="1.3" stroke-dasharray="13 14"/>
<line x1="1730.0" y1="565.6" x2="1800.0" y2="565.6" stroke="#555" stroke-width="1.3" stroke-dasharray="13 14"/>
<line x1="1860.5" y1="565.6" x2="1931.0" y2="565.6" stroke="#555" stroke-width="1.3" stroke-dasharray="13 14"/>
<line x1="1730.0" y1="578.2" x2="1800.0" y2="578.2" stroke="#555" stroke-width="1.3" stroke-dasharray="13 14"/>
<line x1="1860.5" y1="578.2" x2="1931.0" y2="578.2" stroke="#555" stroke-width="1.3" stroke-dasharray="13 14"/>
<line x1="1730.0" y1="590.8" x2="1800.0" y2="590.8" stroke="#555" stroke-width="1.3"/>
<line x1="1860.5" y1="590.8" x2="1931.0" y2="590.8" stroke="#555" stroke-width="1.3" stroke-dasharray="13 14"/>
<line x1="1730.0" y1="603.4" x2="1800.0" y2="603.4" stroke="#555" stroke-width="1.3"/>
<line x1="1860.5" y1="603.4" x2="1931.0" y2="603.4" stroke="#555" stroke-width="1.3" stroke-dasharray="13 14"/>
<line x1="1730.0" y1="616.0" x2="1800.0" y2="616.0" stroke="#555" stroke-width="1.3"/>
<line x1="1860.5" y1="616.0" x2="1931.0" y2="616.0" stroke="#555" stroke-width="1.3" stroke-dasharray="13 14"/>
<line x1="1730.0" y1="628.6" x2="1800.0" y2="628.6" stroke="#555" stroke-width="1.3"/>
<line x1="1860.5" y1="628.6" x2="1931.0" y2="628.6" stroke="#555" stroke-width="1.3" stroke-dasharray="13 14"/>
<line x1="1730.0" y1="641.2" x2="1800.0" y2="641.2" stroke="#555" stroke-width="1.3"/>
<line x1="1860.5" y1="641.2" x2="1931.0" y2="641.2" stroke="#555" stroke-width="1.3" stroke-dasharray="13 14"/>
<line x1="1730.0" y1="653.0" x2="1800.0" y2="653.0" stroke="#555" stroke-width="1.3"/>
<path d="M1765 535 L1765 481.7 L1896 481.7 L1896 653" fill="none" stroke="#555" stroke-width="1.3" stroke-dasharray="14 9"/>
<line x1="1765.0" y1="560.0" x2="1765.0" y2="653.0" stroke="#555" stroke-width="1.3" stroke-dasharray="14 9"/>
<path d="M1800 653 L1800 507 L1860.5 507 L1860.5 653" fill="none" stroke="#555" stroke-width="1.3" stroke-dasharray="14 9"/>
<line x1="1800.0" y1="591.0" x2="1800.0" y2="653.0" stroke="#555" stroke-width="1.3"/>
<path d="M1737 458 L1886 498 L1931 653" fill="none" stroke="#999" stroke-width="1" stroke-dasharray="10 5"/>
<path d="M1730 576 L1800 600" fill="none" stroke="#999" stroke-width="1"/>
<line x1="1730.0" y1="1262.6" x2="1800.0" y2="1262.6" stroke="#555" stroke-width="1.3" stroke-dasharray="13 14"/>
<line x1="1860.5" y1="1262.6" x2="1931.0" y2="1262.6" stroke="#555" stroke-width="1.3"/>
<line x1="1730.0" y1="1275.3" x2="1800.0" y2="1275.3" stroke="#555" stroke-width="1.3" stroke-dasharray="13 14"/>
<line x1="1860.5" y1="1275.3" x2="1931.0" y2="1275.3" stroke="#555" stroke-width="1.3"/>
<line x1="1730.0" y1="1288.0" x2="1800.0" y2="1288.0" stroke="#555" stroke-width="1.3" stroke-dasharray="13 14"/>
<line x1="1860.5" y1="1288.0" x2="1931.0" y2="1288.0" stroke="#555" stroke-width="1.3"/>
<line x1="1730.0" y1="1300.7" x2="1800.0" y2="1300.7" stroke="#555" stroke-width="1.3" stroke-dasharray="13 14"/>
<line x1="1860.5" y1="1300.7" x2="1931.0" y2="1300.7" stroke="#555" stroke-width="1.3" stroke-dasharray="13 14"/>
<line x1="1730.0" y1="1313.4" x2="1800.0" y2="1313.4" stroke="#555" stroke-width="1.3" stroke-dasharray="13 14"/>
<line x1="1860.5" y1="1313.4" x2="1931.0" y2="1313.4" stroke="#555" stroke-width="1.3" stroke-dasharray="13 14"/>
<line x1="1730.0" y1="1326.1" x2="1800.0" y2="1326.1" stroke="#555" stroke-width="1.3" stroke-dasharray="13 14"/>
<line x1="1860.5" y1="1326.1" x2="1931.0" y2="1326.1" stroke="#555" stroke-width="1.3" stroke-dasharray="13 14"/>
<line x1="1730.0" y1="1338.8" x2="1800.0" y2="1338.8" stroke="#555" stroke-width="1.3" stroke-dasharray="13 14"/>
<line x1="1860.5" y1="1338.8" x2="1931.0" y2="1338.8" stroke="#555" stroke-width="1.3" stroke-dasharray="13 14"/>
<line x1="1730.0" y1="1351.5" x2="1800.0" y2="1351.5" stroke="#555" stroke-width="1.3" stroke-dasharray="13 14"/>
<line x1="1860.5" y1="1351.5" x2="1931.0" y2="1351.5" stroke="#555" stroke-width="1.3" stroke-dasharray="13 14"/>
<line x1="1730.0" y1="1364.2" x2="1800.0" y2="1364.2" stroke="#555" stroke-width="1.3" stroke-dasharray="13 14"/>
<line x1="1860.5" y1="1364.2" x2="1931.0" y2="1364.2" stroke="#555" stroke-width="1.3" stroke-dasharray="13 14"/>
<path d="M1764.7 1250 L1764.7 1405.8 L1895.8 1405.8 L1895.8 1250" fill="none" stroke="#555" stroke-width="1.3" stroke-dasharray="14 9"/>
<path d="M1800.3 1250 L1800.3 1375.5 L1860 1375.5 L1860 1250" fill="none" stroke="#555" stroke-width="1.3" stroke-dasharray="14 9"/>
<line x1="1860.5" y1="1250.0" x2="1860.5" y2="1289.0" stroke="#555" stroke-width="1.3"/>
<path d="M1860 1290 L1931 1316" fill="none" stroke="#999" stroke-width="1"/>
<line x1="1991.0" y1="1527.0" x2="1991.0" y2="1617.0" stroke="#555" stroke-width="1.1"/>
<line x1="2003.5" y1="1527.0" x2="2003.5" y2="1617.0" stroke="#555" stroke-width="1.1"/>
<line x1="2016.0" y1="1527.0" x2="2016.0" y2="1617.0" stroke="#555" stroke-width="1.1"/>
<line x1="2028.5" y1="1527.0" x2="2028.5" y2="1617.0" stroke="#555" stroke-width="1.1"/>
<line x1="2041.0" y1="1527.0" x2="2041.0" y2="1617.0" stroke="#555" stroke-width="1.1"/>
<line x1="2053.5" y1="1527.0" x2="2053.5" y2="1617.0" stroke="#555" stroke-width="1.1"/>
<line x1="2066.0" y1="1527.0" x2="2066.0" y2="1617.0" stroke="#555" stroke-width="1.1"/>
<line x1="1991.0" y1="1571.0" x2="2066.0" y2="1571.0" stroke="#555" stroke-width="1.1"/>
<rect x="2066.0" y="1527.0" width="404.6" height="90.0" fill="none" stroke="#000" stroke-width="1.6"/>
<circle cx="1543.7" cy="1015" r="10" fill="none" stroke="#777" stroke-width="1"/>
<path d="M1543.7 1015 L1543.7 1005 A10 10 0 0 0 1533.7 1015 Z M1543.7 1015 L1543.7 1025 A10 10 0 0 0 1553.7 1015 Z" fill="#000"/>
<line x1="1525.7" y1="1015.0" x2="1603.7" y2="1015.0" stroke="#000" stroke-width="1.4"/>
<line x1="1543.7" y1="994.0" x2="1543.7" y2="1036.0" stroke="#000" stroke-width="1.4"/>
<text x="1568.7" y="1012.0" font-size="15" font-weight="400" text-anchor="start" fill="#111">±0,00</text>
<circle cx="1544" cy="1344" r="10" fill="none" stroke="#777" stroke-width="1"/>
<path d="M1544 1344 L1544 1334 A10 10 0 0 0 1534 1344 Z M1544 1344 L1544 1354 A10 10 0 0 0 1554 1344 Z" fill="#000"/>
<line x1="1526.0" y1="1344.0" x2="1604.0" y2="1344.0" stroke="#000" stroke-width="1.4"/>
<line x1="1544.0" y1="1323.0" x2="1544.0" y2="1365.0" stroke="#000" stroke-width="1.4"/>
<text x="1569.0" y="1341.0" font-size="15" font-weight="400" text-anchor="start" fill="#111">±0,00</text>
<circle cx="1543.7" cy="1569.6" r="10" fill="none" stroke="#777" stroke-width="1"/>
<path d="M1543.7 1569.6 L1543.7 1559.6 A10 10 0 0 0 1533.7 1569.6 Z M1543.7 1569.6 L1543.7 1579.6 A10 10 0 0 0 1553.7 1569.6 Z" fill="#000"/>
<line x1="1525.7" y1="1569.6" x2="1603.7" y2="1569.6" stroke="#000" stroke-width="1.4"/>
<line x1="1543.7" y1="1548.6" x2="1543.7" y2="1590.6" stroke="#000" stroke-width="1.4"/>
<text x="1568.7" y="1566.6" font-size="15" font-weight="400" text-anchor="start" fill="#111">±0,00</text>
<circle cx="2403.7" cy="1502.8" r="10" fill="none" stroke="#777" stroke-width="1"/>
<path d="M2403.7 1502.8 L2403.7 1492.8 A10 10 0 0 0 2393.7 1502.8 Z M2403.7 1502.8 L2403.7 1512.8 A10 10 0 0 0 2413.7 1502.8 Z" fill="#000"/>
<line x1="2385.7" y1="1502.8" x2="2463.7" y2="1502.8" stroke="#000" stroke-width="1.4"/>
<line x1="2403.7" y1="1481.8" x2="2403.7" y2="1523.8" stroke="#000" stroke-width="1.4"/>
<text x="2428.7" y="1499.8" font-size="15" font-weight="400" text-anchor="start" fill="#111">±0,00</text>
<circle cx="2403.7" cy="1574.7" r="10" fill="none" stroke="#777" stroke-width="1"/>
<path d="M2403.7 1574.7 L2403.7 1564.7 A10 10 0 0 0 2393.7 1574.7 Z M2403.7 1574.7 L2403.7 1584.7 A10 10 0 0 0 2413.7 1574.7 Z" fill="#000"/>
<line x1="2385.7" y1="1574.7" x2="2463.7" y2="1574.7" stroke="#000" stroke-width="1.4"/>
<line x1="2403.7" y1="1553.7" x2="2403.7" y2="1595.7" stroke="#000" stroke-width="1.4"/>
<text x="2428.7" y="1571.7" font-size="15" font-weight="400" text-anchor="start" fill="#111">+1,25</text>
<rect x="1478.6" y="1596.7" width="59.2" height="60.6" fill="none" stroke="#000" stroke-width="1.5" stroke-dasharray="8 5"/>
<rect x="1500.0" y="1620.0" width="16.0" height="16.0" fill="#fff" stroke="#000" stroke-width="1.5"/>
<line x1="1478.6" y1="1596.7" x2="1537.8" y2="1657.3" stroke="#666" stroke-width="1"/>
<rect x="1301.0" y="851.5" width="92.0" height="80.5" fill="none" stroke="#000" stroke-width="2.4"/>
<rect x="1315.0" y="878.5" width="62.0" height="50.5" fill="none" stroke="#000" stroke-width="1.5"/>
<line x1="1304.0" y1="866.0" x2="1304.0" y2="929.0" stroke="#000" stroke-width="1.5"/>
<line x1="1308.5" y1="866.0" x2="1308.5" y2="929.0" stroke="#000" stroke-width="1.5"/>
<line x1="1312.0" y1="866.0" x2="1312.0" y2="929.0" stroke="#000" stroke-width="1.5"/>
<line x1="1381.0" y1="866.0" x2="1381.0" y2="929.0" stroke="#000" stroke-width="1.5"/>
<line x1="1385.0" y1="866.0" x2="1385.0" y2="929.0" stroke="#000" stroke-width="1.5"/>
<line x1="1389.0" y1="866.0" x2="1389.0" y2="929.0" stroke="#000" stroke-width="1.5"/>
<rect x="1322.0" y="866.0" width="8.0" height="9.0" fill="none" stroke="#000" stroke-width="1.3"/>
<rect x="1365.0" y="866.0" width="8.0" height="9.0" fill="none" stroke="#000" stroke-width="1.3"/>
<line x1="1290.4" y1="933.0" x2="1401.5" y2="933.0" stroke="#000" stroke-width="3.2"/>
<path d="M1318 940.4 L1328 940.4 M1318 940.4 L1322 937.5 M1366 940.4 L1376 940.4 M1376 940.4 L1372 937.5" stroke="#000" stroke-width="1.3" fill="none"/>
<rect x="873.0" y="840.0" width="199.0" height="5.5" fill="url(#xh)" stroke="#000" stroke-width="1.4"/>
<rect x="873.0" y="1237.5" width="200.0" height="5.2" fill="url(#xh)" stroke="#000" stroke-width="1.4"/>
<rect x="1946.0" y="840.0" width="20.0" height="5.0" fill="url(#xh)" stroke="#000" stroke-width="1.4"/>
<rect x="2036.0" y="840.0" width="200.0" height="5.0" fill="url(#xh)" stroke="#000" stroke-width="1.4"/>
<rect x="2283.0" y="840.0" width="200.0" height="5.0" fill="url(#xh)" stroke="#000" stroke-width="1.4"/>
<rect x="2553.0" y="840.0" width="18.0" height="5.0" fill="url(#xh)" stroke="#000" stroke-width="1.4"/>
<rect x="1946.0" y="1045.0" width="20.0" height="4.0" fill="url(#xh)" stroke="#000" stroke-width="1.4"/>
<rect x="2036.0" y="1045.0" width="176.0" height="4.0" fill="url(#xh)" stroke="#000" stroke-width="1.4"/>
<rect x="2310.0" y="1045.0" width="173.0" height="4.0" fill="url(#xh)" stroke="#000" stroke-width="1.4"/>
<rect x="2553.0" y="1045.0" width="18.0" height="4.0" fill="url(#xh)" stroke="#000" stroke-width="1.4"/>
<line x1="2258.7" y1="465.0" x2="2258.7" y2="653.0" stroke="#000" stroke-width="2.2"/>
<line x1="2264.0" y1="465.0" x2="2264.0" y2="653.0" stroke="#000" stroke-width="1.2"/>
<line x1="1297.4" y1="1250.0" x2="1297.4" y2="1418.0" stroke="#000" stroke-width="1.6"/>
<line x1="1301.0" y1="1250.0" x2="1301.0" y2="1418.0" stroke="#000" stroke-width="1.2"/>
<line x1="1945.0" y1="845.0" x2="1945.0" y2="1045.0" stroke="#000" stroke-width="1.6"/>
<path d="M2746.6 1786 L2778.4 1756 L2770 1806 L2801.7 1776.6" fill="none" stroke="#000" stroke-width="4" stroke-linejoin="miter"/>
<rect x="2870.0" y="966.0" width="471.0" height="840.0" fill="#fff" stroke="#000" stroke-width="2"/>
<line x1="2870.0" y1="1137.0" x2="3341.0" y2="1137.0" stroke="#000" stroke-width="2"/>
<line x1="2870.0" y1="1250.0" x2="3341.0" y2="1250.0" stroke="#000" stroke-width="2"/>
<line x1="2870.0" y1="1307.0" x2="3341.0" y2="1307.0" stroke="#000" stroke-width="2"/>
<line x1="2870.0" y1="1363.0" x2="3341.0" y2="1363.0" stroke="#000" stroke-width="2"/>
<line x1="2870.0" y1="1418.0" x2="3341.0" y2="1418.0" stroke="#000" stroke-width="2"/>
<line x1="2870.0" y1="1473.0" x2="3341.0" y2="1473.0" stroke="#000" stroke-width="2"/>
<line x1="2870.0" y1="1529.0" x2="3341.0" y2="1529.0" stroke="#000" stroke-width="2"/>
<line x1="2870.0" y1="1584.0" x2="3341.0" y2="1584.0" stroke="#000" stroke-width="2"/>
<line x1="2870.0" y1="1640.0" x2="3341.0" y2="1640.0" stroke="#000" stroke-width="2"/>
<line x1="2870.0" y1="1696.0" x2="3341.0" y2="1696.0" stroke="#000" stroke-width="2"/>
<line x1="2870.0" y1="1751.0" x2="3341.0" y2="1751.0" stroke="#000" stroke-width="2"/>
<line x1="3105.0" y1="1250.0" x2="3105.0" y2="1806.0" stroke="#000" stroke-width="2"/>
<g transform="translate(2921,1016) scale(1.1912)"><clipPath id="lgt"><rect width="68" height="68" rx="6"/></clipPath><g clip-path="url(#lgt)"><rect width="68" height="68" fill="#2366B0"/><path d="M0 9.3 A 19.4 9.3 0 0 0 19.4 0 L 24.9 0 A 24.9 15.6 0 0 1 0 15.6 Z" fill="#fff"/><path d="M0 19 A 30 19 0 0 0 30 0 L 34.4 0 A 34.4 25.5 0 0 1 0 25.5 Z" fill="#fff"/><path d="M0 30 A 39 30 0 0 0 39 0 L 43.7 0 A 43.7 37.6 0 0 1 0 37.6 Z" fill="#fff"/><path d="M0 42.8 A 46.3 42.8 0 0 0 46.3 0 L 50 0 A 50 50.9 0 0 1 0 50.9 Z" fill="#fff"/><path d="M0 57 A 53.5 57 0 0 0 53.5 0 L 56.4 0 A 56.4 85.8 0 0 1 0 85.8 Z" fill="#fff"/></g></g>
<text x="3012.0" y="1075.0" font-size="58" font-weight="700" text-anchor="start" fill="#4A4A4A" letter-spacing="-1.5">PlanRadar</text>
<text x="3105.0" y="1207.0" font-size="40" font-weight="700" text-anchor="middle" fill="#0a0a0a">BEISPIELPROJEKT</text>
<text x="2890.0" y="1284.0" font-size="21" font-weight="700" text-anchor="start" fill="#0a0a0a">Projektname</text>
<text x="3126.0" y="1284.0" font-size="21" font-weight="400" text-anchor="start" fill="#222">Kongresszentrum</text>
<text x="2890.0" y="1341.0" font-size="21" font-weight="700" text-anchor="start" fill="#0a0a0a">Addresse</text>
<text x="3126.0" y="1341.0" font-size="21" font-weight="400" text-anchor="start" fill="#222">PlanRadarstraße 1</text>
<text x="2890.0" y="1395.0" font-size="21" font-weight="700" text-anchor="start" fill="#0a0a0a">Projektnummer</text>
<text x="3126.0" y="1395.0" font-size="21" font-weight="400" text-anchor="start" fill="#222">1901</text>
<text x="2890.0" y="1452.0" font-size="21" font-weight="700" text-anchor="start" fill="#0a0a0a">Plannummer</text>
<text x="3126.0" y="1452.0" font-size="21" font-weight="400" text-anchor="start" fill="#222">19 Test 001</text>
<text x="2890.0" y="1506.0" font-size="21" font-weight="700" text-anchor="start" fill="#0a0a0a">Planformat</text>
<text x="3126.0" y="1506.0" font-size="21" font-weight="400" text-anchor="start" fill="#222">A2</text>
<text x="2890.0" y="1784.0" font-size="21" font-weight="700" text-anchor="start" fill="#0a0a0a">Planverfasser</text>
<text x="3126.0" y="1784.0" font-size="21" font-weight="400" text-anchor="start" fill="#222">PlanRadar GmbH</text>
<text x="3160.0" y="1505.0" font-size="10" font-weight="700" text-anchor="start" fill="#222">(420 x 594 mm / 16.5 x 23.4 in)</text>
<g transform="translate(1404,394.8)">
<path d="M0 57 L 20 20 Q 30 12 42 13 Q 53 16 47 28 Q 36 43 0 57 Z" fill="#000" opacity="0.10"/>
<path d="M-23.2 11.7 A 26 26 0 1 1 23.2 11.7 L 0 57.5 Z" fill="#868686"/>
<path d="M-23.2 11.7 A 26 26 0 0 1 0 -26 L 0 57.5 Z" fill="#6E6E6E"/>
<circle r="17" fill="#F4F4F4"/><path d="M0 -17 A 17 17 0 0 0 0 17 Z" fill="#E2E2E2"/>
<circle r="11" fill="#78CC00"/>
</g>
<g transform="translate(1635,381)">
<path d="M0 57 L 20 20 Q 30 12 42 13 Q 53 16 47 28 Q 36 43 0 57 Z" fill="#000" opacity="0.10"/>
<path d="M-23.2 11.7 A 26 26 0 1 1 23.2 11.7 L 0 57.5 Z" fill="#0090FA"/>
<path d="M-23.2 11.7 A 26 26 0 0 1 0 -26 L 0 57.5 Z" fill="#0078D7"/>
<circle r="17" fill="#F4F4F4"/><path d="M0 -17 A 17 17 0 0 0 0 17 Z" fill="#E2E2E2"/>
<circle r="11" fill="#E04410"/>
</g>
<g transform="translate(2008,386)">
<path d="M0 57 L 20 20 Q 30 12 42 13 Q 53 16 47 28 Q 36 43 0 57 Z" fill="#000" opacity="0.10"/>
<path d="M-23.2 11.7 A 26 26 0 1 1 23.2 11.7 L 0 57.5 Z" fill="#0090FA"/>
<path d="M-23.2 11.7 A 26 26 0 0 1 0 -26 L 0 57.5 Z" fill="#0078D7"/>
<circle r="17" fill="#F4F4F4"/><path d="M0 -17 A 17 17 0 0 0 0 17 Z" fill="#E2E2E2"/>
<circle r="11" fill="#3A4BC4"/>
</g>
<g transform="translate(1185.6,462.5)">
<path d="M0 57 L 20 20 Q 30 12 42 13 Q 53 16 47 28 Q 36 43 0 57 Z" fill="#000" opacity="0.10"/>
<path d="M-23.2 11.7 A 26 26 0 1 1 23.2 11.7 L 0 57.5 Z" fill="#0090FA"/>
<path d="M-23.2 11.7 A 26 26 0 0 1 0 -26 L 0 57.5 Z" fill="#0078D7"/>
<circle r="17" fill="#F4F4F4"/><path d="M0 -17 A 17 17 0 0 0 0 17 Z" fill="#E2E2E2"/>
<circle r="11" fill="#E04410"/>
</g>
<g transform="translate(2098.4,492.5)">
<path d="M0 57 L 20 20 Q 30 12 42 13 Q 53 16 47 28 Q 36 43 0 57 Z" fill="#000" opacity="0.10"/>
<path d="M-23.2 11.7 A 26 26 0 1 1 23.2 11.7 L 0 57.5 Z" fill="#0090FA"/>
<path d="M-23.2 11.7 A 26 26 0 0 1 0 -26 L 0 57.5 Z" fill="#0078D7"/>
<circle r="17" fill="#F4F4F4"/><path d="M0 -17 A 17 17 0 0 0 0 17 Z" fill="#E2E2E2"/>
<circle r="11" fill="#ABABAB"/>
</g>
<g transform="translate(1632.5,744)">
<path d="M0 57 L 20 20 Q 30 12 42 13 Q 53 16 47 28 Q 36 43 0 57 Z" fill="#000" opacity="0.10"/>
<path d="M-23.2 11.7 A 26 26 0 1 1 23.2 11.7 L 0 57.5 Z" fill="#0090FA"/>
<path d="M-23.2 11.7 A 26 26 0 0 1 0 -26 L 0 57.5 Z" fill="#0078D7"/>
<circle r="17" fill="#F4F4F4"/><path d="M0 -17 A 17 17 0 0 0 0 17 Z" fill="#E2E2E2"/>
<circle r="11" fill="#E04410"/>
</g>
<g transform="translate(1671.6,828.4)">
<path d="M0 57 L 20 20 Q 30 12 42 13 Q 53 16 47 28 Q 36 43 0 57 Z" fill="#000" opacity="0.10"/>
<path d="M-23.2 11.7 A 26 26 0 1 1 23.2 11.7 L 0 57.5 Z" fill="#868686"/>
<path d="M-23.2 11.7 A 26 26 0 0 1 0 -26 L 0 57.5 Z" fill="#6E6E6E"/>
<circle r="17" fill="#F4F4F4"/><path d="M0 -17 A 17 17 0 0 0 0 17 Z" fill="#E2E2E2"/>
<circle r="11" fill="#78CC00"/>
</g>
<g transform="translate(1840.7,821.2)">
<path d="M0 57 L 20 20 Q 30 12 42 13 Q 53 16 47 28 Q 36 43 0 57 Z" fill="#000" opacity="0.10"/>
<path d="M-23.2 11.7 A 26 26 0 1 1 23.2 11.7 L 0 57.5 Z" fill="#0090FA"/>
<path d="M-23.2 11.7 A 26 26 0 0 1 0 -26 L 0 57.5 Z" fill="#0078D7"/>
<circle r="17" fill="#F4F4F4"/><path d="M0 -17 A 17 17 0 0 0 0 17 Z" fill="#E2E2E2"/>
<circle r="11" fill="#ABABAB"/>
</g>
<g transform="translate(1344.7,840.3)">
<path d="M0 57 L 20 20 Q 30 12 42 13 Q 53 16 47 28 Q 36 43 0 57 Z" fill="#000" opacity="0.10"/>
<path d="M-23.2 11.7 A 26 26 0 1 1 23.2 11.7 L 0 57.5 Z" fill="#868686"/>
<path d="M-23.2 11.7 A 26 26 0 0 1 0 -26 L 0 57.5 Z" fill="#6E6E6E"/>
<circle r="17" fill="#F4F4F4"/><path d="M0 -17 A 17 17 0 0 0 0 17 Z" fill="#E2E2E2"/>
<circle r="11" fill="#62645B"/>
</g>
<g transform="translate(855.4,875)">
<path d="M0 57 L 20 20 Q 30 12 42 13 Q 53 16 47 28 Q 36 43 0 57 Z" fill="#000" opacity="0.10"/>
<path d="M-23.2 11.7 A 26 26 0 1 1 23.2 11.7 L 0 57.5 Z" fill="#868686"/>
<path d="M-23.2 11.7 A 26 26 0 0 1 0 -26 L 0 57.5 Z" fill="#6E6E6E"/>
<circle r="17" fill="#F4F4F4"/><path d="M0 -17 A 17 17 0 0 0 0 17 Z" fill="#E2E2E2"/>
<circle r="11" fill="#3A4BC4"/>
</g>
<g transform="translate(972,1557)">
<path d="M0 57 L 20 20 Q 30 12 42 13 Q 53 16 47 28 Q 36 43 0 57 Z" fill="#000" opacity="0.10"/>
<path d="M-23.2 11.7 A 26 26 0 1 1 23.2 11.7 L 0 57.5 Z" fill="#0090FA"/>
<path d="M-23.2 11.7 A 26 26 0 0 1 0 -26 L 0 57.5 Z" fill="#0078D7"/>
<circle r="17" fill="#F4F4F4"/><path d="M0 -17 A 17 17 0 0 0 0 17 Z" fill="#E2E2E2"/>
<circle r="11" fill="#E04410"/>
</g>
<g transform="translate(1835,1560.5)">
<path d="M0 57 L 20 20 Q 30 12 42 13 Q 53 16 47 28 Q 36 43 0 57 Z" fill="#000" opacity="0.10"/>
<path d="M-23.2 11.7 A 26 26 0 1 1 23.2 11.7 L 0 57.5 Z" fill="#868686"/>
<path d="M-23.2 11.7 A 26 26 0 0 1 0 -26 L 0 57.5 Z" fill="#6E6E6E"/>
<circle r="17" fill="#F4F4F4"/><path d="M0 -17 A 17 17 0 0 0 0 17 Z" fill="#E2E2E2"/>
<circle r="11" fill="#E04410"/>
</g>
</g></svg>
<div id="sb"></div><svg style="position:absolute;left:21px;top:29px" width="68" height="68" viewBox="0 0 68 68"><defs><clipPath id="lgs"><rect width="68" height="68" rx="7"/></clipPath></defs><g clip-path="url(#lgs)"><rect width="68" height="68" fill="#0063CC"/><path d="M0 9.3 A 19.4 9.3 0 0 0 19.4 0 L 24.9 0 A 24.9 15.6 0 0 1 0 15.6 Z" fill="#fff"/><path d="M0 19 A 30 19 0 0 0 30 0 L 34.4 0 A 34.4 25.5 0 0 1 0 25.5 Z" fill="#fff"/><path d="M0 30 A 39 30 0 0 0 39 0 L 43.7 0 A 43.7 37.6 0 0 1 0 37.6 Z" fill="#fff"/><path d="M0 42.8 A 46.3 42.8 0 0 0 46.3 0 L 50 0 A 50 50.9 0 0 1 0 50.9 Z" fill="#fff"/><path d="M0 57 A 53.5 57 0 0 0 53.5 0 L 56.4 0 A 56.4 85.8 0 0 1 0 85.8 Z" fill="#fff"/></g></svg><div class="t" style="left:111px;top:30.3px;font-size:28px;font-weight:400;color:#fff;letter-spacing:-0.12px;">Robert Hammer</div>
<div class="t" style="left:111px;top:71.1px;font-size:27px;font-weight:700;color:#3B93DB;letter-spacing:-0.8px;">PlanRadar</div>
<svg style="position:absolute;left:426px;top:49px" width="16" height="26" viewBox="0 0 16 26"><path d="M3 3 L13 13 L3 23" fill="none" stroke="#9aa0a8" stroke-width="3.2" stroke-linecap="round" stroke-linejoin="round"/></svg><div style="position:absolute;left:16px;top:240px;width:442px;height:80px;background:#1F63B1;border-radius:10px"></div><div class="t" style="left:100px;top:172.1px;font-size:27px;font-weight:700;color:#fff;letter-spacing:-0.4px;">Dashboard</div>
<svg style="position:absolute;left:36px;top:164px" width="40" height="40" viewBox="0 0 40 40"><circle cx="20" cy="20" r="15" fill="none" stroke="#fff" stroke-width="2.8" stroke-linecap="round" stroke-linejoin="round"/><path d="M20 8 L20 22" fill="none" stroke="#fff" stroke-width="2.8" stroke-linecap="round" stroke-linejoin="round"/><circle cx="20" cy="23" r="3" fill="#fff"/><rect x="12" y="11" width="3" height="3" fill="#fff"/><rect x="25" y="11" width="3" height="3" fill="#fff"/><rect x="8" y="17" width="3" height="3" fill="#fff"/><rect x="29" y="17" width="3" height="3" fill="#fff"/></svg>
<div class="t" style="left:100px;top:267.1px;font-size:27px;font-weight:700;color:#fff;letter-spacing:-0.37px;">Tickets</div>
<svg style="position:absolute;left:36px;top:260px" width="40" height="40" viewBox="0 0 40 40"><path d="M5 8 Q5 5 8 5 L17 5 L30 18 Q31.5 19.5 30 21 L22 29 Q20.5 30.5 19 29 L6 16 Z" fill="#fff"/><rect x="10" y="9" width="3.2" height="3.2" fill="#1F63B1"/><path d="M21 5.5 L34 18.5 Q35 19.5 34 20.5 L24 30.5" fill="none" stroke="#fff" stroke-width="2.8" stroke-linecap="round"/></svg>
<div class="t" style="left:100px;top:362.7px;font-size:27px;font-weight:700;color:#fff;letter-spacing:-0.27px;">Project reports</div>
<svg style="position:absolute;left:36px;top:356px" width="40" height="40" viewBox="0 0 40 40"><path d="M7 5 L20 5 L26 11 L26 18 M26 31 Q26 35 22 35 L9 35 Q5 35 5 31 L5 9 Q5 5 9 5" fill="none" stroke="#fff" stroke-width="2.8" stroke-linecap="round" stroke-linejoin="round"/><path d="M19 5 L19 12 L26 12" fill="#fff" stroke="#fff" stroke-width="2"/><path d="M9 29 L12 25 L14 29 L16 24 L18 29 L21 28" fill="none" stroke="#fff" stroke-width="1.8"/><path d="M22 30 L34 18 L37 21 L25 33 L21 34 Z" fill="#fff"/></svg>
<div class="t" style="left:100px;top:460.1px;font-size:27px;font-weight:700;color:#fff;letter-spacing:-0.83px;">Schedule</div>
<svg style="position:absolute;left:36px;top:452px" width="40" height="40" viewBox="0 0 40 40"><path d="M6 5 L6 34 L34 34" fill="none" stroke="#fff" stroke-width="2.8" stroke-linecap="round" stroke-linejoin="round"/><path d="M13 13 L19 13 M15 19 L25 19 M22 25 L30 25" fill="none" stroke="#fff" stroke-width="2.8" stroke-linecap="round" stroke-linejoin="round"/></svg>
<div class="t" style="left:100px;top:555.7px;font-size:27px;font-weight:700;color:#fff;letter-spacing:-0.19px;">SiteView</div>
<svg style="position:absolute;left:36px;top:548px" width="40" height="40" viewBox="0 0 40 40"><circle cx="20" cy="7" r="3" fill="none" stroke="#fff" stroke-width="2.8" stroke-linecap="round" stroke-linejoin="round"/><path d="M15 18 Q15 13 20 13 Q25 13 25 18 L23 22 L23 26 L17 26 L17 22 Z" fill="none" stroke="#fff" stroke-width="2.8" stroke-linecap="round" stroke-linejoin="round"/><ellipse cx="20" cy="29" rx="15" ry="5" fill="none" stroke="#fff" stroke-width="2.8" stroke-linecap="round" stroke-linejoin="round"/></svg>
<div class="t" style="left:100px;top:651.1px;font-size:27px;font-weight:700;color:#fff;letter-spacing:-0.33px;">Documents</div>
<svg style="position:absolute;left:36px;top:644px" width="40" height="40" viewBox="0 0 40 40"><path d="M5 9 Q5 6 8 6 L16 6 L20 10 L32 10 Q35 10 35 13 L35 31 Q35 34 32 34 L8 34 Q5 34 5 31 Z" fill="none" stroke="#fff" stroke-width="2.8" stroke-linecap="round" stroke-linejoin="round"/></svg>
<div class="t" style="left:100px;top:748.1px;font-size:27px;font-weight:700;color:#fff;letter-spacing:-0.44px;">Projects</div>
<svg style="position:absolute;left:36px;top:740px" width="40" height="40" viewBox="0 0 40 40"><path d="M4 12 Q4 9 7 9 L15 9 L15 34 L7 34 Q4 34 4 31 Z" fill="none" stroke="#fff" stroke-width="2.8" stroke-linecap="round" stroke-linejoin="round"/><path d="M9 9 L9 6 M15 9 L15 6" fill="none" stroke="#fff" stroke-width="2.8" stroke-linecap="round" stroke-linejoin="round"/><path d="M17 8 Q17 5 20 5 L26 5 Q29 5 29 8 L29 14 L34 14 Q37 14 37 17 L37 31 Q37 34 34 34 L17 34 Z" fill="none" stroke="#fff" stroke-width="2.8" stroke-linecap="round" stroke-linejoin="round"/><rect x="8" y="14" width="3" height="3" fill="#fff"/><rect x="8" y="20" width="3" height="3" fill="#fff"/><rect x="8" y="26" width="3" height="3" fill="#fff"/><rect x="21" y="10" width="3" height="3" fill="#fff"/><rect x="21" y="16" width="3" height="3" fill="#fff"/><rect x="21" y="22" width="3" height="3" fill="#fff"/><rect x="30" y="20" width="3" height="3" fill="#fff"/><rect x="30" y="26" width="3" height="3" fill="#fff"/></svg>
<div class="t" style="left:100px;top:843.9px;font-size:27px;font-weight:700;color:#fff;letter-spacing:-0.97px;">Forms and Lists</div>
<svg style="position:absolute;left:36px;top:836px" width="40" height="40" viewBox="0 0 40 40"><path d="M7 36 L7 5 Q13 8 20 5.5 Q27 3 33 6 L33 23 Q27 20 20 22.5 Q13 25 7 22" fill="none" stroke="#fff" stroke-width="2.8" stroke-linecap="round" stroke-linejoin="round"/></svg>
<svg style="position:absolute;left:408px;top:843px" width="20" height="26" viewBox="0 0 20 26"><path d="M5 3 L15 13 L5 23" fill="none" stroke="#8f959d" stroke-width="3.2" stroke-linecap="round" stroke-linejoin="round"/></svg><div class="t" style="left:100px;top:940.1px;font-size:27px;font-weight:700;color:#fff;letter-spacing:-0.19px;">User Management</div>
<svg style="position:absolute;left:36px;top:932px" width="40" height="40" viewBox="0 0 40 40"><circle cx="20" cy="12" r="6.5" fill="none" stroke="#fff" stroke-width="2.8" stroke-linecap="round" stroke-linejoin="round"/><path d="M7 34 Q7 24 20 24 Q33 24 33 34 Z" fill="none" stroke="#fff" stroke-width="2.8" stroke-linecap="round" stroke-linejoin="round"/></svg>
<svg style="position:absolute;left:408px;top:939px" width="20" height="26" viewBox="0 0 20 26"><path d="M5 3 L15 13 L5 23" fill="none" stroke="#8f959d" stroke-width="3.2" stroke-linecap="round" stroke-linejoin="round"/></svg><div class="t" style="left:100px;top:1035.8px;font-size:27px;font-weight:700;color:#fff;letter-spacing:-0.54px;">Statistics</div>
<svg style="position:absolute;left:36px;top:1028px" width="40" height="40" viewBox="0 0 40 40"><path d="M17 9 A 13 13 0 1 0 30 22 L17 22 Z" fill="none" stroke="#fff" stroke-width="2.8" stroke-linecap="round" stroke-linejoin="round"/><path d="M21 5 A 13 13 0 0 1 34 18 L21 18 Z" fill="none" stroke="#fff" stroke-width="2.8" stroke-linecap="round" stroke-linejoin="round"/><path d="M24 22 L36 22 L30 30 Z" fill="#fff"/></svg>
<div class="t" style="left:100px;top:1131.8px;font-size:27px;font-weight:700;color:#fff;letter-spacing:-0.4px;">Templates</div>
<svg style="position:absolute;left:36px;top:1124px" width="40" height="40" viewBox="0 0 40 40"><rect x="9" y="8" width="22" height="27" rx="3" fill="none" stroke="#fff" stroke-width="2.8" stroke-linecap="round" stroke-linejoin="round"/><path d="M16 8 L16 6 Q16 3 20 3 Q24 3 24 6 L24 8" fill="none" stroke="#fff" stroke-width="2.8" stroke-linecap="round" stroke-linejoin="round"/><circle cx="20" cy="6" r="1.5" fill="#fff"/></svg>
<svg style="position:absolute;left:408px;top:1131px" width="20" height="26" viewBox="0 0 20 26"><path d="M5 3 L15 13 L5 23" fill="none" stroke="#8f959d" stroke-width="3.2" stroke-linecap="round" stroke-linejoin="round"/></svg><div class="t" style="left:100px;top:1228.1px;font-size:27px;font-weight:700;color:#fff;letter-spacing:-0.73px;">Settings</div>
<svg style="position:absolute;left:36px;top:1220px" width="40" height="40" viewBox="0 0 40 40"><polygon points="19.50,12.00 19.21,14.20 16.30,15.06 15.33,16.33 15.25,19.36 13.20,20.21 11.00,18.12 9.42,17.91 6.75,19.36 4.99,18.01 5.70,15.06 5.09,13.58 2.50,12.00 2.79,9.80 5.70,8.94 6.67,7.67 6.75,4.64 8.80,3.79 11.00,5.88 12.58,6.09 15.25,4.64 17.01,5.99 16.30,8.94 16.91,10.42" fill="none" stroke="#fff" stroke-width="2.2" stroke-linejoin="round"/><circle cx="11" cy="12" r="2.7" fill="none" stroke="#fff" stroke-width="2.2"/><polygon points="36.00,27.00 35.69,29.33 32.61,30.24 31.58,31.58 31.50,34.79 29.33,35.69 27.00,33.48 25.32,33.26 22.50,34.79 20.64,33.36 21.39,30.24 20.74,28.68 18.00,27.00 18.31,24.67 21.39,23.76 22.42,22.42 22.50,19.21 24.67,18.31 27.00,20.52 28.68,20.74 31.50,19.21 33.36,20.64 32.61,23.76 33.26,25.32" fill="none" stroke="#fff" stroke-width="2.2" stroke-linejoin="round"/><circle cx="27" cy="27" r="2.9" fill="none" stroke="#fff" stroke-width="2.2"/></svg>
<svg style="position:absolute;left:408px;top:1227px" width="20" height="26" viewBox="0 0 20 26"><path d="M5 3 L15 13 L5 23" fill="none" stroke="#8f959d" stroke-width="3.2" stroke-linecap="round" stroke-linejoin="round"/></svg><svg style="position:absolute;left:46px;top:1743px" width="24" height="26" viewBox="0 0 24 26"><path d="M17 3 L7 13 L17 23" fill="none" stroke="#fff" stroke-width="3.6" stroke-linecap="round" stroke-linejoin="round"/></svg><div class="t" style="left:88.8px;top:1743.3px;font-size:28px;font-weight:400;color:#fff;letter-spacing:-0.6px;">Collapse</div>

<div style="position:absolute;left:474px;top:0;width:2886px;height:122px;background:#0263CC"></div><div style="position:absolute;left:474px;top:0px;width:6px;height:1806px;background:#1F62B0"></div><div class="t" style="left:515px;top:48.5px;font-size:27px;font-weight:700;color:#fff;letter-spacing:-0.48px;">Project</div>
<div style="position:absolute;left:629px;top:30px;width:503px;height:60px;background:#1B5396;border-radius:5px"></div><div class="t" style="left:649px;top:47.3px;font-size:28px;font-weight:400;color:#fff;letter-spacing:-0.22px;">Office Complex 11 &gt; Ground Floor</div>
<svg style="position:absolute;left:1090px;top:57px" width="20" height="12" viewBox="0 0 20 12"><path d="M1.5 1.5 L18.5 1.5 L10.0 11 Z" fill="#fff" stroke="#fff" stroke-width="2" stroke-linejoin="round"/></svg><svg style="position:absolute;left:1172px;top:44px" width="36" height="36" viewBox="0 0 36 36"><polygon points="14.35,6.07 14.95,2.29 21.05,2.29 21.65,6.07 26.51,8.87 30.08,7.50 33.13,12.79 30.16,15.19 30.16,20.81 33.13,23.21 30.08,28.50 26.51,27.13 21.65,29.93 21.05,33.71 14.95,33.71 14.35,29.93 9.49,27.13 5.92,28.50 2.87,23.21 5.84,20.81 5.84,15.19 2.87,12.79 5.92,7.50 9.49,8.87" fill="#fff" stroke="#fff" stroke-width="1.2" stroke-linejoin="round"/><circle cx="18" cy="18" r="5.1" fill="#0263CC"/></svg><div class="t" style="left:1261px;top:48.1px;font-size:27px;font-weight:700;color:#fff;letter-spacing:0.27px;">Form</div>
<div style="position:absolute;left:1349px;top:30px;width:600px;height:60px;background:#165286;border-radius:5px"></div><div class="t" style="left:1369px;top:48.1px;font-size:27px;font-weight:700;color:#fff;letter-spacing:0.07px;">All forms in project</div>
<svg style="position:absolute;left:1911px;top:57px" width="20" height="12" viewBox="0 0 20 12"><path d="M1.5 1.5 L18.5 1.5 L10.0 11 Z" fill="#fff" stroke="#fff" stroke-width="2" stroke-linejoin="round"/></svg><div style="position:absolute;left:3168px;top:30px;width:64px;height:60px;border-radius:10px;box-sizing:border-box;border:2px solid #4C93F2;background:linear-gradient(135deg,#7EDB6A 0%,#22A4F2 22%,#1B78E6 48%,#166CDA 75%,#2A8FF0 100%)"></div>
<svg style="position:absolute;left:3168px;top:30px" width="64" height="60" viewBox="3168 30 64 60">
<g fill="none" stroke="#fff" stroke-width="4.2" stroke-linecap="round">
<ellipse cx="3199.5" cy="60.5" rx="23" ry="8" transform="rotate(45 3199.5 60.5)"/>
<ellipse cx="3199.5" cy="60.5" rx="23" ry="8" transform="rotate(-45 3199.5 60.5)"/>
</g>
<circle cx="3199" cy="48" r="7.5" fill="#1C86EA"/><circle cx="3206" cy="58" r="2.8" fill="#1A74E2"/>
<path d="M3199 42.5 Q3200 48.5 3205 49.5 Q3200 50.5 3199 56.5 Q3198 50.5 3193 49.5 Q3198 48.5 3199 42.5 Z" fill="#fff" stroke="#fff" stroke-width="1.5"/>
</svg><svg style="position:absolute;left:3276px;top:42px" width="34" height="38" viewBox="0 0 34 38">
<path d="M17 4.5 Q19 4.5 19 6.5 L19 7.5 Q26.5 9.5 26.5 19 L26.5 23 Q27 26 30.5 28 L30.5 29 L3.5 29 L3.5 28 Q7 26 7.5 23 L7.5 19 Q7.5 9.5 15 7.5 L15 6.5 Q15 4.5 17 4.5 Z" fill="#fff"/>
<path d="M13 30.5 Q17 35.5 21 30.5 Z" fill="#fff"/></svg>
<div style="position:absolute;left:3302px;top:34px;width:18px;height:18px;border-radius:50%;background:#F9D500"></div>
<div style="position:absolute;left:480px;top:122px;width:2880px;height:120px;background:#ECF0F4;border-bottom:2px solid #C8CED8"></div><div style="position:absolute;left:510px;top:152px;width:268px;height:60px;background:#62B016;border-radius:7px"></div><svg style="position:absolute;left:540px;top:168px" width="28" height="28" viewBox="0 0 28 28"><path d="M14 2 L14 26 M2 14 L26 14" stroke="#fff" stroke-width="3.6" stroke-linecap="round"/></svg><div class="t" style="left:582.7px;top:168.8px;font-size:28px;font-weight:400;color:#fff;letter-spacing:-0.09px;">Create Ticket</div>
<div style="position:absolute;left:808px;top:152px;width:2px;height:60px;background:#C3CCD6"></div><div class="t" style="left:839.5px;top:168.8px;font-size:28px;font-weight:700;color:#111;letter-spacing:0.43px;">View</div>
<div style="position:absolute;left:925px;top:152px;width:207px;height:60px;background:#fff;border:2px solid #C5CFDB;border-radius:7px;box-sizing:border-box"></div><svg style="position:absolute;left:945px;top:158px" width="55" height="48" viewBox="945 158 55 48">
<path d="M956 179 Q956 177.5 957.5 177 L964 174.5 L966 179 L966 193.5 Q966 195 964.5 195.5 L958 198 Q956 198.5 956 196.5 Z" fill="#000"/>
<path d="M968 182.5 L973 189.5 Q974 190.5 975 189.5 L980 182.5 L980 197.5 L968.5 194 Q968 193.8 968 193 Z" fill="#000"/>
<path d="M982 178 L990 174.5 Q992 174 992 176 L992 192 Q992 193 991 193.5 L982 197.5 Z" fill="#000"/>
<path d="M966.5 174 A 7.5 7.5 0 1 1 981.5 174 Q981 178 974 186 Q967 178 966.5 174 Z" fill="#000"/>
<circle cx="974" cy="173" r="2.5" fill="#fff"/>
</svg><div class="t" style="left:1007px;top:168.8px;font-size:28px;font-weight:400;color:#111;letter-spacing:-0.8px;">Plan</div>
<svg style="position:absolute;left:1081px;top:176px" width="21" height="13" viewBox="0 0 21 13"><path d="M1.5 1.5 L19.5 1.5 L10.5 12 Z" fill="#111" stroke="#111" stroke-width="2" stroke-linejoin="round"/></svg><div style="position:absolute;left:1163px;top:152px;width:2px;height:60px;background:#C3CCD6"></div><div style="position:absolute;left:1196px;top:152px;width:458px;height:60px;background:#fff;border:2px solid #C5CFDB;border-radius:7px;box-sizing:border-box"></div><svg style="position:absolute;left:1213px;top:166px" width="32" height="32" viewBox="0 0 32 32"><circle cx="13" cy="13" r="10" fill="none" stroke="#666" stroke-width="3"/><path d="M20.5 20.5 L29 29" stroke="#666" stroke-width="3.6" stroke-linecap="round"/></svg><div class="t" style="left:1258px;top:168.7px;font-size:28px;font-weight:400;color:#6E6E6E;letter-spacing:-0.44px;">Search tickets</div>
<div style="position:absolute;left:1677px;top:152px;width:58px;height:60px;background:#fff;border:2px solid #C5CFDB;border-radius:7px;box-sizing:border-box"></div><svg style="position:absolute;left:1688px;top:167px" width="36" height="34" viewBox="0 0 36 34"><path d="M2 2 L34 2 L22 16 L22 31 Q22 33 20 32 L16 29 Q14 28 14 26 L14 16 Z" fill="#111" stroke="#111" stroke-width="2" stroke-linejoin="round"/></svg><div style="position:absolute;left:1751px;top:152px;width:253px;height:60px;background:#fff;border:2px solid #C5CFDB;border-radius:7px;box-sizing:border-box"></div><div class="t" style="left:1782px;top:168.7px;font-size:28px;font-weight:400;color:#111;letter-spacing:-0.3px;">Saved filters</div>
<svg style="position:absolute;left:1953px;top:176px" width="21" height="13" viewBox="0 0 21 13"><path d="M1.5 1.5 L19.5 1.5 L10.5 12 Z" fill="#111" stroke="#111" stroke-width="2" stroke-linejoin="round"/></svg><div class="t" style="left:2030px;top:168.7px;font-size:28px;font-weight:400;color:#111;letter-spacing:0.11px;">18 tickets</div>
<div style="position:absolute;left:2596px;top:169px;width:28px;height:28px;background:#fff;border:2px solid #555C66;border-radius:6px;box-sizing:border-box"></div><div class="t" style="left:2639px;top:168.8px;font-size:28px;font-weight:400;color:#333;letter-spacing:-0.23px;">Hide closed tickets</div>
<div style="position:absolute;left:2897px;top:152px;width:2px;height:60px;background:#C3CCD6"></div><div style="position:absolute;left:2930px;top:152px;width:277px;height:60px;background:#fff;border:2px solid #C5CFDB;border-radius:7px;box-sizing:border-box"></div><svg style="position:absolute;left:2950px;top:158px" width="50" height="48" viewBox="2950 158 50 48">
<path d="M2964.5 166 L2975 166 L2975 174.5 Q2975 176 2976.5 176 L2985 176 L2985 185 L2972 185 Q2968 185 2968 189 L2968 197.7 L2964.5 197.7 Q2961 197.7 2961 194 L2961 169.5 Q2961 166 2964.5 166 Z" fill="#000"/>
<path d="M2977 166 L2985 174 L2977 174 Z" fill="#000"/>
<text x="0" y="0" transform="translate(2970.6 197.8) scale(0.8 1)" font-family="Liberation Sans" font-weight="700" font-size="13.6" fill="#000">PDF</text>
</svg><div class="t" style="left:3008px;top:168.8px;font-size:28px;font-weight:400;color:#111;letter-spacing:0.17px;">Create report</div>
<div style="position:absolute;left:3238px;top:152px;width:2px;height:60px;background:#C3CCD6"></div><div style="position:absolute;left:3296px;top:169px;width:8px;height:8px;border-radius:50%;background:#111"></div><div style="position:absolute;left:3296px;top:179px;width:8px;height:8px;border-radius:50%;background:#111"></div><div style="position:absolute;left:3296px;top:189px;width:8px;height:8px;border-radius:50%;background:#111"></div>
<div style="position:absolute;left:480px;top:244px;width:2px;height:1562px;background:#C5CFD9"></div>
<div style="position:absolute;left:509px;top:269px;width:954px;height:77px;background:#fff;border:2px solid #C3D0DC;border-radius:9px;box-sizing:border-box;box-shadow:0 2px 6px rgba(0,0,0,0.06)"></div><svg style="position:absolute;left:532px;top:292px" width="32" height="32" viewBox="0 0 32 32"><path d="M16 3 L16 29 M3 16 L29 16" fill="none" stroke="#111" stroke-width="3.4" stroke-linecap="round" stroke-linejoin="round"/></svg><svg style="position:absolute;left:601px;top:292px" width="32" height="32" viewBox="0 0 32 32"><path d="M3 16 L29 16" fill="none" stroke="#111" stroke-width="3.4" stroke-linecap="round" stroke-linejoin="round"/></svg><div style="position:absolute;left:654px;top:289px;width:2px;height:38px;background:#C3CCD6"></div><svg style="position:absolute;left:674px;top:291px" width="40" height="34" viewBox="0 0 40 34"><path d="M2 17 Q20 -4 38 17 Q20 38 2 17 Z" fill="none" stroke="#111" stroke-width="3.4" stroke-linecap="round" stroke-linejoin="round"/><circle cx="20" cy="17" r="7" fill="none" stroke="#111" stroke-width="3.4" stroke-linecap="round" stroke-linejoin="round"/><path d="M16 17 Q16 13 20 13" fill="none" stroke="#111" stroke-width="3"/></svg><svg style="position:absolute;left:746px;top:292px" width="32" height="32" viewBox="0 0 32 32"><path d="M3 11 L3 3 L11 3 M21 3 L29 3 L29 11 M29 21 L29 29 L21 29 M11 29 L3 29 L3 21" fill="none" stroke="#111" stroke-width="3.4" stroke-linecap="round" stroke-linejoin="round"/></svg><svg style="position:absolute;left:812px;top:290px" width="36" height="36" viewBox="0 0 36 36"><path d="M4 4 L14 14 M14 6 L14 14 L6 14 M32 4 L22 14 M22 6 L22 14 L30 14 M4 32 L14 22 M6 22 L14 22 L14 30 M32 32 L22 22 M30 22 L22 22 L22 30" fill="none" stroke="#111" stroke-width="3.4" stroke-linecap="round" stroke-linejoin="round"/></svg><div style="position:absolute;left:868px;top:279px;width:60px;height:59px;background:#F0F1F2;border-radius:7px"></div><svg style="position:absolute;left:880px;top:291px" width="36" height="36" viewBox="0 0 36 36"><circle cx="18" cy="18" r="15" fill="none" stroke="#111" stroke-width="3.4" stroke-linecap="round" stroke-linejoin="round"/><circle cx="18" cy="11" r="2.2" fill="#111"/><path d="M15 16 L18.5 16 L18.5 25 M15 25 L22 25" fill="none" stroke="#111" stroke-width="3.4" stroke-linecap="round" stroke-linejoin="round" stroke-width="3"/></svg><div style="position:absolute;left:936px;top:289px;width:2px;height:38px;background:#C3CCD6"></div><svg style="position:absolute;left:974px;top:291px" width="36" height="36" viewBox="0 0 36 36"><path d="M6 8 L6 16 L14 16" fill="none" stroke="#111" stroke-width="3.4" stroke-linecap="round" stroke-linejoin="round"/><path d="M6.5 15 A 13 13 0 1 1 8 25" fill="none" stroke="#111" stroke-width="3.4" stroke-linecap="round" stroke-linejoin="round"/><path d="M18 11 L18 19 L24 24" fill="none" stroke="#111" stroke-width="3.4" stroke-linecap="round" stroke-linejoin="round"/></svg><div class="t" style="left:1023px;top:294.8px;font-size:28px;font-weight:400;color:#111;letter-spacing:-0.28px;">Versions</div>
<div style="position:absolute;left:1143px;top:294px;width:31px;height:31px;border-radius:50%;background:#E6ECF2;border:1.5px solid #B5C3D0;box-sizing:border-box"></div><div class="t" style="left:1152px;top:300.1px;font-size:20px;font-weight:400;color:#222;">3</div>
<div style="position:absolute;left:1212px;top:289px;width:2px;height:38px;background:#C3CCD6"></div><svg style="position:absolute;left:1250px;top:290px" width="36" height="36" viewBox="0 0 36 36"><path d="M18 3 L18 22 M10 14 L18 22 L26 14" fill="none" stroke="#111" stroke-width="3.8" stroke-linecap="round" stroke-linejoin="round"/><path d="M3 24 L12 24 L18 29 L24 24 L33 24 L33 30 Q33 34 29 34 L7 34 Q3 34 3 30 Z" fill="#111"/><circle cx="28" cy="29" r="1.6" fill="#fff"/></svg><div class="t" style="left:1299px;top:294.8px;font-size:28px;font-weight:400;color:#111;letter-spacing:0.2px;">Download</div>
<div style="position:absolute;left:478px;top:981px;width:50px;height:88px;background:#EAEFF4;border:2px solid #C3D0DC;border-left:none;border-radius:0 12px 12px 0;box-sizing:border-box"></div><svg style="position:absolute;left:495px;top:1011px" width="18" height="28" viewBox="0 0 18 28"><path d="M4 3 L14 14 L4 25" fill="none" stroke="#111" stroke-width="3.2" stroke-linecap="round" stroke-linejoin="round"/></svg><div style="position:absolute;left:509px;top:1703px;width:470px;height:77px;background:#fff;border:2px solid #BCCAD6;border-radius:14px;box-sizing:border-box;box-shadow:0 4px 14px rgba(0,0,0,0.12)"></div><div style="position:absolute;left:518px;top:1712px;width:60px;height:59px;background:#D4E5F3;border-radius:9px"></div><svg style="position:absolute;left:534px;top:1726px" width="30" height="32" viewBox="0 0 30 32"><path d="M3 2 L3 26 L9 20 L14 30 L18 28 L13 18 L22 18 Z" fill="none" stroke="#111" stroke-width="3.2" stroke-linejoin="round"/></svg><svg style="position:absolute;left:595px;top:1723px" width="36" height="36" viewBox="0 0 36 36"><path d="M4 32 L6 24 L24 6 L30 12 L12 30 Z" fill="none" stroke="#111" stroke-width="3.2" stroke-linejoin="round"/><path d="M24 6 Q27 2 31 4 Q34 7 30 12 Z" fill="#111"/></svg><svg style="position:absolute;left:655px;top:1737px" width="18" height="12" viewBox="0 0 18 12"><path d="M2 2 L16 2 L9 10 Z" fill="#111" stroke="#111" stroke-width="2" stroke-linejoin="round"/></svg><div style="position:absolute;left:708px;top:1730px;width:33px;height:24px;border:3.2px solid #111;border-radius:4px;box-sizing:border-box"></div><svg style="position:absolute;left:763px;top:1737px" width="18" height="12" viewBox="0 0 18 12"><path d="M2 2 L16 2 L9 10 Z" fill="#111" stroke="#111" stroke-width="2" stroke-linejoin="round"/></svg><svg style="position:absolute;left:815px;top:1726px" width="32" height="32" viewBox="0 0 32 32"><path d="M3 6 L3 2 L29 2 L29 6 M16 2 L16 30 M10 30 L22 30" fill="none" stroke="#111" stroke-width="3.2" stroke-linecap="round" stroke-linejoin="round"/></svg><svg style="position:absolute;left:882px;top:1724px" width="36" height="36" viewBox="0 0 36 36"><path d="M4 26 L24 6 Q26 4 28 6 L32 10 Q34 12 32 14 L12 34 Q10 36 8 34 L4 30 Q2 28 4 26 Z M10 20 L13 23 M14 16 L17 19 M18 12 L21 15 M22 8 L25 11" fill="none" stroke="#B5B5B5" stroke-width="2.8" stroke-linecap="round"/></svg><svg style="position:absolute;left:940px;top:1737px" width="18" height="12" viewBox="0 0 18 12"><path d="M2 2 L16 2 L9 10 Z" fill="#B5B5B5" stroke="#B5B5B5" stroke-width="2" stroke-linejoin="round"/></svg>
<div style="position:absolute;left:2736px;top:1535px;width:600px;height:214px;background:#324558;border-radius:7px;box-shadow:0 0 0 1px #1f2a36"></div><svg style="position:absolute;left:3300px;top:1549px" width="24" height="24" viewBox="0 0 24 24"><path d="M4 4 L20 20 M20 4 L4 20" stroke="#DDE2E7" stroke-width="4.2" stroke-linecap="round"/></svg><div class="t" style="left:2768.6px;top:1572.7px;font-size:24px;font-weight:700;color:#fff;letter-spacing:0.45px;">PlanRadar</div>
<div class="t" style="right:56px;top:1571.8px;font-size:25px;font-weight:400;color:#9FAAB5;letter-spacing:-1.12px;">2025-07-28 02:15 pm</div>
<div class="t" style="left:2768.6px;top:1629.0px;font-size:26px;font-weight:700;color:#fff;letter-spacing:-0.9px;">The plan has been exported including tickets.</div>
<div style="position:absolute;left:2753px;top:1661px;width:210px;height:73px;border:5px solid #FF8800;border-radius:7px;box-sizing:border-box"></div><div style="position:absolute;left:2768px;top:1677px;width:180px;height:45px;background:#2289CB;border-radius:7px"></div><div class="t" style="left:2785px;top:1688.7px;font-size:24px;font-weight:700;color:#fff;letter-spacing:-1.2px;">Download File</div>
<div style="position:absolute;left:2686px;top:1671px;width:56px;height:56px;border-radius:50%;background:#FF8800"></div><div class="t" style="left:2697px;top:1686.3px;font-size:28px;font-weight:400;color:#111;letter-spacing:-1px;">10</div>
<svg style="position:absolute;left:2350px;top:1290px" width="420" height="400" viewBox="2350 1290 420 400">
<path d="M2370 1310 L2712 1633" stroke="#FF8800" stroke-width="11" stroke-linecap="round"/>
<path d="M2736 1656 L2693 1646 L2722 1616 Z" fill="#FF8800" stroke="#FF8800" stroke-width="3" stroke-linejoin="round"/>
</svg>
<div style="position:absolute;left:3358px;top:0;width:2px;height:122px;background:#4585D8"></div>
<div style="position:absolute;left:0;top:1804px;width:474px;height:2px;background:#4f5663"></div>
<div style="position:absolute;left:0;top:0;width:3360px;height:1806px;box-sizing:border-box;border-left:2px solid #4f5663;border-radius:0 0 22px 18px;box-shadow:0 0 0 40px #10140e;pointer-events:none"></div>
</body></html>
